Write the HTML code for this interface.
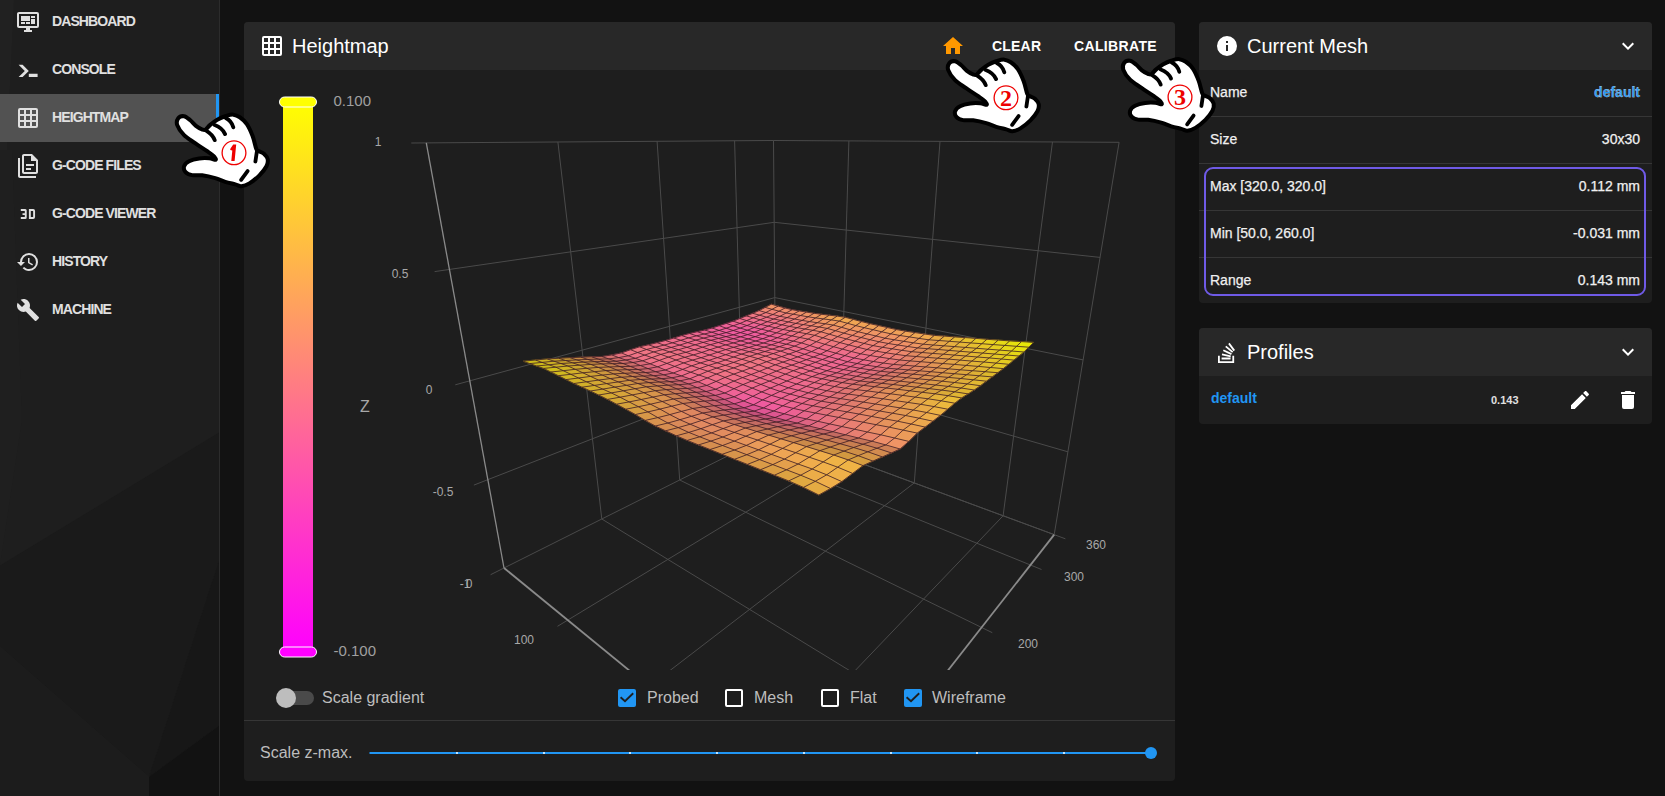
<!DOCTYPE html>
<html><head><meta charset="utf-8">
<style>
*{box-sizing:border-box;margin:0;padding:0}
html,body{width:1665px;height:796px;overflow:hidden;background:#121212;font-family:"Liberation Sans",sans-serif;color:#fff}
#side{position:absolute;left:0;top:0;width:219px;height:796px;background:#1e1e1e;overflow:hidden}
#sideb{position:absolute;left:219px;top:0;width:1px;height:796px;background:#2c2c2c}
.nav{position:absolute;left:0;width:219px;height:48px}
.nav .t{position:absolute;left:52px;top:15px;font-size:14px;line-height:16px;font-weight:bold;color:#e0e0e0;white-space:nowrap;letter-spacing:-0.9px}
.nav svg{position:absolute;left:16px;top:12px;fill:#e0e0e0}
.nav.act{background:#525252}
.nav.act .bar{position:absolute;left:216px;top:0;width:3px;height:48px;background:#2196f3}
.card{position:absolute;background:#1e1e1e;border-radius:4px;overflow:hidden}
.card .hd{position:absolute;left:0;top:0;right:0;height:48px;background:#282828}
.ttl{position:absolute;font-size:20px;line-height:24px;color:#fff;white-space:nowrap}
.ic{position:absolute;fill:#fff}
.row{position:absolute;left:0;right:0;height:47px;border-top:1px solid #363636}
.row .l{position:absolute;left:11px;top:13px;-webkit-text-stroke:0.25px #f0f0f0;font-size:14px;line-height:18px;color:#f0f0f0;white-space:nowrap}
.row .r{position:absolute;right:12px;top:13px;-webkit-text-stroke:0.25px #f0f0f0;font-size:14px;line-height:18px;color:#f0f0f0;white-space:nowrap}
.btn{position:absolute;font-size:14px;line-height:16px;font-weight:bold;color:#fff;white-space:nowrap}
.lbl{position:absolute;font-size:16px;line-height:18px;color:#bdbdbd;white-space:nowrap}
.cb{position:absolute;width:18px;height:18px;border-radius:2px}
.cb.on{background:#2196f3}
.cb.off{border:2px solid #fff}
.tick{position:absolute;font-size:12px;line-height:14px;color:#a8a8a8;white-space:nowrap}
#gfx{position:absolute;left:0;top:0;width:1665px;height:796px}
</style></head><body>
<div id="side">
 <svg style="position:absolute;left:0;top:0" width="219" height="796" viewBox="0 0 219 796">
  <polygon points="0,0 14,0 0,300" fill="#212121"/>
  <polygon points="0,150 12,150 22,420 0,565" fill="#1f1f1f"/>
  <polygon points="0,565.6 220,432 220,557.7 149,777 0,646.6" fill="#1a1a1a"/>
  <polygon points="0,646.6 149,777 149,796 0,796" fill="#1c1c1c"/>
  <polygon points="220,557.7 220,725 149,777" fill="#171717"/>
  <polygon points="149,777 220,725 220,796 149,796" fill="#121212"/>
 </svg>
 <div class="nav" style="top:-2px"><svg width="24" height="24" viewBox="0 0 24 24"><path d="M21,16V4H3V16H21M21,2A2,2 0 0,1 23,4V16A2,2 0 0,1 21,18H14V20H16V22H8V20H10V18H3C1.89,18 1,17.1 1,16V4C1,2.89 1.89,2 3,2H21M5,6H14V11H5V6M15,6H19V8H15V6M19,9V14H15V9H19M5,12H9V14H5V12M10,12H14V14H10V12Z"/></svg><span class="t">DASHBOARD</span></div>
 <div class="nav" style="top:46px"><svg width="24" height="24" viewBox="0 0 24 24"><path d="M2.6,6.8H6.6L12.8,12.9L6.6,19H2.6L8.8,12.9Z M12.8,15.8H21.6V19H12.8Z"/></svg><span class="t">CONSOLE</span></div>
 <div class="nav act" style="top:94px"><svg width="24" height="24" viewBox="0 0 24 24"><path d="M10,4V8H14V4H10M16,4V8H20V4H16M16,10V14H20V10H16M16,16V20H20V16H16M14,20V16H10V20H14M8,20V16H4V20H8M8,14V10H4V14H8M8,8V4H4V8H8M10,14H14V10H10V14M4,2H20A2,2 0 0,1 22,4V20A2,2 0 0,1 20,22H4C2.92,22 2,21.1 2,20V4A2,2 0 0,1 4,2Z"/></svg><span class="t">HEIGHTMAP</span><div class="bar"></div></div>
 <div class="nav" style="top:142px"><svg width="24" height="24" viewBox="0 0 24 24"><path d="M16,0H8C6.9,0 6,0.9 6,2V18C6,19.1 6.9,20 8,20H20C21.1,20 22,19.1 22,18V6L16,0M20,18H8V2H15V7H20V18M4,4V22H20V24H4C2.9,24 2,23.1 2,22V4H4M10,10V12H18V10H10M10,14V16H15V14H10Z"/></svg><span class="t">G-CODE FILES</span></div>
 <div class="nav" style="top:190px"><svg width="24" height="24" viewBox="0 0 24 24"><path fill-rule="evenodd" d="M4.8,7.1H9.2Q10.7,7.1 10.7,8.6V15.5Q10.7,17 9.2,17H4.8V15.1H8.8V13H6.5V11.2H8.8V9H4.8Z M12.9,7.1H17.2Q19.05,7.1 19.05,9V15.1Q19.05,17 17.2,17H12.9Z M14.8,9V15.1H16.8Q17.15,15.1 17.15,14.8V9.3Q17.15,9 16.8,9Z"/></svg><span class="t">G-CODE VIEWER</span></div>
 <div class="nav" style="top:238px"><svg width="24" height="24" viewBox="0 0 24 24"><path d="M13.5,8H12V13L16.28,15.54L17,14.33L13.5,12.25V8M13,3A9,9 0 0,0 4,12H1L4.96,16.03L9,12H6A7,7 0 0,1 13,5A7,7 0 0,1 20,12A7,7 0 0,1 13,19C11.07,19 9.32,18.21 8.06,16.94L6.64,18.36C8.27,20 10.5,21 13,21A9,9 0 0,0 22,12A9,9 0 0,0 13,3"/></svg><span class="t">HISTORY</span></div>
 <div class="nav" style="top:286px"><svg width="24" height="24" viewBox="0 0 24 24"><path d="M22.7,19L13.6,9.9C14.5,7.6 14,4.9 12.1,3C10.1,1 7.1,0.6 4.7,1.7L9,6L6,9L1.6,4.7C0.4,7.1 0.9,10.1 2.9,12.1C4.8,14 7.5,14.5 9.8,13.6L18.9,22.7C19.3,23.1 19.9,23.1 20.3,22.7L22.6,20.4C23.1,20 23.1,19.3 22.7,19Z"/></svg><span class="t">MACHINE</span></div>
</div>
<div id="sideb"></div>

<!-- Heightmap card -->
<div class="card" style="left:244px;top:22px;width:931px;height:759px">
 <div class="hd"></div>
 <svg class="ic" style="left:16px;top:12px" width="24" height="24" viewBox="0 0 24 24"><path d="M10,4V8H14V4H10M16,4V8H20V4H16M16,10V14H20V10H16M16,16V20H20V16H16M14,20V16H10V20H14M8,20V16H4V20H8M8,14V10H4V14H8M8,8V4H4V8H8M10,14H14V10H10V14M4,2H20A2,2 0 0,1 22,4V20A2,2 0 0,1 20,22H4C2.92,22 2,21.1 2,20V4A2,2 0 0,1 4,2Z"/></svg>
 <div class="ttl" style="left:48px;top:12px">Heightmap</div>
 <svg class="ic" style="left:697px;top:12px;fill:#ff9800" width="24" height="24" viewBox="0 0 24 24"><path d="M10,20V14H14V20H19V12H22L12,3L2,12H5V20H10Z"/></svg>
 <div class="btn" style="left:748px;top:16px;letter-spacing:0.2px">CLEAR</div>
 <div class="btn" style="left:830px;top:16px;letter-spacing:0.35px">CALIBRATE</div>
 <div style="position:absolute;left:0;right:0;top:698px;height:1px;background:#363636"></div>
 <!-- toggle -->
 <div style="position:absolute;left:38px;top:669px;width:32px;height:14px;border-radius:7px;background:#4a4a4a"></div>
 <div style="position:absolute;left:32px;top:666px;width:20px;height:20px;border-radius:10px;background:#bdbdbd"></div>
 <div class="lbl" style="left:78px;top:667px">Scale gradient</div>
 <div class="cb on" style="left:374px;top:667px"><svg width="18" height="18" viewBox="0 0 18 18"><path d="M2.6,8.2L7,12.2L15.2,4.3" stroke="#1e1e1e" stroke-width="1.9" fill="none"/></svg></div>
 <div class="lbl" style="left:403px;top:667px">Probed</div>
 <div class="cb off" style="left:481px;top:667px"></div>
 <div class="lbl" style="left:510px;top:667px">Mesh</div>
 <div class="cb off" style="left:577px;top:667px"></div>
 <div class="lbl" style="left:606px;top:667px">Flat</div>
 <div class="cb on" style="left:660px;top:667px"><svg width="18" height="18" viewBox="0 0 18 18"><path d="M2.6,8.2L7,12.2L15.2,4.3" stroke="#1e1e1e" stroke-width="1.9" fill="none"/></svg></div>
 <div class="lbl" style="left:688px;top:667px">Wireframe</div>
 <div class="lbl" style="left:16px;top:722px">Scale z-max.</div>
</div>

<!-- Current Mesh card -->
<div class="card" style="left:1199px;top:22px;width:453px;height:281px">
 <div class="hd"></div>
 <svg class="ic" style="left:16px;top:12px" width="24" height="24" viewBox="0 0 24 24"><path d="M13,9H11V7H13M13,17H11V11H13M12,2A10,10 0 0,0 2,12A10,10 0 0,0 12,22A10,10 0 0,0 22,12A10,10 0 0,0 12,2Z"/></svg>
 <div class="ttl" style="left:48px;top:12px">Current Mesh</div>
 <svg class="ic" style="left:417px;top:12px" width="24" height="24" viewBox="0 0 24 24"><path d="M7.41,8.58L12,13.17L16.59,8.58L18,10L12,16L6,10L7.41,8.58Z"/></svg>
 <div class="row" style="top:48px;border-top:none"><span class="l">Name</span><span class="r" style="color:#2196f3;font-weight:bold">default</span></div>
 <div class="row" style="top:94px"><span class="l">Size</span><span class="r">30x30</span></div>
 <div class="row" style="top:141px"><span class="l">Max [320.0, 320.0]</span><span class="r">0.112 mm</span></div>
 <div class="row" style="top:188px"><span class="l">Min [50.0, 260.0]</span><span class="r">-0.031 mm</span></div>
 <div class="row" style="top:235px"><span class="l">Range</span><span class="r">0.143 mm</span></div>
 <div style="position:absolute;left:5px;top:145px;width:442px;height:129px;border:2px solid #6f5ae6;border-radius:9px"></div>
</div>

<!-- Profiles card -->
<div class="card" style="left:1199px;top:328px;width:453px;height:96px">
 <div class="hd"></div>
 <svg class="ic" style="left:16px;top:13px" width="24" height="24" viewBox="0 0 24 24"><path d="M17.36,20.2V14.82H19.15V22H3V14.82H4.8V20.2H17.36M6.77,14.32L7.14,12.56L15.93,14.41L15.56,16.17L6.77,14.32M7.93,10.11L8.69,8.5L16.83,12.28L16.07,13.9L7.93,10.11M10.19,6.12L11.34,4.74L18.24,10.5L17.09,11.87L10.19,6.12M14.64,1.87L20,9.08L18.56,10.15L13.2,2.94L14.64,1.87M6.59,18.41V16.61H15.57V18.41H6.59Z"/></svg>
 <div class="ttl" style="left:48px;top:12px">Profiles</div>
 <svg class="ic" style="left:417px;top:12px" width="24" height="24" viewBox="0 0 24 24"><path d="M7.41,8.58L12,13.17L16.59,8.58L18,10L12,16L6,10L7.41,8.58Z"/></svg>
 <div style="position:absolute;left:12px;top:62px;font-size:14px;line-height:16px;font-weight:bold;color:#2196f3">default</div>
 <div style="position:absolute;left:292px;top:66px;font-size:11px;line-height:13px;font-weight:bold;color:#e0e0e0">0.143</div>
 <svg class="ic" style="left:369px;top:60px" width="24" height="24" viewBox="0 0 24 24"><path d="M20.71,7.04C21.1,6.65 21.1,6 20.71,5.63L18.37,3.29C18,2.9 17.35,2.9 16.96,3.29L15.12,5.12L18.87,8.87M3,17.25V21H6.75L17.81,9.93L14.06,6.18L3,17.25Z"/></svg>
 <svg class="ic" style="left:417px;top:60px" width="24" height="24" viewBox="0 0 24 24"><path d="M19,4H15.5L14.5,3H9.5L8.5,4H5V6H19M6,19A2,2 0 0,0 8,21H16A2,2 0 0,0 18,19V7H6V19Z"/></svg>
</div>

<svg id="gfx" width="1665" height="796" viewBox="0 0 1665 796">
 <defs>
  <linearGradient id="cbg" x1="0" y1="0" x2="0" y2="1"><stop offset="0" stop-color="#ffff00"/><stop offset="1" stop-color="#ff00ff"/></linearGradient>
  <symbol id="hand" viewBox="0 0 1045 796" overflow="visible"><path d="M92,82C103,67 130,59 150,62C170,65 192,86 212,102C232,118 249,143 268,158C287,173 312,186 328,192C344,198 348,203 362,196C376,189 390,165 410,148C430,131 455,110 480,96C505,82 533,70 560,62C587,54 616,44 640,46C664,48 682,56 705,72C728,88 754,109 775,140C796,171 816,217 832,258C848,299 858,360 868,385C878,410 877,400 890,408C903,416 930,421 945,435C960,449 978,469 982,490C986,511 984,533 970,560C956,587 928,622 900,650C872,678 830,712 800,730C770,748 743,756 720,758C697,760 687,747 660,740C633,733 593,725 560,715C527,705 498,689 460,678C422,667 368,655 330,650C292,645 258,653 230,648C202,643 178,633 165,618C152,603 144,578 150,560C156,542 175,523 200,510C225,497 267,487 300,482C333,477 372,478 400,480C428,482 458,499 465,495C472,491 454,469 440,455C426,441 410,431 380,410C350,389 298,357 260,330C222,303 180,280 150,250C120,220 92,178 82,150C72,122 81,97 92,82Z" fill="#fff" stroke="#000" stroke-width="40" stroke-linejoin="round"/><path d="M565,80Q622,108 640,172 M455,150Q530,178 558,240 M370,205Q436,245 455,300 M875,410L860,512 M782,608L718,695" stroke="#000" stroke-width="38" stroke-linecap="round" fill="none"/></symbol>
 </defs>
 <!-- slider -->
 <line x1="369.5" y1="753" x2="1151" y2="753" stroke="#2196f3" stroke-width="2"/>
 <g fill="#bfe3ff">
  <rect x="456" y="752" width="2" height="2"/><rect x="543" y="752" width="2" height="2"/><rect x="629" y="752" width="2" height="2"/><rect x="716" y="752" width="2" height="2"/><rect x="803" y="752" width="2" height="2"/><rect x="890" y="752" width="2" height="2"/><rect x="976" y="752" width="2" height="2"/><rect x="1063" y="752" width="2" height="2"/>
 </g>
 <circle cx="1151" cy="753" r="6" fill="#2196f3"/>
 <!-- colorbar -->
 <rect x="283" y="102" width="30" height="550" fill="url(#cbg)"/>
 <rect x="279.5" y="97" width="37" height="10" rx="5" fill="#ffff00" stroke="#fff" stroke-width="1"/>
 <rect x="279.5" y="647" width="37" height="10" rx="5" fill="#ff00ff" stroke="#fff" stroke-width="1"/>
 <g font-family="Liberation Sans" fill="#a0a0a0" font-size="15"><text x="333.5" y="106">0.100</text><text x="333.5" y="656">-0.100</text></g>
 <!-- chart -->
 <clipPath id="plotclip"><rect x="244" y="70" width="931" height="600"/></clipPath>
 <g clip-path="url(#plotclip)">
<line x1="601.8" y1="519.0" x2="557.9" y2="142.0" stroke="#4a4a4a" stroke-width="1"/>
<line x1="679.7" y1="480.0" x2="657.1" y2="141.3" stroke="#4a4a4a" stroke-width="1"/>
<line x1="743.2" y1="448.2" x2="734.6" y2="140.8" stroke="#4a4a4a" stroke-width="1"/>
<line x1="490.6" y1="574.7" x2="775.9" y2="431.8" stroke="#4a4a4a" stroke-width="1"/>
<line x1="473.9" y1="485.1" x2="775.4" y2="367.3" stroke="#4a4a4a" stroke-width="1"/>
<line x1="455.3" y1="384.8" x2="774.8" y2="297.6" stroke="#4a4a4a" stroke-width="1"/>
<line x1="434.6" y1="271.6" x2="774.2" y2="222.3" stroke="#4a4a4a" stroke-width="1"/>
<line x1="411.3" y1="143.0" x2="773.5" y2="140.5" stroke="#4a4a4a" stroke-width="1"/>
<line x1="839.6" y1="455.3" x2="848.9" y2="140.9" stroke="#4a4a4a" stroke-width="1"/>
<line x1="914.3" y1="482.9" x2="940.0" y2="141.4" stroke="#4a4a4a" stroke-width="1"/>
<line x1="1003.1" y1="515.8" x2="1052.5" y2="141.9" stroke="#4a4a4a" stroke-width="1"/>
<line x1="775.9" y1="431.8" x2="1054.2" y2="534.6" stroke="#4a4a4a" stroke-width="1"/>
<line x1="775.4" y1="367.3" x2="1067.9" y2="451.8" stroke="#4a4a4a" stroke-width="1"/>
<line x1="774.8" y1="297.6" x2="1083.1" y2="359.9" stroke="#4a4a4a" stroke-width="1"/>
<line x1="774.2" y1="222.3" x2="1100.1" y2="257.4" stroke="#4a4a4a" stroke-width="1"/>
<line x1="773.5" y1="140.5" x2="1119.1" y2="142.3" stroke="#4a4a4a" stroke-width="1"/>
<line x1="775.9" y1="431.8" x2="773.5" y2="140.5" stroke="#4a4a4a" stroke-width="1"/>
<line x1="1054.2" y1="534.6" x2="1119.1" y2="142.3" stroke="#4a4a4a" stroke-width="1"/>
<line x1="557.5" y1="626.3" x2="839.6" y2="455.3" stroke="#4a4a4a" stroke-width="1"/>
<line x1="639.5" y1="693.9" x2="914.3" y2="482.9" stroke="#4a4a4a" stroke-width="1"/>
<line x1="747.8" y1="782.9" x2="1003.1" y2="515.8" stroke="#4a4a4a" stroke-width="1"/>
<line x1="926.3" y1="717.5" x2="601.8" y2="519.0" stroke="#4a4a4a" stroke-width="1"/>
<line x1="992.3" y1="632.7" x2="679.7" y2="480.0" stroke="#4a4a4a" stroke-width="1"/>
<line x1="1041.5" y1="569.5" x2="743.2" y2="448.2" stroke="#4a4a4a" stroke-width="1"/>
<line x1="1065.4" y1="538.8" x2="775.9" y2="431.8" stroke="#4a4a4a" stroke-width="1"/>
<line x1="504.0" y1="568.0" x2="426.3" y2="142.9" stroke="#8a8a8a" stroke-width="1.3"/>
<line x1="504.0" y1="568.0" x2="823.6" y2="829.4" stroke="#8a8a8a" stroke-width="1.8"/>
<line x1="1054.2" y1="534.6" x2="823.6" y2="829.4" stroke="#8a8a8a" stroke-width="1.8"/>
 </g>
 <g font-family="Liberation Sans" fill="#a8a8a8" font-size="12" text-anchor="middle">
  <text x="378" y="146">1</text>
  <text x="400" y="278">0.5</text>
  <text x="429" y="394">0</text>
  <text x="443" y="496">-0.5</text>
  <text x="465" y="588">-1</text><text x="469" y="588">0</text>
  <text x="524" y="644">100</text>
  <text x="1096" y="549">360</text>
  <text x="1074" y="581">300</text>
  <text x="1028" y="648">200</text>
  <text x="365" y="412" font-size="16">Z</text>
 </g>
 <g>
<polygon points="523.1,361.2 529.8,363.6 542.1,362.4 535.4,360.0" fill="#ccbb1a" stroke="#ccbb1a" stroke-width="0.6"/>
<polygon points="535.4,360.0 542.1,362.4 554.0,361.2 547.2,358.9" fill="#cdb223" stroke="#cdb223" stroke-width="0.6"/>
<polygon points="547.2,358.9 554.0,361.2 565.6,360.5 558.8,358.3" fill="#c7a22c" stroke="#c7a22c" stroke-width="0.6"/>
<polygon points="558.8,358.3 565.6,360.5 576.8,359.9 570.1,357.7" fill="#c69737" stroke="#c69737" stroke-width="0.6"/>
<polygon points="570.1,357.7 576.8,359.9 587.8,359.4 581.0,357.2" fill="#c68b43" stroke="#c68b43" stroke-width="0.6"/>
<polygon points="581.0,357.2 587.8,359.4 598.4,359.1 591.6,356.8" fill="#c47e4e" stroke="#c47e4e" stroke-width="0.6"/>
<polygon points="591.6,356.8 598.4,359.1 608.8,358.9 601.9,356.5" fill="#c5715b" stroke="#c5715b" stroke-width="0.6"/>
<polygon points="601.9,356.5 608.8,358.9 618.7,357.6 611.8,354.9" fill="#d7716f" stroke="#d7716f" stroke-width="0.6"/>
<polygon points="611.8,354.9 618.7,357.6 628.3,355.8 621.4,352.9" fill="#e3707c" stroke="#e3707c" stroke-width="0.6"/>
<polygon points="621.4,352.9 628.3,355.8 637.6,352.5 630.6,349.7" fill="#ef7584" stroke="#ef7584" stroke-width="0.6"/>
<polygon points="630.6,349.7 637.6,352.5 646.6,349.5 639.6,346.8" fill="#ef7782" stroke="#ef7782" stroke-width="0.6"/>
<polygon points="639.6,346.8 646.6,349.5 655.4,347.2 648.5,344.8" fill="#ed7482" stroke="#ed7482" stroke-width="0.6"/>
<polygon points="648.5,344.8 655.4,347.2 664.1,345.1 657.1,342.7" fill="#eb7085" stroke="#eb7085" stroke-width="0.6"/>
<polygon points="657.1,342.7 664.1,345.1 672.5,342.8 665.5,340.5" fill="#ef6e8a" stroke="#ef6e8a" stroke-width="0.6"/>
<polygon points="665.5,340.5 672.5,342.8 680.7,340.3 673.8,338.0" fill="#ef6d8c" stroke="#ef6d8c" stroke-width="0.6"/>
<polygon points="673.8,338.0 680.7,340.3 688.7,337.9 681.8,335.6" fill="#ef6c8d" stroke="#ef6c8d" stroke-width="0.6"/>
<polygon points="681.8,335.6 688.7,337.9 696.6,335.8 689.6,333.5" fill="#ef6a8e" stroke="#ef6a8e" stroke-width="0.6"/>
<polygon points="689.6,333.5 696.6,335.8 704.2,334.0 697.3,331.7" fill="#ec6590" stroke="#ec6590" stroke-width="0.6"/>
<polygon points="697.3,331.7 704.2,334.0 711.7,332.2 704.8,330.0" fill="#ec6293" stroke="#ec6293" stroke-width="0.6"/>
<polygon points="704.8,330.0 711.7,332.2 719.1,330.4 712.1,328.0" fill="#ef6099" stroke="#ef6099" stroke-width="0.6"/>
<polygon points="712.1,328.0 719.1,330.4 726.2,328.2 719.3,325.7" fill="#ef6099" stroke="#ef6099" stroke-width="0.6"/>
<polygon points="719.3,325.7 726.2,328.2 733.2,325.8 726.3,323.4" fill="#ef6198" stroke="#ef6198" stroke-width="0.6"/>
<polygon points="726.3,323.4 733.2,325.8 740.0,323.4 733.1,321.2" fill="#ef6495" stroke="#ef6495" stroke-width="0.6"/>
<polygon points="733.1,321.2 740.0,323.4 746.7,320.6 739.8,318.5" fill="#ef6990" stroke="#ef6990" stroke-width="0.6"/>
<polygon points="739.8,318.5 746.7,320.6 753.2,317.8 746.3,315.9" fill="#ef6f8a" stroke="#ef6f8a" stroke-width="0.6"/>
<polygon points="746.3,315.9 753.2,317.8 759.6,315.2 752.8,313.3" fill="#ef7683" stroke="#ef7683" stroke-width="0.6"/>
<polygon points="752.8,313.3 759.6,315.2 765.9,312.5 759.1,310.6" fill="#ef7d7c" stroke="#ef7d7c" stroke-width="0.6"/>
<polygon points="759.1,310.6 765.9,312.5 772.0,309.3 765.2,307.4" fill="#ef8772" stroke="#ef8772" stroke-width="0.6"/>
<polygon points="765.2,307.4 772.0,309.3 778.1,306.1 771.3,304.2" fill="#ef9266" stroke="#ef9266" stroke-width="0.6"/>
<polygon points="529.8,363.6 536.6,366.0 548.9,364.8 542.1,362.4" fill="#ccba1a" stroke="#ccba1a" stroke-width="0.6"/>
<polygon points="542.1,362.4 548.9,364.8 560.9,363.5 554.0,361.2" fill="#ccb123" stroke="#ccb123" stroke-width="0.6"/>
<polygon points="554.0,361.2 560.9,363.5 572.5,362.8 565.6,360.5" fill="#c7a22c" stroke="#c7a22c" stroke-width="0.6"/>
<polygon points="565.6,360.5 572.5,362.8 583.8,362.1 576.8,359.9" fill="#c79737" stroke="#c79737" stroke-width="0.6"/>
<polygon points="576.8,359.9 583.8,362.1 594.8,361.7 587.8,359.4" fill="#c58b42" stroke="#c58b42" stroke-width="0.6"/>
<polygon points="587.8,359.4 594.8,361.7 605.4,361.4 598.4,359.1" fill="#c47e4d" stroke="#c47e4d" stroke-width="0.6"/>
<polygon points="598.4,359.1 605.4,361.4 615.8,361.2 608.8,358.9" fill="#c3715a" stroke="#c3715a" stroke-width="0.6"/>
<polygon points="608.8,358.9 615.8,361.2 625.8,360.0 618.7,357.6" fill="#d16e6c" stroke="#d16e6c" stroke-width="0.6"/>
<polygon points="618.7,357.6 625.8,360.0 635.4,358.3 628.3,355.8" fill="#dd6c7a" stroke="#dd6c7a" stroke-width="0.6"/>
<polygon points="628.3,355.8 635.4,358.3 644.7,355.1 637.6,352.5" fill="#ef7386" stroke="#ef7386" stroke-width="0.6"/>
<polygon points="637.6,352.5 644.7,355.1 653.7,351.9 646.6,349.5" fill="#ef7584" stroke="#ef7584" stroke-width="0.6"/>
<polygon points="646.6,349.5 653.7,351.9 662.6,349.6 655.4,347.2" fill="#ef7484" stroke="#ef7484" stroke-width="0.6"/>
<polygon points="655.4,347.2 662.6,349.6 671.2,347.4 664.1,345.1" fill="#eb6f86" stroke="#eb6f86" stroke-width="0.6"/>
<polygon points="664.1,345.1 671.2,347.4 679.6,345.1 672.5,342.8" fill="#ef6e8b" stroke="#ef6e8b" stroke-width="0.6"/>
<polygon points="672.5,342.8 679.6,345.1 687.8,342.6 680.7,340.3" fill="#ef6c8d" stroke="#ef6c8d" stroke-width="0.6"/>
<polygon points="680.7,340.3 687.8,342.6 695.8,340.1 688.7,337.9" fill="#ef6b8e" stroke="#ef6b8e" stroke-width="0.6"/>
<polygon points="688.7,337.9 695.8,340.1 703.7,338.1 696.6,335.8" fill="#ef6990" stroke="#ef6990" stroke-width="0.6"/>
<polygon points="696.6,335.8 703.7,338.1 711.3,336.2 704.2,334.0" fill="#eb6391" stroke="#eb6391" stroke-width="0.6"/>
<polygon points="704.2,334.0 711.3,336.2 718.8,334.5 711.7,332.2" fill="#eb5f95" stroke="#eb5f95" stroke-width="0.6"/>
<polygon points="711.7,332.2 718.8,334.5 726.1,332.6 719.1,330.4" fill="#ee5d9b" stroke="#ee5d9b" stroke-width="0.6"/>
<polygon points="719.1,330.4 726.1,332.6 733.2,330.5 726.2,328.2" fill="#ef5c9d" stroke="#ef5c9d" stroke-width="0.6"/>
<polygon points="726.2,328.2 733.2,330.5 740.2,328.1 733.2,325.8" fill="#ef5c9c" stroke="#ef5c9c" stroke-width="0.6"/>
<polygon points="733.2,325.8 740.2,328.1 747.0,325.5 740.0,323.4" fill="#ef5f99" stroke="#ef5f99" stroke-width="0.6"/>
<polygon points="740.0,323.4 747.0,325.5 753.7,322.6 746.7,320.6" fill="#ef6594" stroke="#ef6594" stroke-width="0.6"/>
<polygon points="746.7,320.6 753.7,322.6 760.2,319.8 753.2,317.8" fill="#ef6c8d" stroke="#ef6c8d" stroke-width="0.6"/>
<polygon points="753.2,317.8 760.2,319.8 766.6,317.2 759.6,315.2" fill="#ef7386" stroke="#ef7386" stroke-width="0.6"/>
<polygon points="759.6,315.2 766.6,317.2 772.9,314.5 765.9,312.5" fill="#ef7a7f" stroke="#ef7a7f" stroke-width="0.6"/>
<polygon points="765.9,312.5 772.9,314.5 779.0,311.2 772.0,309.3" fill="#ef8375" stroke="#ef8375" stroke-width="0.6"/>
<polygon points="772.0,309.3 779.0,311.2 785.0,308.0 778.1,306.1" fill="#ef8f6a" stroke="#ef8f6a" stroke-width="0.6"/>
<polygon points="536.6,366.0 543.6,368.4 555.9,367.2 548.9,364.8" fill="#cbba1a" stroke="#cbba1a" stroke-width="0.6"/>
<polygon points="548.9,364.8 555.9,367.2 567.9,366.0 560.9,363.5" fill="#ccb123" stroke="#ccb123" stroke-width="0.6"/>
<polygon points="560.9,363.5 567.9,366.0 579.6,365.2 572.5,362.8" fill="#c7a32c" stroke="#c7a32c" stroke-width="0.6"/>
<polygon points="572.5,362.8 579.6,365.2 590.9,364.4 583.8,362.1" fill="#c79836" stroke="#c79836" stroke-width="0.6"/>
<polygon points="583.8,362.1 590.9,364.4 601.9,363.9 594.8,361.7" fill="#c58c40" stroke="#c58c40" stroke-width="0.6"/>
<polygon points="594.8,361.7 601.9,363.9 612.6,363.7 605.4,361.4" fill="#c37f4c" stroke="#c37f4c" stroke-width="0.6"/>
<polygon points="605.4,361.4 612.6,363.7 623.0,363.5 615.8,361.2" fill="#c27158" stroke="#c27158" stroke-width="0.6"/>
<polygon points="615.8,361.2 623.0,363.5 633.0,362.5 625.8,360.0" fill="#ce6c69" stroke="#ce6c69" stroke-width="0.6"/>
<polygon points="625.8,360.0 633.0,362.5 642.6,360.8 635.4,358.3" fill="#da6a78" stroke="#da6a78" stroke-width="0.6"/>
<polygon points="635.4,358.3 642.6,360.8 651.9,357.6 644.7,355.1" fill="#ef7286" stroke="#ef7286" stroke-width="0.6"/>
<polygon points="644.7,355.1 651.9,357.6 660.9,354.4 653.7,351.9" fill="#ef7584" stroke="#ef7584" stroke-width="0.6"/>
<polygon points="653.7,351.9 660.9,354.4 669.8,351.9 662.6,349.6" fill="#ef7484" stroke="#ef7484" stroke-width="0.6"/>
<polygon points="662.6,349.6 669.8,351.9 678.4,349.7 671.2,347.4" fill="#eb6f85" stroke="#eb6f85" stroke-width="0.6"/>
<polygon points="671.2,347.4 678.4,349.7 686.9,347.3 679.6,345.1" fill="#ef6e8b" stroke="#ef6e8b" stroke-width="0.6"/>
<polygon points="679.6,345.1 686.9,347.3 695.1,344.8 687.8,342.6" fill="#ef6c8c" stroke="#ef6c8c" stroke-width="0.6"/>
<polygon points="687.8,342.6 695.1,344.8 703.1,342.4 695.8,340.1" fill="#ef6b8e" stroke="#ef6b8e" stroke-width="0.6"/>
<polygon points="695.8,340.1 703.1,342.4 710.9,340.3 703.7,338.1" fill="#ee6890" stroke="#ee6890" stroke-width="0.6"/>
<polygon points="703.7,338.1 710.9,340.3 718.5,338.4 711.3,336.2" fill="#ea6291" stroke="#ea6291" stroke-width="0.6"/>
<polygon points="711.3,336.2 718.5,338.4 726.0,336.6 718.8,334.5" fill="#ea5e96" stroke="#ea5e96" stroke-width="0.6"/>
<polygon points="718.8,334.5 726.0,336.6 733.3,334.8 726.1,332.6" fill="#ec5b9b" stroke="#ec5b9b" stroke-width="0.6"/>
<polygon points="726.1,332.6 733.3,334.8 740.4,332.6 733.2,330.5" fill="#ef5a9f" stroke="#ef5a9f" stroke-width="0.6"/>
<polygon points="733.2,330.5 740.4,332.6 747.4,330.2 740.2,328.1" fill="#ef5a9f" stroke="#ef5a9f" stroke-width="0.6"/>
<polygon points="740.2,328.1 747.4,330.2 754.2,327.5 747.0,325.5" fill="#ef5d9b" stroke="#ef5d9b" stroke-width="0.6"/>
<polygon points="747.0,325.5 754.2,327.5 760.8,324.5 753.7,322.6" fill="#ef6396" stroke="#ef6396" stroke-width="0.6"/>
<polygon points="753.7,322.6 760.8,324.5 767.3,321.7 760.2,319.8" fill="#ef6a8f" stroke="#ef6a8f" stroke-width="0.6"/>
<polygon points="760.2,319.8 767.3,321.7 773.7,319.0 766.6,317.2" fill="#ef7188" stroke="#ef7188" stroke-width="0.6"/>
<polygon points="766.6,317.2 773.7,319.0 779.9,316.3 772.9,314.5" fill="#ef7881" stroke="#ef7881" stroke-width="0.6"/>
<polygon points="772.9,314.5 779.9,316.3 786.1,313.0 779.0,311.2" fill="#ef8178" stroke="#ef8178" stroke-width="0.6"/>
<polygon points="779.0,311.2 786.1,313.0 792.1,309.7 785.0,308.0" fill="#ef8d6c" stroke="#ef8d6c" stroke-width="0.6"/>
<polygon points="543.6,368.4 550.9,372.0 563.3,370.7 555.9,367.2" fill="#d0bd1c" stroke="#d0bd1c" stroke-width="0.6"/>
<polygon points="555.9,367.2 563.3,370.7 575.3,369.3 567.9,366.0" fill="#d1b425" stroke="#d1b425" stroke-width="0.6"/>
<polygon points="567.9,366.0 575.3,369.3 587.0,368.3 579.6,365.2" fill="#cca62e" stroke="#cca62e" stroke-width="0.6"/>
<polygon points="579.6,365.2 587.0,368.3 598.3,367.4 590.9,364.4" fill="#cb9b38" stroke="#cb9b38" stroke-width="0.6"/>
<polygon points="590.9,364.4 598.3,367.4 609.3,366.9 601.9,363.9" fill="#c88e42" stroke="#c88e42" stroke-width="0.6"/>
<polygon points="601.9,363.9 609.3,366.9 620.0,366.6 612.6,363.7" fill="#c6804d" stroke="#c6804d" stroke-width="0.6"/>
<polygon points="612.6,363.7 620.0,366.6 630.4,366.4 623.0,363.5" fill="#c47359" stroke="#c47359" stroke-width="0.6"/>
<polygon points="623.0,363.5 630.4,366.4 640.4,365.5 633.0,362.5" fill="#cf6d6a" stroke="#cf6d6a" stroke-width="0.6"/>
<polygon points="633.0,362.5 640.4,365.5 650.1,363.8 642.6,360.8" fill="#db6a79" stroke="#db6a79" stroke-width="0.6"/>
<polygon points="642.6,360.8 650.1,363.8 659.3,360.4 651.9,357.6" fill="#ef7287" stroke="#ef7287" stroke-width="0.6"/>
<polygon points="651.9,357.6 659.3,360.4 668.4,357.1 660.9,354.4" fill="#ef7485" stroke="#ef7485" stroke-width="0.6"/>
<polygon points="660.9,354.4 668.4,357.1 677.2,354.5 669.8,351.9" fill="#ef7484" stroke="#ef7484" stroke-width="0.6"/>
<polygon points="669.8,351.9 677.2,354.5 685.9,352.3 678.4,349.7" fill="#ec7085" stroke="#ec7085" stroke-width="0.6"/>
<polygon points="678.4,349.7 685.9,352.3 694.3,349.8 686.9,347.3" fill="#ef6f8a" stroke="#ef6f8a" stroke-width="0.6"/>
<polygon points="686.9,347.3 694.3,349.8 702.5,347.2 695.1,344.8" fill="#ef6d8c" stroke="#ef6d8c" stroke-width="0.6"/>
<polygon points="695.1,344.8 702.5,347.2 710.4,344.7 703.1,342.4" fill="#ef6c8d" stroke="#ef6c8d" stroke-width="0.6"/>
<polygon points="703.1,342.4 710.4,344.7 718.3,342.5 710.9,340.3" fill="#ee688f" stroke="#ee688f" stroke-width="0.6"/>
<polygon points="710.9,340.3 718.3,342.5 725.9,340.6 718.5,338.4" fill="#ea6290" stroke="#ea6290" stroke-width="0.6"/>
<polygon points="718.5,338.4 725.9,340.6 733.4,338.7 726.0,336.6" fill="#ea5e95" stroke="#ea5e95" stroke-width="0.6"/>
<polygon points="726.0,336.6 733.4,338.7 740.6,336.8 733.3,334.8" fill="#eb5b9a" stroke="#eb5b9a" stroke-width="0.6"/>
<polygon points="733.3,334.8 740.6,336.8 747.7,334.6 740.4,332.6" fill="#ef5a9f" stroke="#ef5a9f" stroke-width="0.6"/>
<polygon points="740.4,332.6 747.7,334.6 754.7,332.1 747.4,330.2" fill="#ef5a9f" stroke="#ef5a9f" stroke-width="0.6"/>
<polygon points="747.4,330.2 754.7,332.1 761.4,329.2 754.2,327.5" fill="#ef5d9b" stroke="#ef5d9b" stroke-width="0.6"/>
<polygon points="754.2,327.5 761.4,329.2 768.1,326.1 760.8,324.5" fill="#ef6395" stroke="#ef6395" stroke-width="0.6"/>
<polygon points="760.8,324.5 768.1,326.1 774.6,323.2 767.3,321.7" fill="#ef6b8e" stroke="#ef6b8e" stroke-width="0.6"/>
<polygon points="767.3,321.7 774.6,323.2 780.9,320.4 773.7,319.0" fill="#ef7187" stroke="#ef7187" stroke-width="0.6"/>
<polygon points="773.7,319.0 780.9,320.4 787.1,317.6 779.9,316.3" fill="#ef7880" stroke="#ef7880" stroke-width="0.6"/>
<polygon points="779.9,316.3 787.1,317.6 793.2,314.2 786.1,313.0" fill="#ef8277" stroke="#ef8277" stroke-width="0.6"/>
<polygon points="786.1,313.0 793.2,314.2 799.2,310.9 792.1,309.7" fill="#ef8d6b" stroke="#ef8d6b" stroke-width="0.6"/>
<polygon points="550.9,372.0 558.4,375.7 570.8,374.3 563.3,370.7" fill="#d1b920" stroke="#d1b920" stroke-width="0.6"/>
<polygon points="563.3,370.7 570.8,374.3 582.8,372.8 575.3,369.3" fill="#d2b129" stroke="#d2b129" stroke-width="0.6"/>
<polygon points="575.3,369.3 582.8,372.8 594.5,371.7 587.0,368.3" fill="#cda431" stroke="#cda431" stroke-width="0.6"/>
<polygon points="587.0,368.3 594.5,371.7 605.9,370.6 598.3,367.4" fill="#cd9a3b" stroke="#cd9a3b" stroke-width="0.6"/>
<polygon points="598.3,367.4 605.9,370.6 616.9,370.0 609.3,366.9" fill="#c88c44" stroke="#c88c44" stroke-width="0.6"/>
<polygon points="609.3,366.9 616.9,370.0 627.6,369.7 620.0,366.6" fill="#c67f4f" stroke="#c67f4f" stroke-width="0.6"/>
<polygon points="620.0,366.6 627.6,369.7 638.0,369.5 630.4,366.4" fill="#c5715b" stroke="#c5715b" stroke-width="0.6"/>
<polygon points="630.4,366.4 638.0,369.5 648.0,368.6 640.4,365.5" fill="#ce6a6b" stroke="#ce6a6b" stroke-width="0.6"/>
<polygon points="640.4,365.5 648.0,368.6 657.6,366.8 650.1,363.8" fill="#db687b" stroke="#db687b" stroke-width="0.6"/>
<polygon points="650.1,363.8 657.6,366.8 666.9,363.4 659.3,360.4" fill="#ef7089" stroke="#ef7089" stroke-width="0.6"/>
<polygon points="659.3,360.4 666.9,363.4 676.0,360.0 668.4,357.1" fill="#ef7386" stroke="#ef7386" stroke-width="0.6"/>
<polygon points="668.4,357.1 676.0,360.0 684.8,357.3 677.2,354.5" fill="#ef7385" stroke="#ef7385" stroke-width="0.6"/>
<polygon points="677.2,354.5 684.8,357.3 693.4,354.9 685.9,352.3" fill="#ed7086" stroke="#ed7086" stroke-width="0.6"/>
<polygon points="685.9,352.3 693.4,354.9 701.8,352.4 694.3,349.8" fill="#ef6e8a" stroke="#ef6e8a" stroke-width="0.6"/>
<polygon points="694.3,349.8 701.8,352.4 710.0,349.7 702.5,347.2" fill="#ef6d8c" stroke="#ef6d8c" stroke-width="0.6"/>
<polygon points="702.5,347.2 710.0,349.7 718.0,347.1 710.4,344.7" fill="#ef6c8d" stroke="#ef6c8d" stroke-width="0.6"/>
<polygon points="710.4,344.7 718.0,347.1 725.8,344.9 718.3,342.5" fill="#ef698e" stroke="#ef698e" stroke-width="0.6"/>
<polygon points="718.3,342.5 725.8,344.9 733.4,342.9 725.9,340.6" fill="#eb6490" stroke="#eb6490" stroke-width="0.6"/>
<polygon points="725.9,340.6 733.4,342.9 740.8,340.9 733.4,338.7" fill="#eb6095" stroke="#eb6095" stroke-width="0.6"/>
<polygon points="733.4,338.7 740.8,340.9 748.1,338.9 740.6,336.8" fill="#ec5d99" stroke="#ec5d99" stroke-width="0.6"/>
<polygon points="740.6,336.8 748.1,338.9 755.2,336.7 747.7,334.6" fill="#ef5b9d" stroke="#ef5b9d" stroke-width="0.6"/>
<polygon points="747.7,334.6 755.2,336.7 762.1,334.0 754.7,332.1" fill="#ef5c9d" stroke="#ef5c9d" stroke-width="0.6"/>
<polygon points="754.7,332.1 762.1,334.0 768.8,331.0 761.4,329.2" fill="#ef5f99" stroke="#ef5f99" stroke-width="0.6"/>
<polygon points="761.4,329.2 768.8,331.0 775.5,327.8 768.1,326.1" fill="#ef6693" stroke="#ef6693" stroke-width="0.6"/>
<polygon points="768.1,326.1 775.5,327.8 781.9,324.8 774.6,323.2" fill="#ef6d8c" stroke="#ef6d8c" stroke-width="0.6"/>
<polygon points="774.6,323.2 781.9,324.8 788.3,321.9 780.9,320.4" fill="#ef7485" stroke="#ef7485" stroke-width="0.6"/>
<polygon points="780.9,320.4 788.3,321.9 794.5,319.0 787.1,317.6" fill="#ef7b7e" stroke="#ef7b7e" stroke-width="0.6"/>
<polygon points="787.1,317.6 794.5,319.0 800.6,315.5 793.2,314.2" fill="#ef8474" stroke="#ef8474" stroke-width="0.6"/>
<polygon points="793.2,314.2 800.6,315.5 806.5,312.1 799.2,310.9" fill="#ef9068" stroke="#ef9068" stroke-width="0.6"/>
<polygon points="558.4,375.7 566.0,379.6 578.5,378.0 570.8,374.3" fill="#d1b624" stroke="#d1b624" stroke-width="0.6"/>
<polygon points="570.8,374.3 578.5,378.0 590.6,376.4 582.8,372.8" fill="#d3ae2d" stroke="#d3ae2d" stroke-width="0.6"/>
<polygon points="582.8,372.8 590.6,376.4 602.3,375.1 594.5,371.7" fill="#cfa235" stroke="#cfa235" stroke-width="0.6"/>
<polygon points="594.5,371.7 602.3,375.1 613.6,373.9 605.9,370.6" fill="#ce983d" stroke="#ce983d" stroke-width="0.6"/>
<polygon points="605.9,370.6 613.6,373.9 624.6,373.3 616.9,370.0" fill="#c88a46" stroke="#c88a46" stroke-width="0.6"/>
<polygon points="616.9,370.0 624.6,373.3 635.3,372.8 627.6,369.7" fill="#c67d50" stroke="#c67d50" stroke-width="0.6"/>
<polygon points="627.6,369.7 635.3,372.8 645.7,372.6 638.0,369.5" fill="#c4705c" stroke="#c4705c" stroke-width="0.6"/>
<polygon points="638.0,369.5 645.7,372.6 655.7,371.7 648.0,368.6" fill="#cc686c" stroke="#cc686c" stroke-width="0.6"/>
<polygon points="648.0,368.6 655.7,371.7 665.4,370.0 657.6,366.8" fill="#da667c" stroke="#da667c" stroke-width="0.6"/>
<polygon points="657.6,366.8 665.4,370.0 674.7,366.4 666.9,363.4" fill="#ef6e8b" stroke="#ef6e8b" stroke-width="0.6"/>
<polygon points="666.9,363.4 674.7,366.4 683.7,362.9 676.0,360.0" fill="#ef7188" stroke="#ef7188" stroke-width="0.6"/>
<polygon points="676.0,360.0 683.7,362.9 692.5,360.1 684.8,357.3" fill="#ef7287" stroke="#ef7287" stroke-width="0.6"/>
<polygon points="684.8,357.3 692.5,360.1 701.1,357.7 693.4,354.9" fill="#ee7088" stroke="#ee7088" stroke-width="0.6"/>
<polygon points="693.4,354.9 701.1,357.7 709.5,355.0 701.8,352.4" fill="#ef6e8a" stroke="#ef6e8a" stroke-width="0.6"/>
<polygon points="701.8,352.4 709.5,355.0 717.7,352.2 710.0,349.7" fill="#ef6d8b" stroke="#ef6d8b" stroke-width="0.6"/>
<polygon points="710.0,349.7 717.7,352.2 725.7,349.6 718.0,347.1" fill="#ef6d8c" stroke="#ef6d8c" stroke-width="0.6"/>
<polygon points="718.0,347.1 725.7,349.6 733.5,347.3 725.8,344.9" fill="#ef6a8e" stroke="#ef6a8e" stroke-width="0.6"/>
<polygon points="725.8,344.9 733.5,347.3 741.1,345.2 733.4,342.9" fill="#ec658f" stroke="#ec658f" stroke-width="0.6"/>
<polygon points="733.4,342.9 741.1,345.2 748.5,343.1 740.8,340.9" fill="#ed6294" stroke="#ed6294" stroke-width="0.6"/>
<polygon points="740.8,340.9 748.5,343.1 755.7,341.0 748.1,338.9" fill="#ed5f98" stroke="#ed5f98" stroke-width="0.6"/>
<polygon points="748.1,338.9 755.7,341.0 762.8,338.7 755.2,336.7" fill="#ef5d9c" stroke="#ef5d9c" stroke-width="0.6"/>
<polygon points="755.2,336.7 762.8,338.7 769.7,336.0 762.1,334.0" fill="#ef5e9b" stroke="#ef5e9b" stroke-width="0.6"/>
<polygon points="762.1,334.0 769.7,336.0 776.4,332.8 768.8,331.0" fill="#ef6297" stroke="#ef6297" stroke-width="0.6"/>
<polygon points="768.8,331.0 776.4,332.8 783.0,329.5 775.5,327.8" fill="#ef6890" stroke="#ef6890" stroke-width="0.6"/>
<polygon points="775.5,327.8 783.0,329.5 789.4,326.4 781.9,324.8" fill="#ef7089" stroke="#ef7089" stroke-width="0.6"/>
<polygon points="781.9,324.8 789.4,326.4 795.8,323.4 788.3,321.9" fill="#ef7782" stroke="#ef7782" stroke-width="0.6"/>
<polygon points="788.3,321.9 795.8,323.4 802.0,320.4 794.5,319.0" fill="#ef7e7b" stroke="#ef7e7b" stroke-width="0.6"/>
<polygon points="794.5,319.0 802.0,320.4 808.0,316.8 800.6,315.5" fill="#ef8771" stroke="#ef8771" stroke-width="0.6"/>
<polygon points="800.6,315.5 808.0,316.8 814.0,313.3 806.5,312.1" fill="#ef9365" stroke="#ef9365" stroke-width="0.6"/>
<polygon points="566.0,379.6 573.9,383.5 586.4,381.8 578.5,378.0" fill="#d2b227" stroke="#d2b227" stroke-width="0.6"/>
<polygon points="578.5,378.0 586.4,381.8 598.5,380.1 590.6,376.4" fill="#d3ab30" stroke="#d3ab30" stroke-width="0.6"/>
<polygon points="590.6,376.4 598.5,380.1 610.2,378.6 602.3,375.1" fill="#d0a038" stroke="#d0a038" stroke-width="0.6"/>
<polygon points="602.3,375.1 610.2,378.6 621.5,377.2 613.6,373.9" fill="#cf9740" stroke="#cf9740" stroke-width="0.6"/>
<polygon points="613.6,373.9 621.5,377.2 632.6,376.5 624.6,373.3" fill="#c88847" stroke="#c88847" stroke-width="0.6"/>
<polygon points="624.6,373.3 632.6,376.5 643.3,376.0 635.3,372.8" fill="#c67c52" stroke="#c67c52" stroke-width="0.6"/>
<polygon points="635.3,372.8 643.3,376.0 653.6,375.7 645.7,372.6" fill="#c46e5d" stroke="#c46e5d" stroke-width="0.6"/>
<polygon points="645.7,372.6 653.6,375.7 663.7,374.8 655.7,371.7" fill="#cb666d" stroke="#cb666d" stroke-width="0.6"/>
<polygon points="655.7,371.7 663.7,374.8 673.3,373.0 665.4,370.0" fill="#da647d" stroke="#da647d" stroke-width="0.6"/>
<polygon points="665.4,370.0 673.3,373.0 682.6,369.4 674.7,366.4" fill="#ef6d8c" stroke="#ef6d8c" stroke-width="0.6"/>
<polygon points="674.7,366.4 682.6,369.4 691.6,365.8 683.7,362.9" fill="#ef7089" stroke="#ef7089" stroke-width="0.6"/>
<polygon points="683.7,362.9 691.6,365.8 700.4,362.9 692.5,360.1" fill="#ef7187" stroke="#ef7187" stroke-width="0.6"/>
<polygon points="692.5,360.1 700.4,362.9 709.0,360.3 701.1,357.7" fill="#ee7088" stroke="#ee7088" stroke-width="0.6"/>
<polygon points="701.1,357.7 709.0,360.3 717.4,357.6 709.5,355.0" fill="#ef6f8a" stroke="#ef6f8a" stroke-width="0.6"/>
<polygon points="709.5,355.0 717.4,357.6 725.6,354.7 717.7,352.2" fill="#ef6e8b" stroke="#ef6e8b" stroke-width="0.6"/>
<polygon points="717.7,352.2 725.6,354.7 733.5,351.9 725.7,349.6" fill="#ef6e8b" stroke="#ef6e8b" stroke-width="0.6"/>
<polygon points="725.7,349.6 733.5,351.9 741.3,349.6 733.5,347.3" fill="#ee6c8c" stroke="#ee6c8c" stroke-width="0.6"/>
<polygon points="733.5,347.3 741.3,349.6 748.9,347.4 741.1,345.2" fill="#eb678d" stroke="#eb678d" stroke-width="0.6"/>
<polygon points="741.1,345.2 748.9,347.4 756.2,345.2 748.5,343.1" fill="#ec6492" stroke="#ec6492" stroke-width="0.6"/>
<polygon points="748.5,343.1 756.2,345.2 763.5,343.0 755.7,341.0" fill="#ec6195" stroke="#ec6195" stroke-width="0.6"/>
<polygon points="755.7,341.0 763.5,343.0 770.5,340.6 762.8,338.7" fill="#ef6099" stroke="#ef6099" stroke-width="0.6"/>
<polygon points="762.8,338.7 770.5,340.6 777.4,337.7 769.7,336.0" fill="#ef6198" stroke="#ef6198" stroke-width="0.6"/>
<polygon points="769.7,336.0 777.4,337.7 784.1,334.4 776.4,332.8" fill="#ef6594" stroke="#ef6594" stroke-width="0.6"/>
<polygon points="776.4,332.8 784.1,334.4 790.7,330.9 783.0,329.5" fill="#ef6c8d" stroke="#ef6c8d" stroke-width="0.6"/>
<polygon points="783.0,329.5 790.7,330.9 797.1,327.7 789.4,326.4" fill="#ef7485" stroke="#ef7485" stroke-width="0.6"/>
<polygon points="789.4,326.4 797.1,327.7 803.4,324.6 795.8,323.4" fill="#ef7b7e" stroke="#ef7b7e" stroke-width="0.6"/>
<polygon points="795.8,323.4 803.4,324.6 809.6,321.6 802.0,320.4" fill="#ef8277" stroke="#ef8277" stroke-width="0.6"/>
<polygon points="802.0,320.4 809.6,321.6 815.6,317.9 808.0,316.8" fill="#ef8b6d" stroke="#ef8b6d" stroke-width="0.6"/>
<polygon points="808.0,316.8 815.6,317.9 821.6,314.3 814.0,313.3" fill="#ef9761" stroke="#ef9761" stroke-width="0.6"/>
<polygon points="573.9,383.5 582.0,387.2 594.5,385.4 586.4,381.8" fill="#d1af2a" stroke="#d1af2a" stroke-width="0.6"/>
<polygon points="586.4,381.8 594.5,385.4 606.6,383.6 598.5,380.1" fill="#d3a833" stroke="#d3a833" stroke-width="0.6"/>
<polygon points="598.5,380.1 606.6,383.6 618.3,381.9 610.2,378.6" fill="#d09e3a" stroke="#d09e3a" stroke-width="0.6"/>
<polygon points="610.2,378.6 618.3,381.9 629.6,380.3 621.5,377.2" fill="#cf9541" stroke="#cf9541" stroke-width="0.6"/>
<polygon points="621.5,377.2 629.6,380.3 640.7,379.5 632.6,376.5" fill="#c78748" stroke="#c78748" stroke-width="0.6"/>
<polygon points="632.6,376.5 640.7,379.5 651.4,379.0 643.3,376.0" fill="#c57a52" stroke="#c57a52" stroke-width="0.6"/>
<polygon points="643.3,376.0 651.4,379.0 661.7,378.7 653.6,375.7" fill="#c36d5d" stroke="#c36d5d" stroke-width="0.6"/>
<polygon points="653.6,375.7 661.7,378.7 671.8,377.8 663.7,374.8" fill="#c9646c" stroke="#c9646c" stroke-width="0.6"/>
<polygon points="663.7,374.8 671.8,377.8 681.4,375.9 673.3,373.0" fill="#d8637d" stroke="#d8637d" stroke-width="0.6"/>
<polygon points="673.3,373.0 681.4,375.9 690.7,372.2 682.6,369.4" fill="#ef6c8c" stroke="#ef6c8c" stroke-width="0.6"/>
<polygon points="682.6,369.4 690.7,372.2 699.7,368.5 691.6,365.8" fill="#ef7089" stroke="#ef7089" stroke-width="0.6"/>
<polygon points="691.6,365.8 699.7,368.5 708.5,365.4 700.4,362.9" fill="#ef7287" stroke="#ef7287" stroke-width="0.6"/>
<polygon points="700.4,362.9 708.5,365.4 717.1,362.8 709.0,360.3" fill="#ee7087" stroke="#ee7087" stroke-width="0.6"/>
<polygon points="709.0,360.3 717.1,362.8 725.4,360.0 717.4,357.6" fill="#ef7089" stroke="#ef7089" stroke-width="0.6"/>
<polygon points="717.4,357.6 725.4,360.0 733.6,357.0 725.6,354.7" fill="#ef7089" stroke="#ef7089" stroke-width="0.6"/>
<polygon points="725.6,354.7 733.6,357.0 741.5,354.1 733.5,351.9" fill="#ef7089" stroke="#ef7089" stroke-width="0.6"/>
<polygon points="733.5,351.9 741.5,354.1 749.3,351.7 741.3,349.6" fill="#ed6e89" stroke="#ed6e89" stroke-width="0.6"/>
<polygon points="741.3,349.6 749.3,351.7 756.8,349.4 748.9,347.4" fill="#ea698a" stroke="#ea698a" stroke-width="0.6"/>
<polygon points="748.9,347.4 756.8,349.4 764.2,347.1 756.2,345.2" fill="#ec678e" stroke="#ec678e" stroke-width="0.6"/>
<polygon points="756.2,345.2 764.2,347.1 771.4,344.8 763.5,343.0" fill="#ec6491" stroke="#ec6491" stroke-width="0.6"/>
<polygon points="763.5,343.0 771.4,344.8 778.4,342.4 770.5,340.6" fill="#ef6495" stroke="#ef6495" stroke-width="0.6"/>
<polygon points="770.5,340.6 778.4,342.4 785.2,339.4 777.4,337.7" fill="#ef6594" stroke="#ef6594" stroke-width="0.6"/>
<polygon points="777.4,337.7 785.2,339.4 791.9,335.9 784.1,334.4" fill="#ef6a8f" stroke="#ef6a8f" stroke-width="0.6"/>
<polygon points="784.1,334.4 791.9,335.9 798.5,332.3 790.7,330.9" fill="#ef7188" stroke="#ef7188" stroke-width="0.6"/>
<polygon points="790.7,330.9 798.5,332.3 804.9,329.0 797.1,327.7" fill="#ef7980" stroke="#ef7980" stroke-width="0.6"/>
<polygon points="797.1,327.7 804.9,329.0 811.2,325.8 803.4,324.6" fill="#ef8079" stroke="#ef8079" stroke-width="0.6"/>
<polygon points="803.4,324.6 811.2,325.8 817.3,322.7 809.6,321.6" fill="#ef8772" stroke="#ef8772" stroke-width="0.6"/>
<polygon points="809.6,321.6 817.3,322.7 823.4,318.9 815.6,317.9" fill="#ee9068" stroke="#ee9068" stroke-width="0.6"/>
<polygon points="815.6,317.9 823.4,318.9 829.3,315.2 821.6,314.3" fill="#ee9b5b" stroke="#ee9b5b" stroke-width="0.6"/>
<polygon points="582.0,387.2 590.3,391.0 602.8,389.1 594.5,385.4" fill="#d2ad2d" stroke="#d2ad2d" stroke-width="0.6"/>
<polygon points="594.5,385.4 602.8,389.1 614.9,387.1 606.6,383.6" fill="#d4a735" stroke="#d4a735" stroke-width="0.6"/>
<polygon points="606.6,383.6 614.9,387.1 626.6,385.3 618.3,381.9" fill="#d19e3c" stroke="#d19e3c" stroke-width="0.6"/>
<polygon points="618.3,381.9 626.6,385.3 637.9,383.5 629.6,380.3" fill="#d09543" stroke="#d09543" stroke-width="0.6"/>
<polygon points="629.6,380.3 637.9,383.5 649.0,382.6 640.7,379.5" fill="#c78648" stroke="#c78648" stroke-width="0.6"/>
<polygon points="640.7,379.5 649.0,382.6 659.7,382.0 651.4,379.0" fill="#c57a52" stroke="#c57a52" stroke-width="0.6"/>
<polygon points="651.4,379.0 659.7,382.0 670.0,381.7 661.7,378.7" fill="#c36d5d" stroke="#c36d5d" stroke-width="0.6"/>
<polygon points="661.7,378.7 670.0,381.7 680.0,380.8 671.8,377.8" fill="#c8646c" stroke="#c8646c" stroke-width="0.6"/>
<polygon points="671.8,377.8 680.0,380.8 689.7,378.8 681.4,375.9" fill="#d8637d" stroke="#d8637d" stroke-width="0.6"/>
<polygon points="681.4,375.9 689.7,378.8 698.9,375.0 690.7,372.2" fill="#ef6d8c" stroke="#ef6d8c" stroke-width="0.6"/>
<polygon points="690.7,372.2 698.9,375.0 707.9,371.2 699.7,368.5" fill="#ef7188" stroke="#ef7188" stroke-width="0.6"/>
<polygon points="699.7,368.5 707.9,371.2 716.7,368.1 708.5,365.4" fill="#ef7386" stroke="#ef7386" stroke-width="0.6"/>
<polygon points="708.5,365.4 716.7,368.1 725.3,365.3 717.1,362.8" fill="#ee7285" stroke="#ee7285" stroke-width="0.6"/>
<polygon points="717.1,362.8 725.3,365.3 733.6,362.4 725.4,360.0" fill="#ef7287" stroke="#ef7287" stroke-width="0.6"/>
<polygon points="725.4,360.0 733.6,362.4 741.8,359.3 733.6,357.0" fill="#ef7287" stroke="#ef7287" stroke-width="0.6"/>
<polygon points="733.6,357.0 741.8,359.3 749.7,356.3 741.5,354.1" fill="#ef7386" stroke="#ef7386" stroke-width="0.6"/>
<polygon points="741.5,354.1 749.7,356.3 757.4,353.8 749.3,351.7" fill="#ed7185" stroke="#ed7185" stroke-width="0.6"/>
<polygon points="749.3,351.7 757.4,353.8 764.9,351.5 756.8,349.4" fill="#eb6d87" stroke="#eb6d87" stroke-width="0.6"/>
<polygon points="756.8,349.4 764.9,351.5 772.3,349.1 764.2,347.1" fill="#ed6b8b" stroke="#ed6b8b" stroke-width="0.6"/>
<polygon points="764.2,347.1 772.3,349.1 779.4,346.7 771.4,344.8" fill="#ec698d" stroke="#ec698d" stroke-width="0.6"/>
<polygon points="771.4,344.8 779.4,346.7 786.4,344.2 778.4,342.4" fill="#ef6890" stroke="#ef6890" stroke-width="0.6"/>
<polygon points="778.4,342.4 786.4,344.2 793.3,341.1 785.2,339.4" fill="#ef698f" stroke="#ef698f" stroke-width="0.6"/>
<polygon points="785.2,339.4 793.3,341.1 799.9,337.5 791.9,335.9" fill="#ef6f8a" stroke="#ef6f8a" stroke-width="0.6"/>
<polygon points="791.9,335.9 799.9,337.5 806.5,333.7 798.5,332.3" fill="#ef7682" stroke="#ef7682" stroke-width="0.6"/>
<polygon points="798.5,332.3 806.5,333.7 812.9,330.3 804.9,329.0" fill="#ef7e7b" stroke="#ef7e7b" stroke-width="0.6"/>
<polygon points="804.9,329.0 812.9,330.3 819.1,327.0 811.2,325.8" fill="#ef8573" stroke="#ef8573" stroke-width="0.6"/>
<polygon points="811.2,325.8 819.1,327.0 825.3,323.8 817.3,322.7" fill="#ef8c6c" stroke="#ef8c6c" stroke-width="0.6"/>
<polygon points="817.3,322.7 825.3,323.8 831.3,319.9 823.4,318.9" fill="#ee9562" stroke="#ee9562" stroke-width="0.6"/>
<polygon points="823.4,318.9 831.3,319.9 837.2,316.1 829.3,315.2" fill="#eda156" stroke="#eda156" stroke-width="0.6"/>
<polygon points="590.3,391.0 598.7,395.0 611.3,392.9 602.8,389.1" fill="#d2ab2f" stroke="#d2ab2f" stroke-width="0.6"/>
<polygon points="602.8,389.1 611.3,392.9 623.4,390.8 614.9,387.1" fill="#d4a637" stroke="#d4a637" stroke-width="0.6"/>
<polygon points="614.9,387.1 623.4,390.8 635.1,388.7 626.6,385.3" fill="#d39d3e" stroke="#d39d3e" stroke-width="0.6"/>
<polygon points="626.6,385.3 635.1,388.7 646.4,386.8 637.9,383.5" fill="#d29644" stroke="#d29644" stroke-width="0.6"/>
<polygon points="637.9,383.5 646.4,386.8 657.5,385.9 649.0,382.6" fill="#c78649" stroke="#c78649" stroke-width="0.6"/>
<polygon points="649.0,382.6 657.5,385.9 668.2,385.2 659.7,382.0" fill="#c57a52" stroke="#c57a52" stroke-width="0.6"/>
<polygon points="659.7,382.0 668.2,385.2 678.5,384.7 670.0,381.7" fill="#c36d5d" stroke="#c36d5d" stroke-width="0.6"/>
<polygon points="670.0,381.7 678.5,384.7 688.5,383.9 680.0,380.8" fill="#c7646b" stroke="#c7646b" stroke-width="0.6"/>
<polygon points="680.0,380.8 688.5,383.9 698.1,381.8 689.7,378.8" fill="#d9647d" stroke="#d9647d" stroke-width="0.6"/>
<polygon points="689.7,378.8 698.1,381.8 707.4,377.9 698.9,375.0" fill="#ef6d8c" stroke="#ef6d8c" stroke-width="0.6"/>
<polygon points="698.9,375.0 707.4,377.9 716.4,374.0 707.9,371.2" fill="#ef7187" stroke="#ef7187" stroke-width="0.6"/>
<polygon points="707.9,371.2 716.4,374.0 725.2,370.7 716.7,368.1" fill="#ef7485" stroke="#ef7485" stroke-width="0.6"/>
<polygon points="716.7,368.1 725.2,370.7 733.7,367.9 725.3,365.3" fill="#ef7484" stroke="#ef7484" stroke-width="0.6"/>
<polygon points="725.3,365.3 733.7,367.9 742.0,364.8 733.6,362.4" fill="#ef7485" stroke="#ef7485" stroke-width="0.6"/>
<polygon points="733.6,362.4 742.0,364.8 750.1,361.7 741.8,359.3" fill="#ef7484" stroke="#ef7484" stroke-width="0.6"/>
<polygon points="741.8,359.3 750.1,361.7 758.0,358.6 749.7,356.3" fill="#ef7583" stroke="#ef7583" stroke-width="0.6"/>
<polygon points="749.7,356.3 758.0,358.6 765.7,356.1 757.4,353.8" fill="#ee7483" stroke="#ee7483" stroke-width="0.6"/>
<polygon points="757.4,353.8 765.7,356.1 773.2,353.6 764.9,351.5" fill="#ec7184" stroke="#ec7184" stroke-width="0.6"/>
<polygon points="764.9,351.5 773.2,353.6 780.6,351.1 772.3,349.1" fill="#ee6f88" stroke="#ee6f88" stroke-width="0.6"/>
<polygon points="772.3,349.1 780.6,351.1 787.7,348.7 779.4,346.7" fill="#ee6d8a" stroke="#ee6d8a" stroke-width="0.6"/>
<polygon points="779.4,346.7 787.7,348.7 794.7,346.1 786.4,344.2" fill="#ef6c8c" stroke="#ef6c8c" stroke-width="0.6"/>
<polygon points="786.4,344.2 794.7,346.1 801.5,342.9 793.3,341.1" fill="#ef6e8b" stroke="#ef6e8b" stroke-width="0.6"/>
<polygon points="793.3,341.1 801.5,342.9 808.1,339.1 799.9,337.5" fill="#ef7386" stroke="#ef7386" stroke-width="0.6"/>
<polygon points="799.9,337.5 808.1,339.1 814.6,335.3 806.5,333.7" fill="#ef7b7e" stroke="#ef7b7e" stroke-width="0.6"/>
<polygon points="806.5,333.7 814.6,335.3 821.0,331.8 812.9,330.3" fill="#ef8376" stroke="#ef8376" stroke-width="0.6"/>
<polygon points="812.9,330.3 821.0,331.8 827.2,328.4 819.1,327.0" fill="#ef8a6f" stroke="#ef8a6f" stroke-width="0.6"/>
<polygon points="819.1,327.0 827.2,328.4 833.3,325.1 825.3,323.8" fill="#ef9167" stroke="#ef9167" stroke-width="0.6"/>
<polygon points="825.3,323.8 833.3,325.1 839.3,321.1 831.3,319.9" fill="#ef9b5e" stroke="#ef9b5e" stroke-width="0.6"/>
<polygon points="831.3,319.9 839.3,321.1 845.2,317.3 837.2,316.1" fill="#efa751" stroke="#efa751" stroke-width="0.6"/>
<polygon points="598.7,395.0 607.5,399.4 620.1,397.2 611.3,392.9" fill="#d4aa32" stroke="#d4aa32" stroke-width="0.6"/>
<polygon points="611.3,392.9 620.1,397.2 632.2,394.9 623.4,390.8" fill="#d7a43a" stroke="#d7a43a" stroke-width="0.6"/>
<polygon points="623.4,390.8 632.2,394.9 643.9,392.7 635.1,388.7" fill="#d69d41" stroke="#d69d41" stroke-width="0.6"/>
<polygon points="635.1,388.7 643.9,392.7 655.2,390.7 646.4,386.8" fill="#d59647" stroke="#d59647" stroke-width="0.6"/>
<polygon points="646.4,386.8 655.2,390.7 666.2,389.6 657.5,385.9" fill="#c9864b" stroke="#c9864b" stroke-width="0.6"/>
<polygon points="657.5,385.9 666.2,389.6 676.9,388.9 668.2,385.2" fill="#c77a55" stroke="#c77a55" stroke-width="0.6"/>
<polygon points="668.2,385.2 676.9,388.9 687.2,388.4 678.5,384.7" fill="#c56d5f" stroke="#c56d5f" stroke-width="0.6"/>
<polygon points="678.5,384.7 687.2,388.4 697.2,387.6 688.5,383.9" fill="#c9636d" stroke="#c9636d" stroke-width="0.6"/>
<polygon points="688.5,383.9 697.2,387.6 706.8,385.4 698.1,381.8" fill="#db6480" stroke="#db6480" stroke-width="0.6"/>
<polygon points="698.1,381.8 706.8,385.4 716.1,381.4 707.4,377.9" fill="#ef6c8d" stroke="#ef6c8d" stroke-width="0.6"/>
<polygon points="707.4,377.9 716.1,381.4 725.0,377.4 716.4,374.0" fill="#ef7088" stroke="#ef7088" stroke-width="0.6"/>
<polygon points="716.4,374.0 725.0,377.4 733.8,374.1 725.2,370.7" fill="#ef7385" stroke="#ef7385" stroke-width="0.6"/>
<polygon points="725.2,370.7 733.8,374.1 742.3,371.1 733.7,367.9" fill="#ef7485" stroke="#ef7485" stroke-width="0.6"/>
<polygon points="733.7,367.9 742.3,371.1 750.6,368.0 742.0,364.8" fill="#ef7485" stroke="#ef7485" stroke-width="0.6"/>
<polygon points="742.0,364.8 750.6,368.0 758.7,364.8 750.1,361.7" fill="#ef7584" stroke="#ef7584" stroke-width="0.6"/>
<polygon points="750.1,361.7 758.7,364.8 766.6,361.7 758.0,358.6" fill="#ef7683" stroke="#ef7683" stroke-width="0.6"/>
<polygon points="758.0,358.6 766.6,361.7 774.2,359.1 765.7,356.1" fill="#ef7584" stroke="#ef7584" stroke-width="0.6"/>
<polygon points="765.7,356.1 774.2,359.1 781.7,356.6 773.2,353.6" fill="#ef7386" stroke="#ef7386" stroke-width="0.6"/>
<polygon points="773.2,353.6 781.7,356.6 789.0,354.0 780.6,351.1" fill="#ef7188" stroke="#ef7188" stroke-width="0.6"/>
<polygon points="780.6,351.1 789.0,354.0 796.1,351.4 787.7,348.7" fill="#ef6f8a" stroke="#ef6f8a" stroke-width="0.6"/>
<polygon points="787.7,348.7 796.1,351.4 803.0,348.8 794.7,346.1" fill="#ef6d8b" stroke="#ef6d8b" stroke-width="0.6"/>
<polygon points="794.7,346.1 803.0,348.8 809.8,345.5 801.5,342.9" fill="#ef6f8a" stroke="#ef6f8a" stroke-width="0.6"/>
<polygon points="801.5,342.9 809.8,345.5 816.4,341.7 808.1,339.1" fill="#ef7485" stroke="#ef7485" stroke-width="0.6"/>
<polygon points="808.1,339.1 816.4,341.7 822.9,337.8 814.6,335.3" fill="#ef7c7d" stroke="#ef7c7d" stroke-width="0.6"/>
<polygon points="814.6,335.3 822.9,337.8 829.3,334.2 821.0,331.8" fill="#ef8475" stroke="#ef8475" stroke-width="0.6"/>
<polygon points="821.0,331.8 829.3,334.2 835.5,330.7 827.2,328.4" fill="#ef8b6d" stroke="#ef8b6d" stroke-width="0.6"/>
<polygon points="827.2,328.4 835.5,330.7 841.5,327.3 833.3,325.1" fill="#ef9266" stroke="#ef9266" stroke-width="0.6"/>
<polygon points="833.3,325.1 841.5,327.3 847.5,323.3 839.3,321.1" fill="#ef9c5d" stroke="#ef9c5d" stroke-width="0.6"/>
<polygon points="839.3,321.1 847.5,323.3 853.3,319.4 845.2,317.3" fill="#efa851" stroke="#efa851" stroke-width="0.6"/>
<polygon points="607.5,399.4 616.5,404.2 629.1,401.9 620.1,397.2" fill="#d5a736" stroke="#d5a736" stroke-width="0.6"/>
<polygon points="620.1,397.2 629.1,401.9 641.2,399.5 632.2,394.9" fill="#d8a13f" stroke="#d8a13f" stroke-width="0.6"/>
<polygon points="632.2,394.9 641.2,399.5 652.9,397.1 643.9,392.7" fill="#d89b45" stroke="#d89b45" stroke-width="0.6"/>
<polygon points="643.9,392.7 652.9,397.1 664.2,394.8 655.2,390.7" fill="#d7944b" stroke="#d7944b" stroke-width="0.6"/>
<polygon points="655.2,390.7 664.2,394.8 675.2,393.7 666.2,389.6" fill="#ca844e" stroke="#ca844e" stroke-width="0.6"/>
<polygon points="666.2,389.6 675.2,393.7 685.9,392.9 676.9,388.9" fill="#c87858" stroke="#c87858" stroke-width="0.6"/>
<polygon points="676.9,388.9 685.9,392.9 696.2,392.3 687.2,388.4" fill="#c56b62" stroke="#c56b62" stroke-width="0.6"/>
<polygon points="687.2,388.4 696.2,392.3 706.1,391.5 697.2,387.6" fill="#c96170" stroke="#c96170" stroke-width="0.6"/>
<polygon points="697.2,387.6 706.1,391.5 715.7,389.2 706.8,385.4" fill="#dc6184" stroke="#dc6184" stroke-width="0.6"/>
<polygon points="706.8,385.4 715.7,389.2 724.9,385.1 716.1,381.4" fill="#ef6990" stroke="#ef6990" stroke-width="0.6"/>
<polygon points="716.1,381.4 724.9,385.1 733.9,381.1 725.0,377.4" fill="#ef6d8b" stroke="#ef6d8b" stroke-width="0.6"/>
<polygon points="725.0,377.4 733.9,381.1 742.6,377.6 733.8,374.1" fill="#ef7088" stroke="#ef7088" stroke-width="0.6"/>
<polygon points="733.8,374.1 742.6,377.6 751.1,374.5 742.3,371.1" fill="#ef7188" stroke="#ef7188" stroke-width="0.6"/>
<polygon points="742.3,371.1 751.1,374.5 759.4,371.3 750.6,368.0" fill="#ef7188" stroke="#ef7188" stroke-width="0.6"/>
<polygon points="750.6,368.0 759.4,371.3 767.5,368.0 758.7,364.8" fill="#ef7286" stroke="#ef7286" stroke-width="0.6"/>
<polygon points="758.7,364.8 767.5,368.0 775.3,364.8 766.6,361.7" fill="#ef7485" stroke="#ef7485" stroke-width="0.6"/>
<polygon points="766.6,361.7 775.3,364.8 782.9,362.1 774.2,359.1" fill="#ef7386" stroke="#ef7386" stroke-width="0.6"/>
<polygon points="774.2,359.1 782.9,362.1 790.4,359.6 781.7,356.6" fill="#ef7188" stroke="#ef7188" stroke-width="0.6"/>
<polygon points="781.7,356.6 790.4,359.6 797.6,356.9 789.0,354.0" fill="#ef6f8a" stroke="#ef6f8a" stroke-width="0.6"/>
<polygon points="789.0,354.0 797.6,356.9 804.7,354.3 796.1,351.4" fill="#ef6d8c" stroke="#ef6d8c" stroke-width="0.6"/>
<polygon points="796.1,351.4 804.7,354.3 811.6,351.6 803.0,348.8" fill="#ef6b8d" stroke="#ef6b8d" stroke-width="0.6"/>
<polygon points="803.0,348.8 811.6,351.6 818.3,348.2 809.8,345.5" fill="#ef6d8c" stroke="#ef6d8c" stroke-width="0.6"/>
<polygon points="809.8,345.5 818.3,348.2 824.9,344.3 816.4,341.7" fill="#ef7287" stroke="#ef7287" stroke-width="0.6"/>
<polygon points="816.4,341.7 824.9,344.3 831.4,340.3 822.9,337.8" fill="#ef7a7f" stroke="#ef7a7f" stroke-width="0.6"/>
<polygon points="822.9,337.8 831.4,340.3 837.7,336.6 829.3,334.2" fill="#ef8277" stroke="#ef8277" stroke-width="0.6"/>
<polygon points="829.3,334.2 837.7,336.6 843.9,333.1 835.5,330.7" fill="#ef8970" stroke="#ef8970" stroke-width="0.6"/>
<polygon points="835.5,330.7 843.9,333.1 849.9,329.7 841.5,327.3" fill="#ef9069" stroke="#ef9069" stroke-width="0.6"/>
<polygon points="841.5,327.3 849.9,329.7 855.8,325.6 847.5,323.3" fill="#ef995f" stroke="#ef995f" stroke-width="0.6"/>
<polygon points="847.5,323.3 855.8,325.6 861.6,321.6 853.3,319.4" fill="#efa553" stroke="#efa553" stroke-width="0.6"/>
<polygon points="616.5,404.2 625.8,409.2 638.4,406.7 629.1,401.9" fill="#d5a23b" stroke="#d5a23b" stroke-width="0.6"/>
<polygon points="629.1,401.9 638.4,406.7 650.5,404.2 641.2,399.5" fill="#d89d44" stroke="#d89d44" stroke-width="0.6"/>
<polygon points="641.2,399.5 650.5,404.2 662.2,401.5 652.9,397.1" fill="#d9984a" stroke="#d9984a" stroke-width="0.6"/>
<polygon points="652.9,397.1 662.2,401.5 673.5,399.0 664.2,394.8" fill="#d8924f" stroke="#d8924f" stroke-width="0.6"/>
<polygon points="664.2,394.8 673.5,399.0 684.4,397.8 675.2,393.7" fill="#ca8151" stroke="#ca8151" stroke-width="0.6"/>
<polygon points="675.2,393.7 684.4,397.8 695.1,396.9 685.9,392.9" fill="#c8755b" stroke="#c8755b" stroke-width="0.6"/>
<polygon points="685.9,392.9 695.1,396.9 705.3,396.3 696.2,392.3" fill="#c56865" stroke="#c56865" stroke-width="0.6"/>
<polygon points="696.2,392.3 705.3,396.3 715.3,395.4 706.1,391.5" fill="#c85d72" stroke="#c85d72" stroke-width="0.6"/>
<polygon points="706.1,391.5 715.3,395.4 724.8,393.0 715.7,389.2" fill="#dc5e87" stroke="#dc5e87" stroke-width="0.6"/>
<polygon points="715.7,389.2 724.8,393.0 734.0,388.7 724.9,385.1" fill="#ef6693" stroke="#ef6693" stroke-width="0.6"/>
<polygon points="724.9,385.1 734.0,388.7 743.0,384.6 733.9,381.1" fill="#ef6a8e" stroke="#ef6a8e" stroke-width="0.6"/>
<polygon points="733.9,381.1 743.0,384.6 751.7,381.0 742.6,377.6" fill="#ef6d8b" stroke="#ef6d8b" stroke-width="0.6"/>
<polygon points="742.6,377.6 751.7,381.0 760.1,377.8 751.1,374.5" fill="#ef6e8a" stroke="#ef6e8a" stroke-width="0.6"/>
<polygon points="751.1,374.5 760.1,377.8 768.4,374.5 759.4,371.3" fill="#ef6f8a" stroke="#ef6f8a" stroke-width="0.6"/>
<polygon points="759.4,371.3 768.4,374.5 776.4,371.1 767.5,368.0" fill="#ef7089" stroke="#ef7089" stroke-width="0.6"/>
<polygon points="767.5,368.0 776.4,371.1 784.2,367.8 775.3,364.8" fill="#ef7287" stroke="#ef7287" stroke-width="0.6"/>
<polygon points="775.3,364.8 784.2,367.8 791.8,365.1 782.9,362.1" fill="#ef7188" stroke="#ef7188" stroke-width="0.6"/>
<polygon points="782.9,362.1 791.8,365.1 799.2,362.4 790.4,359.6" fill="#ef6f8a" stroke="#ef6f8a" stroke-width="0.6"/>
<polygon points="790.4,359.6 799.2,362.4 806.4,359.7 797.6,356.9" fill="#ef6d8c" stroke="#ef6d8c" stroke-width="0.6"/>
<polygon points="797.6,356.9 806.4,359.7 813.5,357.0 804.7,354.3" fill="#ef6b8e" stroke="#ef6b8e" stroke-width="0.6"/>
<polygon points="804.7,354.3 813.5,357.0 820.3,354.2 811.6,351.6" fill="#ef6a8f" stroke="#ef6a8f" stroke-width="0.6"/>
<polygon points="811.6,351.6 820.3,354.2 827.0,350.7 818.3,348.2" fill="#ef6b8e" stroke="#ef6b8e" stroke-width="0.6"/>
<polygon points="818.3,348.2 827.0,350.7 833.6,346.7 824.9,344.3" fill="#ef7088" stroke="#ef7088" stroke-width="0.6"/>
<polygon points="824.9,344.3 833.6,346.7 840.0,342.6 831.4,340.3" fill="#ef7880" stroke="#ef7880" stroke-width="0.6"/>
<polygon points="831.4,340.3 840.0,342.6 846.3,338.9 837.7,336.6" fill="#ef8078" stroke="#ef8078" stroke-width="0.6"/>
<polygon points="837.7,336.6 846.3,338.9 852.4,335.4 843.9,333.1" fill="#ef8772" stroke="#ef8772" stroke-width="0.6"/>
<polygon points="843.9,333.1 852.4,335.4 858.4,331.8 849.9,329.7" fill="#ef8e6b" stroke="#ef8e6b" stroke-width="0.6"/>
<polygon points="849.9,329.7 858.4,331.8 864.3,327.7 855.8,325.6" fill="#ef9761" stroke="#ef9761" stroke-width="0.6"/>
<polygon points="855.8,325.6 864.3,327.7 870.1,323.7 861.6,321.6" fill="#efa356" stroke="#efa356" stroke-width="0.6"/>
<polygon points="625.8,409.2 635.4,414.5 647.9,411.9 638.4,406.7" fill="#d69e41" stroke="#d69e41" stroke-width="0.6"/>
<polygon points="638.4,406.7 647.9,411.9 660.0,409.1 650.5,404.2" fill="#d99949" stroke="#d99949" stroke-width="0.6"/>
<polygon points="650.5,404.2 660.0,409.1 671.7,406.2 662.2,401.5" fill="#dc954f" stroke="#dc954f" stroke-width="0.6"/>
<polygon points="662.2,401.5 671.7,406.2 682.9,403.5 673.5,399.0" fill="#da8f54" stroke="#da8f54" stroke-width="0.6"/>
<polygon points="673.5,399.0 682.9,403.5 693.9,402.2 684.4,397.8" fill="#cb7e55" stroke="#cb7e55" stroke-width="0.6"/>
<polygon points="684.4,397.8 693.9,402.2 704.5,401.1 695.1,396.9" fill="#c8725e" stroke="#c8725e" stroke-width="0.6"/>
<polygon points="695.1,396.9 704.5,401.1 714.7,400.4 705.3,396.3" fill="#c66568" stroke="#c66568" stroke-width="0.6"/>
<polygon points="705.3,396.3 714.7,400.4 724.6,399.4 715.3,395.4" fill="#c85a75" stroke="#c85a75" stroke-width="0.6"/>
<polygon points="715.3,395.4 724.6,399.4 734.1,396.8 724.8,393.0" fill="#de5b8b" stroke="#de5b8b" stroke-width="0.6"/>
<polygon points="724.8,393.0 734.1,396.8 743.3,392.4 734.0,388.7" fill="#ef6396" stroke="#ef6396" stroke-width="0.6"/>
<polygon points="734.0,388.7 743.3,392.4 752.2,388.1 743.0,384.6" fill="#ef6891" stroke="#ef6891" stroke-width="0.6"/>
<polygon points="743.0,384.6 752.2,388.1 760.9,384.4 751.7,381.0" fill="#ef6b8e" stroke="#ef6b8e" stroke-width="0.6"/>
<polygon points="751.7,381.0 760.9,384.4 769.4,381.1 760.1,377.8" fill="#ef6c8d" stroke="#ef6c8d" stroke-width="0.6"/>
<polygon points="760.1,377.8 769.4,381.1 777.6,377.7 768.4,374.5" fill="#ef6d8c" stroke="#ef6d8c" stroke-width="0.6"/>
<polygon points="768.4,374.5 777.6,377.7 785.5,374.1 776.4,371.1" fill="#ef6e8a" stroke="#ef6e8a" stroke-width="0.6"/>
<polygon points="776.4,371.1 785.5,374.1 793.3,370.7 784.2,367.8" fill="#ef7089" stroke="#ef7089" stroke-width="0.6"/>
<polygon points="784.2,367.8 793.3,370.7 800.9,367.9 791.8,365.1" fill="#ef7089" stroke="#ef7089" stroke-width="0.6"/>
<polygon points="791.8,365.1 800.9,367.9 808.2,365.2 799.2,362.4" fill="#ef6d8b" stroke="#ef6d8b" stroke-width="0.6"/>
<polygon points="799.2,362.4 808.2,365.2 815.4,362.3 806.4,359.7" fill="#ef6b8d" stroke="#ef6b8d" stroke-width="0.6"/>
<polygon points="806.4,359.7 815.4,362.3 822.4,359.5 813.5,357.0" fill="#ef6a8f" stroke="#ef6a8f" stroke-width="0.6"/>
<polygon points="813.5,357.0 822.4,359.5 829.2,356.7 820.3,354.2" fill="#ef6890" stroke="#ef6890" stroke-width="0.6"/>
<polygon points="820.3,354.2 829.2,356.7 835.9,353.2 827.0,350.7" fill="#ef6a8f" stroke="#ef6a8f" stroke-width="0.6"/>
<polygon points="827.0,350.7 835.9,353.2 842.4,349.1 833.6,346.7" fill="#ef6f89" stroke="#ef6f89" stroke-width="0.6"/>
<polygon points="833.6,346.7 842.4,349.1 848.8,344.9 840.0,342.6" fill="#ef7781" stroke="#ef7781" stroke-width="0.6"/>
<polygon points="840.0,342.6 848.8,344.9 855.0,341.1 846.3,338.9" fill="#ef7f7a" stroke="#ef7f7a" stroke-width="0.6"/>
<polygon points="846.3,338.9 855.0,341.1 861.1,337.5 852.4,335.4" fill="#ef8673" stroke="#ef8673" stroke-width="0.6"/>
<polygon points="852.4,335.4 861.1,337.5 867.1,333.9 858.4,331.8" fill="#ef8d6c" stroke="#ef8d6c" stroke-width="0.6"/>
<polygon points="858.4,331.8 867.1,333.9 873.0,329.7 864.3,327.7" fill="#ef9663" stroke="#ef9663" stroke-width="0.6"/>
<polygon points="864.3,327.7 873.0,329.7 878.7,325.6 870.1,323.7" fill="#efa257" stroke="#efa257" stroke-width="0.6"/>
<polygon points="635.4,414.5 645.2,420.4 657.8,417.6 647.9,411.9" fill="#d79848" stroke="#d79848" stroke-width="0.6"/>
<polygon points="647.9,411.9 657.8,417.6 669.8,414.6 660.0,409.1" fill="#db9350" stroke="#db9350" stroke-width="0.6"/>
<polygon points="660.0,409.1 669.8,414.6 681.5,411.4 671.7,406.2" fill="#de9056" stroke="#de9056" stroke-width="0.6"/>
<polygon points="671.7,406.2 681.5,411.4 692.7,408.5 682.9,403.5" fill="#dd8b5a" stroke="#dd8b5a" stroke-width="0.6"/>
<polygon points="682.9,403.5 692.7,408.5 703.6,406.9 693.9,402.2" fill="#cc7a5a" stroke="#cc7a5a" stroke-width="0.6"/>
<polygon points="693.9,402.2 703.6,406.9 714.2,405.7 704.5,401.1" fill="#ca6f63" stroke="#ca6f63" stroke-width="0.6"/>
<polygon points="704.5,401.1 714.2,405.7 724.4,404.8 714.7,400.4" fill="#c7626d" stroke="#c7626d" stroke-width="0.6"/>
<polygon points="714.7,400.4 724.4,404.8 734.2,403.8 724.6,399.4" fill="#c9577a" stroke="#c9577a" stroke-width="0.6"/>
<polygon points="724.6,399.4 734.2,403.8 743.7,401.0 734.1,396.8" fill="#e05890" stroke="#e05890" stroke-width="0.6"/>
<polygon points="734.1,396.8 743.7,401.0 752.8,396.3 743.3,392.4" fill="#ef5f9a" stroke="#ef5f9a" stroke-width="0.6"/>
<polygon points="743.3,392.4 752.8,396.3 761.7,391.9 752.2,388.1" fill="#ef6495" stroke="#ef6495" stroke-width="0.6"/>
<polygon points="752.2,388.1 761.7,391.9 770.4,388.1 760.9,384.4" fill="#ef6891" stroke="#ef6891" stroke-width="0.6"/>
<polygon points="760.9,384.4 770.4,388.1 778.8,384.6 769.4,381.1" fill="#ef6990" stroke="#ef6990" stroke-width="0.6"/>
<polygon points="769.4,381.1 778.8,384.6 786.9,381.0 777.6,377.7" fill="#ef6a8e" stroke="#ef6a8e" stroke-width="0.6"/>
<polygon points="777.6,377.7 786.9,381.0 794.9,377.3 785.5,374.1" fill="#ef6c8c" stroke="#ef6c8c" stroke-width="0.6"/>
<polygon points="785.5,374.1 794.9,377.3 802.6,373.8 793.3,370.7" fill="#ef6e8b" stroke="#ef6e8b" stroke-width="0.6"/>
<polygon points="793.3,370.7 802.6,373.8 810.1,370.9 800.9,367.9" fill="#ef6e8b" stroke="#ef6e8b" stroke-width="0.6"/>
<polygon points="800.9,367.9 810.1,370.9 817.5,368.1 808.2,365.2" fill="#ef6c8d" stroke="#ef6c8d" stroke-width="0.6"/>
<polygon points="808.2,365.2 817.5,368.1 824.6,365.1 815.4,362.3" fill="#ef6a8f" stroke="#ef6a8f" stroke-width="0.6"/>
<polygon points="815.4,362.3 824.6,365.1 831.5,362.2 822.4,359.5" fill="#ef6990" stroke="#ef6990" stroke-width="0.6"/>
<polygon points="822.4,359.5 831.5,362.2 838.3,359.2 829.2,356.7" fill="#ef6791" stroke="#ef6791" stroke-width="0.6"/>
<polygon points="829.2,356.7 838.3,359.2 844.9,355.6 835.9,353.2" fill="#ef6990" stroke="#ef6990" stroke-width="0.6"/>
<polygon points="835.9,353.2 844.9,355.6 851.4,351.5 842.4,349.1" fill="#ef6e8a" stroke="#ef6e8a" stroke-width="0.6"/>
<polygon points="842.4,349.1 851.4,351.5 857.8,347.2 848.8,344.9" fill="#ef7682" stroke="#ef7682" stroke-width="0.6"/>
<polygon points="848.8,344.9 857.8,347.2 864.0,343.4 855.0,341.1" fill="#ef7e7a" stroke="#ef7e7a" stroke-width="0.6"/>
<polygon points="855.0,341.1 864.0,343.4 870.0,339.7 861.1,337.5" fill="#ef8574" stroke="#ef8574" stroke-width="0.6"/>
<polygon points="861.1,337.5 870.0,339.7 876.0,336.0 867.1,333.9" fill="#ef8c6d" stroke="#ef8c6d" stroke-width="0.6"/>
<polygon points="867.1,333.9 876.0,336.0 881.8,331.8 873.0,329.7" fill="#ef9564" stroke="#ef9564" stroke-width="0.6"/>
<polygon points="873.0,329.7 881.8,331.8 887.5,327.6 878.7,325.6" fill="#efa158" stroke="#efa158" stroke-width="0.6"/>
<polygon points="645.2,420.4 655.3,426.0 667.9,423.0 657.8,417.6" fill="#d7924e" stroke="#d7924e" stroke-width="0.6"/>
<polygon points="657.8,417.6 667.9,423.0 679.9,419.7 669.8,414.6" fill="#dc8e56" stroke="#dc8e56" stroke-width="0.6"/>
<polygon points="669.8,414.6 679.9,419.7 691.5,416.3 681.5,411.4" fill="#e08c5d" stroke="#e08c5d" stroke-width="0.6"/>
<polygon points="681.5,411.4 691.5,416.3 702.7,413.0 692.7,408.5" fill="#df8760" stroke="#df8760" stroke-width="0.6"/>
<polygon points="692.7,408.5 702.7,413.0 713.6,411.3 703.6,406.9" fill="#cb755e" stroke="#cb755e" stroke-width="0.6"/>
<polygon points="703.6,406.9 713.6,411.3 724.1,410.0 714.2,405.7" fill="#c96a66" stroke="#c96a66" stroke-width="0.6"/>
<polygon points="714.2,405.7 724.1,410.0 734.2,408.9 724.4,404.8" fill="#c65e70" stroke="#c65e70" stroke-width="0.6"/>
<polygon points="724.4,404.8 734.2,408.9 744.1,407.8 734.2,403.8" fill="#c7537c" stroke="#c7537c" stroke-width="0.6"/>
<polygon points="734.2,403.8 744.1,407.8 753.5,404.8 743.7,401.0" fill="#e15594" stroke="#e15594" stroke-width="0.6"/>
<polygon points="743.7,401.0 753.5,404.8 762.6,399.9 752.8,396.3" fill="#ef5c9d" stroke="#ef5c9d" stroke-width="0.6"/>
<polygon points="752.8,396.3 762.6,399.9 771.5,395.4 761.7,391.9" fill="#ef6198" stroke="#ef6198" stroke-width="0.6"/>
<polygon points="761.7,391.9 771.5,395.4 780.1,391.4 770.4,388.1" fill="#ef6594" stroke="#ef6594" stroke-width="0.6"/>
<polygon points="770.4,388.1 780.1,391.4 788.4,387.8 778.8,384.6" fill="#ef6792" stroke="#ef6792" stroke-width="0.6"/>
<polygon points="778.8,384.6 788.4,387.8 796.5,384.0 786.9,381.0" fill="#ef6891" stroke="#ef6891" stroke-width="0.6"/>
<polygon points="786.9,381.0 796.5,384.0 804.5,380.2 794.9,377.3" fill="#ef6a8e" stroke="#ef6a8e" stroke-width="0.6"/>
<polygon points="794.9,377.3 804.5,380.2 812.1,376.6 802.6,373.8" fill="#ef6d8c" stroke="#ef6d8c" stroke-width="0.6"/>
<polygon points="802.6,373.8 812.1,376.6 819.6,373.6 810.1,370.9" fill="#ef6c8c" stroke="#ef6c8c" stroke-width="0.6"/>
<polygon points="810.1,370.9 819.6,373.6 826.9,370.7 817.5,368.1" fill="#ef6a8e" stroke="#ef6a8e" stroke-width="0.6"/>
<polygon points="817.5,368.1 826.9,370.7 834.0,367.7 824.6,365.1" fill="#ef6990" stroke="#ef6990" stroke-width="0.6"/>
<polygon points="824.6,365.1 834.0,367.7 840.9,364.7 831.5,362.2" fill="#ef6891" stroke="#ef6891" stroke-width="0.6"/>
<polygon points="831.5,362.2 840.9,364.7 847.6,361.7 838.3,359.2" fill="#ef6792" stroke="#ef6792" stroke-width="0.6"/>
<polygon points="838.3,359.2 847.6,361.7 854.2,358.0 844.9,355.6" fill="#ef6891" stroke="#ef6891" stroke-width="0.6"/>
<polygon points="844.9,355.6 854.2,358.0 860.7,353.8 851.4,351.5" fill="#ef6e8b" stroke="#ef6e8b" stroke-width="0.6"/>
<polygon points="851.4,351.5 860.7,353.8 867.0,349.5 857.8,347.2" fill="#ef7683" stroke="#ef7683" stroke-width="0.6"/>
<polygon points="857.8,347.2 867.0,349.5 873.1,345.6 864.0,343.4" fill="#ef7e7b" stroke="#ef7e7b" stroke-width="0.6"/>
<polygon points="864.0,343.4 873.1,345.6 879.1,341.8 870.0,339.7" fill="#ef8474" stroke="#ef8474" stroke-width="0.6"/>
<polygon points="870.0,339.7 879.1,341.8 885.0,338.2 876.0,336.0" fill="#ef8b6e" stroke="#ef8b6e" stroke-width="0.6"/>
<polygon points="876.0,336.0 885.0,338.2 890.8,333.8 881.8,331.8" fill="#ef9464" stroke="#ef9464" stroke-width="0.6"/>
<polygon points="881.8,331.8 890.8,333.8 896.5,329.6 887.5,327.6" fill="#efa058" stroke="#efa058" stroke-width="0.6"/>
<polygon points="655.3,426.0 665.6,430.8 678.2,427.6 667.9,423.0" fill="#d58d50" stroke="#d58d50" stroke-width="0.6"/>
<polygon points="667.9,423.0 678.2,427.6 690.2,424.2 679.9,419.7" fill="#da8a59" stroke="#da8a59" stroke-width="0.6"/>
<polygon points="679.9,419.7 690.2,424.2 701.7,420.4 691.5,416.3" fill="#e0895f" stroke="#e0895f" stroke-width="0.6"/>
<polygon points="691.5,416.3 701.7,420.4 712.9,416.9 702.7,413.0" fill="#de8561" stroke="#de8561" stroke-width="0.6"/>
<polygon points="702.7,413.0 712.9,416.9 723.8,415.1 713.6,411.3" fill="#c9725e" stroke="#c9725e" stroke-width="0.6"/>
<polygon points="713.6,411.3 723.8,415.1 734.2,413.6 724.1,410.0" fill="#c66866" stroke="#c66866" stroke-width="0.6"/>
<polygon points="724.1,410.0 734.2,413.6 744.4,412.4 734.2,408.9" fill="#c35b70" stroke="#c35b70" stroke-width="0.6"/>
<polygon points="734.2,408.9 744.4,412.4 754.1,411.1 744.1,407.8" fill="#c4507b" stroke="#c4507b" stroke-width="0.6"/>
<polygon points="744.1,407.8 754.1,411.1 763.5,407.9 753.5,404.8" fill="#de5394" stroke="#de5394" stroke-width="0.6"/>
<polygon points="753.5,404.8 763.5,407.9 772.6,402.9 762.6,399.9" fill="#ef5b9e" stroke="#ef5b9e" stroke-width="0.6"/>
<polygon points="762.6,399.9 772.6,402.9 781.4,398.3 771.5,395.4" fill="#ef6198" stroke="#ef6198" stroke-width="0.6"/>
<polygon points="771.5,395.4 781.4,398.3 790.0,394.1 780.1,391.4" fill="#ef6594" stroke="#ef6594" stroke-width="0.6"/>
<polygon points="780.1,391.4 790.0,394.1 798.3,390.3 788.4,387.8" fill="#ed6691" stroke="#ed6691" stroke-width="0.6"/>
<polygon points="788.4,387.8 798.3,390.3 806.4,386.4 796.5,384.0" fill="#ef6890" stroke="#ef6890" stroke-width="0.6"/>
<polygon points="796.5,384.0 806.4,386.4 814.3,382.5 804.5,380.2" fill="#ef6b8e" stroke="#ef6b8e" stroke-width="0.6"/>
<polygon points="804.5,380.2 814.3,382.5 821.9,378.8 812.1,376.6" fill="#ef6d8b" stroke="#ef6d8b" stroke-width="0.6"/>
<polygon points="812.1,376.6 821.9,378.8 829.3,375.7 819.6,373.6" fill="#e76986" stroke="#e76986" stroke-width="0.6"/>
<polygon points="819.6,373.6 829.3,375.7 836.6,372.8 826.9,370.7" fill="#e76788" stroke="#e76788" stroke-width="0.6"/>
<polygon points="826.9,370.7 836.6,372.8 843.6,369.6 834.0,367.7" fill="#eb688c" stroke="#eb688c" stroke-width="0.6"/>
<polygon points="834.0,367.7 843.6,369.6 850.5,366.6 840.9,364.7" fill="#eb678d" stroke="#eb678d" stroke-width="0.6"/>
<polygon points="840.9,364.7 850.5,366.6 857.1,363.5 847.6,361.7" fill="#ec668f" stroke="#ec668f" stroke-width="0.6"/>
<polygon points="847.6,361.7 857.1,363.5 863.7,359.8 854.2,358.0" fill="#ef6990" stroke="#ef6990" stroke-width="0.6"/>
<polygon points="854.2,358.0 863.7,359.8 870.1,355.5 860.7,353.8" fill="#ef6f8a" stroke="#ef6f8a" stroke-width="0.6"/>
<polygon points="860.7,353.8 870.1,355.5 876.4,351.2 867.0,349.5" fill="#ef7782" stroke="#ef7782" stroke-width="0.6"/>
<polygon points="867.0,349.5 876.4,351.2 882.5,347.3 873.1,345.6" fill="#ef7f7a" stroke="#ef7f7a" stroke-width="0.6"/>
<polygon points="873.1,345.6 882.5,347.3 888.4,343.5 879.1,341.8" fill="#ef8573" stroke="#ef8573" stroke-width="0.6"/>
<polygon points="879.1,341.8 888.4,343.5 894.3,339.8 885.0,338.2" fill="#ef8c6d" stroke="#ef8c6d" stroke-width="0.6"/>
<polygon points="885.0,338.2 894.3,339.8 900.0,335.5 890.8,333.8" fill="#ef9564" stroke="#ef9564" stroke-width="0.6"/>
<polygon points="890.8,333.8 900.0,335.5 905.6,331.2 896.5,329.6" fill="#efa158" stroke="#efa158" stroke-width="0.6"/>
<polygon points="665.6,430.8 676.3,435.8 688.8,432.4 678.2,427.6" fill="#d68c52" stroke="#d68c52" stroke-width="0.6"/>
<polygon points="678.2,427.6 688.8,432.4 700.8,428.7 690.2,424.2" fill="#db8a5a" stroke="#db8a5a" stroke-width="0.6"/>
<polygon points="690.2,424.2 700.8,428.7 712.3,424.7 701.7,420.4" fill="#e28a61" stroke="#e28a61" stroke-width="0.6"/>
<polygon points="701.7,420.4 712.3,424.7 723.4,420.9 712.9,416.9" fill="#e08663" stroke="#e08663" stroke-width="0.6"/>
<polygon points="712.9,416.9 723.4,420.9 734.2,418.9 723.8,415.1" fill="#c9735e" stroke="#c9735e" stroke-width="0.6"/>
<polygon points="723.8,415.1 734.2,418.9 744.7,417.2 734.2,413.6" fill="#c66866" stroke="#c66866" stroke-width="0.6"/>
<polygon points="734.2,413.6 744.7,417.2 754.7,415.8 744.4,412.4" fill="#c45c6f" stroke="#c45c6f" stroke-width="0.6"/>
<polygon points="744.4,412.4 754.7,415.8 764.4,414.5 754.1,411.1" fill="#c4517a" stroke="#c4517a" stroke-width="0.6"/>
<polygon points="754.1,411.1 764.4,414.5 773.8,411.0 763.5,407.9" fill="#df5593" stroke="#df5593" stroke-width="0.6"/>
<polygon points="763.5,407.9 773.8,411.0 782.8,405.8 772.6,402.9" fill="#ef5d9c" stroke="#ef5d9c" stroke-width="0.6"/>
<polygon points="772.6,402.9 782.8,405.8 791.6,401.0 781.4,398.3" fill="#ef6396" stroke="#ef6396" stroke-width="0.6"/>
<polygon points="781.4,398.3 791.6,401.0 800.1,396.7 790.0,394.1" fill="#ef6792" stroke="#ef6792" stroke-width="0.6"/>
<polygon points="790.0,394.1 800.1,396.7 808.4,392.8 798.3,390.3" fill="#eb678d" stroke="#eb678d" stroke-width="0.6"/>
<polygon points="798.3,390.3 808.4,392.8 816.5,388.7 806.4,386.4" fill="#ed6a8c" stroke="#ed6a8c" stroke-width="0.6"/>
<polygon points="806.4,386.4 816.5,388.7 824.3,384.6 814.3,382.5" fill="#ed6d8a" stroke="#ed6d8a" stroke-width="0.6"/>
<polygon points="814.3,382.5 824.3,384.6 831.9,380.8 821.9,378.8" fill="#eb6e86" stroke="#eb6e86" stroke-width="0.6"/>
<polygon points="821.9,378.8 831.9,380.8 839.3,377.7 829.3,375.7" fill="#e36b81" stroke="#e36b81" stroke-width="0.6"/>
<polygon points="829.3,375.7 839.3,377.7 846.5,374.6 836.6,372.8" fill="#e36983" stroke="#e36983" stroke-width="0.6"/>
<polygon points="836.6,372.8 846.5,374.6 853.5,371.4 843.6,369.6" fill="#e76987" stroke="#e76987" stroke-width="0.6"/>
<polygon points="843.6,369.6 853.5,371.4 860.3,368.3 850.5,366.6" fill="#e76887" stroke="#e76887" stroke-width="0.6"/>
<polygon points="850.5,366.6 860.3,368.3 866.9,365.2 857.1,363.5" fill="#e86889" stroke="#e86889" stroke-width="0.6"/>
<polygon points="857.1,363.5 866.9,365.2 873.4,361.5 863.7,359.8" fill="#ee6c8b" stroke="#ee6c8b" stroke-width="0.6"/>
<polygon points="863.7,359.8 873.4,361.5 879.7,357.1 870.1,355.5" fill="#ef7286" stroke="#ef7286" stroke-width="0.6"/>
<polygon points="870.1,355.5 879.7,357.1 886.0,352.8 876.4,351.2" fill="#ef7a7e" stroke="#ef7a7e" stroke-width="0.6"/>
<polygon points="876.4,351.2 886.0,352.8 892.0,348.8 882.5,347.3" fill="#ef8277" stroke="#ef8277" stroke-width="0.6"/>
<polygon points="882.5,347.3 892.0,348.8 897.9,345.0 888.4,343.5" fill="#ef8870" stroke="#ef8870" stroke-width="0.6"/>
<polygon points="888.4,343.5 897.9,345.0 903.7,341.3 894.3,339.8" fill="#ef8f6a" stroke="#ef8f6a" stroke-width="0.6"/>
<polygon points="894.3,339.8 903.7,341.3 909.4,336.9 900.0,335.5" fill="#ef9861" stroke="#ef9861" stroke-width="0.6"/>
<polygon points="900.0,335.5 909.4,336.9 915.0,332.6 905.6,331.2" fill="#efa355" stroke="#efa355" stroke-width="0.6"/>
<polygon points="676.3,435.8 687.2,440.4 699.7,436.8 688.8,432.4" fill="#d58b52" stroke="#d58b52" stroke-width="0.6"/>
<polygon points="688.8,432.4 699.7,436.8 711.6,432.9 700.8,428.7" fill="#da895a" stroke="#da895a" stroke-width="0.6"/>
<polygon points="700.8,428.7 711.6,432.9 723.1,428.6 712.3,424.7" fill="#e28a61" stroke="#e28a61" stroke-width="0.6"/>
<polygon points="712.3,424.7 723.1,428.6 734.2,424.5 723.4,420.9" fill="#e08762" stroke="#e08762" stroke-width="0.6"/>
<polygon points="723.4,420.9 734.2,424.5 745.0,422.4 734.2,418.9" fill="#c8735c" stroke="#c8735c" stroke-width="0.6"/>
<polygon points="734.2,418.9 745.0,422.4 755.4,420.5 744.7,417.2" fill="#c56964" stroke="#c56964" stroke-width="0.6"/>
<polygon points="744.7,417.2 755.4,420.5 765.4,419.0 754.7,415.8" fill="#c35d6d" stroke="#c35d6d" stroke-width="0.6"/>
<polygon points="754.7,415.8 765.4,419.0 775.0,417.5 764.4,414.5" fill="#c35278" stroke="#c35278" stroke-width="0.6"/>
<polygon points="764.4,414.5 775.0,417.5 784.3,413.8 773.8,411.0" fill="#de5690" stroke="#de5690" stroke-width="0.6"/>
<polygon points="773.8,411.0 784.3,413.8 793.4,408.4 782.8,405.8" fill="#ef5f99" stroke="#ef5f99" stroke-width="0.6"/>
<polygon points="782.8,405.8 793.4,408.4 802.1,403.5 791.6,401.0" fill="#ee6592" stroke="#ee6592" stroke-width="0.6"/>
<polygon points="791.6,401.0 802.1,403.5 810.6,399.0 800.1,396.7" fill="#eb688c" stroke="#eb688c" stroke-width="0.6"/>
<polygon points="800.1,396.7 810.6,399.0 818.8,394.9 808.4,392.8" fill="#e86988" stroke="#e86988" stroke-width="0.6"/>
<polygon points="808.4,392.8 818.8,394.9 826.8,390.7 816.5,388.7" fill="#e96c87" stroke="#e96c87" stroke-width="0.6"/>
<polygon points="816.5,388.7 826.8,390.7 834.6,386.5 824.3,384.6" fill="#e96f84" stroke="#e96f84" stroke-width="0.6"/>
<polygon points="824.3,384.6 834.6,386.5 842.2,382.6 831.9,380.8" fill="#e77080" stroke="#e77080" stroke-width="0.6"/>
<polygon points="831.9,380.8 842.2,382.6 849.5,379.4 839.3,377.7" fill="#df6d7b" stroke="#df6d7b" stroke-width="0.6"/>
<polygon points="839.3,377.7 849.5,379.4 856.6,376.3 846.5,374.6" fill="#e06b7d" stroke="#e06b7d" stroke-width="0.6"/>
<polygon points="846.5,374.6 856.6,376.3 863.6,373.1 853.5,371.4" fill="#e46c81" stroke="#e46c81" stroke-width="0.6"/>
<polygon points="853.5,371.4 863.6,373.1 870.3,369.9 860.3,368.3" fill="#e46b81" stroke="#e46b81" stroke-width="0.6"/>
<polygon points="860.3,368.3 870.3,369.9 876.9,366.7 866.9,365.2" fill="#e46b83" stroke="#e46b83" stroke-width="0.6"/>
<polygon points="866.9,365.2 876.9,366.7 883.3,363.0 873.4,361.5" fill="#eb6f85" stroke="#eb6f85" stroke-width="0.6"/>
<polygon points="873.4,361.5 883.3,363.0 889.6,358.6 879.7,357.1" fill="#ed7581" stroke="#ed7581" stroke-width="0.6"/>
<polygon points="879.7,357.1 889.6,358.6 895.8,354.3 886.0,352.8" fill="#ee7d79" stroke="#ee7d79" stroke-width="0.6"/>
<polygon points="886.0,352.8 895.8,354.3 901.8,350.3 892.0,348.8" fill="#ef8573" stroke="#ef8573" stroke-width="0.6"/>
<polygon points="892.0,348.8 901.8,350.3 907.7,346.5 897.9,345.0" fill="#ef8c6d" stroke="#ef8c6d" stroke-width="0.6"/>
<polygon points="897.9,345.0 907.7,346.5 913.4,342.8 903.7,341.3" fill="#ef9266" stroke="#ef9266" stroke-width="0.6"/>
<polygon points="903.7,341.3 913.4,342.8 919.0,338.4 909.4,336.9" fill="#ef9b5d" stroke="#ef9b5d" stroke-width="0.6"/>
<polygon points="909.4,336.9 919.0,338.4 924.6,334.0 915.0,332.6" fill="#efa752" stroke="#efa752" stroke-width="0.6"/>
<polygon points="687.2,440.4 698.5,444.9 710.9,441.1 699.7,436.8" fill="#d48c50" stroke="#d48c50" stroke-width="0.6"/>
<polygon points="699.7,436.8 710.9,441.1 722.8,437.0 711.6,432.9" fill="#da8a58" stroke="#da8a58" stroke-width="0.6"/>
<polygon points="711.6,432.9 722.8,437.0 734.3,432.4 723.1,428.6" fill="#e28c5f" stroke="#e28c5f" stroke-width="0.6"/>
<polygon points="723.1,428.6 734.3,432.4 745.4,428.0 734.2,424.5" fill="#e0895f" stroke="#e0895f" stroke-width="0.6"/>
<polygon points="734.2,424.5 745.4,428.0 756.1,425.7 745.0,422.4" fill="#c7755a" stroke="#c7755a" stroke-width="0.6"/>
<polygon points="745.0,422.4 756.1,425.7 766.4,423.7 755.4,420.5" fill="#c56b62" stroke="#c56b62" stroke-width="0.6"/>
<polygon points="755.4,420.5 766.4,423.7 776.3,422.0 765.4,419.0" fill="#c25f6a" stroke="#c25f6a" stroke-width="0.6"/>
<polygon points="765.4,419.0 776.3,422.0 785.9,420.4 775.0,417.5" fill="#c25475" stroke="#c25475" stroke-width="0.6"/>
<polygon points="775.0,417.5 785.9,420.4 795.2,416.5 784.3,413.8" fill="#dd598d" stroke="#dd598d" stroke-width="0.6"/>
<polygon points="784.3,413.8 795.2,416.5 804.2,410.8 793.4,408.4" fill="#ec6293" stroke="#ec6293" stroke-width="0.6"/>
<polygon points="793.4,408.4 804.2,410.8 812.9,405.8 802.1,403.5" fill="#ea678c" stroke="#ea678c" stroke-width="0.6"/>
<polygon points="802.1,403.5 812.9,405.8 821.3,401.2 810.6,399.0" fill="#e86b86" stroke="#e86b86" stroke-width="0.6"/>
<polygon points="810.6,399.0 821.3,401.2 829.5,397.0 818.8,394.9" fill="#e46c82" stroke="#e46c82" stroke-width="0.6"/>
<polygon points="818.8,394.9 829.5,397.0 837.5,392.6 826.8,390.7" fill="#e66f80" stroke="#e66f80" stroke-width="0.6"/>
<polygon points="826.8,390.7 837.5,392.6 845.2,388.2 834.6,386.5" fill="#e6727d" stroke="#e6727d" stroke-width="0.6"/>
<polygon points="834.6,386.5 845.2,388.2 852.7,384.2 842.2,382.6" fill="#e47479" stroke="#e47479" stroke-width="0.6"/>
<polygon points="842.2,382.6 852.7,384.2 860.0,381.0 849.5,379.4" fill="#dc7075" stroke="#dc7075" stroke-width="0.6"/>
<polygon points="849.5,379.4 860.0,381.0 867.0,377.9 856.6,376.3" fill="#dc6e77" stroke="#dc6e77" stroke-width="0.6"/>
<polygon points="856.6,376.3 867.0,377.9 873.9,374.6 863.6,373.1" fill="#e06f7a" stroke="#e06f7a" stroke-width="0.6"/>
<polygon points="863.6,373.1 873.9,374.6 880.6,371.3 870.3,369.9" fill="#e16e7b" stroke="#e16e7b" stroke-width="0.6"/>
<polygon points="870.3,369.9 880.6,371.3 887.1,368.2 876.9,366.7" fill="#e16e7c" stroke="#e16e7c" stroke-width="0.6"/>
<polygon points="876.9,366.7 887.1,368.2 893.5,364.4 883.3,363.0" fill="#e8737e" stroke="#e8737e" stroke-width="0.6"/>
<polygon points="883.3,363.0 893.5,364.4 899.7,360.0 889.6,358.6" fill="#eb797b" stroke="#eb797b" stroke-width="0.6"/>
<polygon points="889.6,358.6 899.7,360.0 905.9,355.7 895.8,354.3" fill="#ec8174" stroke="#ec8174" stroke-width="0.6"/>
<polygon points="895.8,354.3 905.9,355.7 911.8,351.7 901.8,350.3" fill="#ed896d" stroke="#ed896d" stroke-width="0.6"/>
<polygon points="901.8,350.3 911.8,351.7 917.6,347.9 907.7,346.5" fill="#ee9068" stroke="#ee9068" stroke-width="0.6"/>
<polygon points="907.7,346.5 917.6,347.9 923.3,344.2 913.4,342.8" fill="#ef9662" stroke="#ef9662" stroke-width="0.6"/>
<polygon points="913.4,342.8 923.3,344.2 928.9,339.8 919.0,338.4" fill="#ee9e59" stroke="#ee9e59" stroke-width="0.6"/>
<polygon points="919.0,338.4 928.9,339.8 934.3,335.4 924.6,334.0" fill="#efaa4e" stroke="#efaa4e" stroke-width="0.6"/>
<polygon points="698.5,444.9 710.1,449.5 722.5,445.5 710.9,441.1" fill="#d58e4f" stroke="#d58e4f" stroke-width="0.6"/>
<polygon points="710.9,441.1 722.5,445.5 734.4,441.1 722.8,437.0" fill="#db8d56" stroke="#db8d56" stroke-width="0.6"/>
<polygon points="722.8,437.0 734.4,441.1 745.8,436.2 734.3,432.4" fill="#e4905d" stroke="#e4905d" stroke-width="0.6"/>
<polygon points="734.3,432.4 745.8,436.2 756.8,431.5 745.4,428.0" fill="#e18d5c" stroke="#e18d5c" stroke-width="0.6"/>
<polygon points="745.4,428.0 756.8,431.5 767.5,429.0 756.1,425.7" fill="#c77856" stroke="#c77856" stroke-width="0.6"/>
<polygon points="756.1,425.7 767.5,429.0 777.7,426.7 766.4,423.7" fill="#c56e5e" stroke="#c56e5e" stroke-width="0.6"/>
<polygon points="766.4,423.7 777.7,426.7 787.6,424.9 776.3,422.0" fill="#c26367" stroke="#c26367" stroke-width="0.6"/>
<polygon points="776.3,422.0 787.6,424.9 797.2,423.1 785.9,420.4" fill="#c15871" stroke="#c15871" stroke-width="0.6"/>
<polygon points="785.9,420.4 797.2,423.1 806.4,418.9 795.2,416.5" fill="#dc5e87" stroke="#dc5e87" stroke-width="0.6"/>
<polygon points="795.2,416.5 806.4,418.9 815.3,413.0 804.2,410.8" fill="#e8668b" stroke="#e8668b" stroke-width="0.6"/>
<polygon points="804.2,410.8 815.3,413.0 824.0,407.8 812.9,405.8" fill="#e56b83" stroke="#e56b83" stroke-width="0.6"/>
<polygon points="812.9,405.8 824.0,407.8 832.3,403.0 821.3,401.2" fill="#e36e7e" stroke="#e36e7e" stroke-width="0.6"/>
<polygon points="821.3,401.2 832.3,403.0 840.5,398.6 829.5,397.0" fill="#df6f79" stroke="#df6f79" stroke-width="0.6"/>
<polygon points="829.5,397.0 840.5,398.6 848.4,394.1 837.5,392.6" fill="#e07277" stroke="#e07277" stroke-width="0.6"/>
<polygon points="837.5,392.6 848.4,394.1 856.1,389.6 845.2,388.2" fill="#e07573" stroke="#e07573" stroke-width="0.6"/>
<polygon points="845.2,388.2 856.1,389.6 863.5,385.4 852.7,384.2" fill="#dd776f" stroke="#dd776f" stroke-width="0.6"/>
<polygon points="852.7,384.2 863.5,385.4 870.7,382.2 860.0,381.0" fill="#d6736b" stroke="#d6736b" stroke-width="0.6"/>
<polygon points="860.0,381.0 870.7,382.2 877.7,379.0 867.0,377.9" fill="#d6716d" stroke="#d6716d" stroke-width="0.6"/>
<polygon points="867.0,377.9 877.7,379.0 884.5,375.6 873.9,374.6" fill="#d97270" stroke="#d97270" stroke-width="0.6"/>
<polygon points="873.9,374.6 884.5,375.6 891.2,372.3 880.6,371.3" fill="#d97170" stroke="#d97170" stroke-width="0.6"/>
<polygon points="880.6,371.3 891.2,372.3 897.6,369.0 887.1,368.2" fill="#d97071" stroke="#d97071" stroke-width="0.6"/>
<polygon points="887.1,368.2 897.6,369.0 903.9,365.2 893.5,364.4" fill="#df7573" stroke="#df7573" stroke-width="0.6"/>
<polygon points="893.5,364.4 903.9,365.2 910.1,360.9 899.7,360.0" fill="#e27c70" stroke="#e27c70" stroke-width="0.6"/>
<polygon points="899.7,360.0 910.1,360.9 916.2,356.5 905.9,355.7" fill="#e48369" stroke="#e48369" stroke-width="0.6"/>
<polygon points="905.9,355.7 916.2,356.5 922.1,352.5 911.8,351.7" fill="#e38a62" stroke="#e38a62" stroke-width="0.6"/>
<polygon points="911.8,351.7 922.1,352.5 927.8,348.7 917.6,347.9" fill="#e4905d" stroke="#e4905d" stroke-width="0.6"/>
<polygon points="917.6,347.9 927.8,348.7 933.4,345.0 923.3,344.2" fill="#e49658" stroke="#e49658" stroke-width="0.6"/>
<polygon points="923.3,344.2 933.4,345.0 939.0,340.5 928.9,339.8" fill="#e69f50" stroke="#e69f50" stroke-width="0.6"/>
<polygon points="928.9,339.8 939.0,340.5 944.4,336.1 934.3,335.4" fill="#e7aa45" stroke="#e7aa45" stroke-width="0.6"/>
<polygon points="710.1,449.5 722.1,454.3 734.5,450.0 722.5,445.5" fill="#d6914d" stroke="#d6914d" stroke-width="0.6"/>
<polygon points="722.5,445.5 734.5,450.0 746.3,445.4 734.4,441.1" fill="#dc9055" stroke="#dc9055" stroke-width="0.6"/>
<polygon points="734.4,441.1 746.3,445.4 757.7,440.1 745.8,436.2" fill="#e6955b" stroke="#e6955b" stroke-width="0.6"/>
<polygon points="745.8,436.2 757.7,440.1 768.7,435.1 756.8,431.5" fill="#e4935a" stroke="#e4935a" stroke-width="0.6"/>
<polygon points="756.8,431.5 768.7,435.1 779.3,432.3 767.5,429.0" fill="#c87d53" stroke="#c87d53" stroke-width="0.6"/>
<polygon points="767.5,429.0 779.3,432.3 789.4,429.9 777.7,426.7" fill="#c6735b" stroke="#c6735b" stroke-width="0.6"/>
<polygon points="777.7,426.7 789.4,429.9 799.3,427.8 787.6,424.9" fill="#c36763" stroke="#c36763" stroke-width="0.6"/>
<polygon points="787.6,424.9 799.3,427.8 808.7,425.9 797.2,423.1" fill="#c25c6d" stroke="#c25c6d" stroke-width="0.6"/>
<polygon points="797.2,423.1 808.7,425.9 817.9,421.3 806.4,418.9" fill="#df6483" stroke="#df6483" stroke-width="0.6"/>
<polygon points="806.4,418.9 817.9,421.3 826.7,415.2 815.3,413.0" fill="#e86c85" stroke="#e86c85" stroke-width="0.6"/>
<polygon points="815.3,413.0 826.7,415.2 835.4,409.8 824.0,407.8" fill="#e5717d" stroke="#e5717d" stroke-width="0.6"/>
<polygon points="824.0,407.8 835.4,409.8 843.7,404.9 832.3,403.0" fill="#e37477" stroke="#e37477" stroke-width="0.6"/>
<polygon points="832.3,403.0 843.7,404.9 851.8,400.3 840.5,398.6" fill="#e07673" stroke="#e07673" stroke-width="0.6"/>
<polygon points="840.5,398.6 851.8,400.3 859.6,395.6 848.4,394.1" fill="#e17970" stroke="#e17970" stroke-width="0.6"/>
<polygon points="848.4,394.1 859.6,395.6 867.2,390.9 856.1,389.6" fill="#e07d6c" stroke="#e07d6c" stroke-width="0.6"/>
<polygon points="856.1,389.6 867.2,390.9 874.6,386.7 863.5,385.4" fill="#de7e68" stroke="#de7e68" stroke-width="0.6"/>
<polygon points="863.5,385.4 874.6,386.7 881.8,383.3 870.7,382.2" fill="#d67a64" stroke="#d67a64" stroke-width="0.6"/>
<polygon points="870.7,382.2 881.8,383.3 888.7,380.1 877.7,379.0" fill="#d67965" stroke="#d67965" stroke-width="0.6"/>
<polygon points="877.7,379.0 888.7,380.1 895.5,376.6 884.5,375.6" fill="#d97968" stroke="#d97968" stroke-width="0.6"/>
<polygon points="884.5,375.6 895.5,376.6 902.0,373.2 891.2,372.3" fill="#d97968" stroke="#d97968" stroke-width="0.6"/>
<polygon points="891.2,372.3 902.0,373.2 908.4,369.9 897.6,369.0" fill="#d97868" stroke="#d97868" stroke-width="0.6"/>
<polygon points="897.6,369.0 908.4,369.9 914.7,366.1 903.9,365.2" fill="#de7d6a" stroke="#de7d6a" stroke-width="0.6"/>
<polygon points="903.9,365.2 914.7,366.1 920.8,361.7 910.1,360.9" fill="#e28467" stroke="#e28467" stroke-width="0.6"/>
<polygon points="910.1,360.9 920.8,361.7 926.8,357.4 916.2,356.5" fill="#e38b61" stroke="#e38b61" stroke-width="0.6"/>
<polygon points="916.2,356.5 926.8,357.4 932.6,353.4 922.1,352.5" fill="#e3925a" stroke="#e3925a" stroke-width="0.6"/>
<polygon points="922.1,352.5 932.6,353.4 938.3,349.5 927.8,348.7" fill="#e39855" stroke="#e39855" stroke-width="0.6"/>
<polygon points="927.8,348.7 938.3,349.5 943.8,345.8 933.4,345.0" fill="#e49e4f" stroke="#e49e4f" stroke-width="0.6"/>
<polygon points="933.4,345.0 943.8,345.8 949.3,341.3 939.0,340.5" fill="#e6a748" stroke="#e6a748" stroke-width="0.6"/>
<polygon points="939.0,340.5 949.3,341.3 954.7,336.9 944.4,336.1" fill="#e7b23d" stroke="#e7b23d" stroke-width="0.6"/>
<polygon points="722.1,454.3 734.5,459.3 746.8,454.7 734.5,450.0" fill="#d7944b" stroke="#d7944b" stroke-width="0.6"/>
<polygon points="734.5,450.0 746.8,454.7 758.6,449.8 746.3,445.4" fill="#de9453" stroke="#de9453" stroke-width="0.6"/>
<polygon points="746.3,445.4 758.6,449.8 769.9,444.2 757.7,440.1" fill="#e99a59" stroke="#e99a59" stroke-width="0.6"/>
<polygon points="757.7,440.1 769.9,444.2 780.9,438.8 768.7,435.1" fill="#e79857" stroke="#e79857" stroke-width="0.6"/>
<polygon points="768.7,435.1 780.9,438.8 791.4,435.8 779.3,432.3" fill="#c98150" stroke="#c98150" stroke-width="0.6"/>
<polygon points="779.3,432.3 791.4,435.8 801.5,433.2 789.4,429.9" fill="#c77757" stroke="#c77757" stroke-width="0.6"/>
<polygon points="789.4,429.9 801.5,433.2 811.2,430.9 799.3,427.8" fill="#c46c60" stroke="#c46c60" stroke-width="0.6"/>
<polygon points="799.3,427.8 811.2,430.9 820.6,428.8 808.7,425.9" fill="#c36169" stroke="#c36169" stroke-width="0.6"/>
<polygon points="808.7,425.9 820.6,428.8 829.7,423.9 817.9,421.3" fill="#e16a7f" stroke="#e16a7f" stroke-width="0.6"/>
<polygon points="817.9,421.3 829.7,423.9 838.5,417.4 826.7,415.2" fill="#e9737f" stroke="#e9737f" stroke-width="0.6"/>
<polygon points="826.7,415.2 838.5,417.4 847.1,411.9 835.4,409.8" fill="#e57876" stroke="#e57876" stroke-width="0.6"/>
<polygon points="835.4,409.8 847.1,411.9 855.4,406.8 843.7,404.9" fill="#e37b71" stroke="#e37b71" stroke-width="0.6"/>
<polygon points="843.7,404.9 855.4,406.8 863.4,402.1 851.8,400.3" fill="#e17d6d" stroke="#e17d6d" stroke-width="0.6"/>
<polygon points="851.8,400.3 863.4,402.1 871.2,397.2 859.6,395.6" fill="#e2816a" stroke="#e2816a" stroke-width="0.6"/>
<polygon points="859.6,395.6 871.2,397.2 878.7,392.4 867.2,390.9" fill="#e18565" stroke="#e18565" stroke-width="0.6"/>
<polygon points="867.2,390.9 878.7,392.4 886.1,388.0 874.6,386.7" fill="#de8660" stroke="#de8660" stroke-width="0.6"/>
<polygon points="874.6,386.7 886.1,388.0 893.1,384.5 881.8,383.3" fill="#d6825c" stroke="#d6825c" stroke-width="0.6"/>
<polygon points="881.8,383.3 893.1,384.5 900.0,381.2 888.7,380.1" fill="#d6805e" stroke="#d6805e" stroke-width="0.6"/>
<polygon points="888.7,380.1 900.0,381.2 906.7,377.7 895.5,376.6" fill="#d98160" stroke="#d98160" stroke-width="0.6"/>
<polygon points="895.5,376.6 906.7,377.7 913.1,374.2 902.0,373.2" fill="#d98160" stroke="#d98160" stroke-width="0.6"/>
<polygon points="902.0,373.2 913.1,374.2 919.5,370.8 908.4,369.9" fill="#d98160" stroke="#d98160" stroke-width="0.6"/>
<polygon points="908.4,369.9 919.5,370.8 925.6,366.9 914.7,366.1" fill="#de8561" stroke="#de8561" stroke-width="0.6"/>
<polygon points="914.7,366.1 925.6,366.9 931.7,362.6 920.8,361.7" fill="#e28c5e" stroke="#e28c5e" stroke-width="0.6"/>
<polygon points="920.8,361.7 931.7,362.6 937.6,358.2 926.8,357.4" fill="#e39458" stroke="#e39458" stroke-width="0.6"/>
<polygon points="926.8,357.4 937.6,358.2 943.4,354.2 932.6,353.4" fill="#e39a52" stroke="#e39a52" stroke-width="0.6"/>
<polygon points="932.6,353.4 943.4,354.2 949.0,350.4 938.3,349.5" fill="#e3a04d" stroke="#e3a04d" stroke-width="0.6"/>
<polygon points="938.3,349.5 949.0,350.4 954.5,346.6 943.8,345.8" fill="#e4a647" stroke="#e4a647" stroke-width="0.6"/>
<polygon points="943.8,345.8 954.5,346.6 959.9,342.1 949.3,341.3" fill="#e6af40" stroke="#e6af40" stroke-width="0.6"/>
<polygon points="949.3,341.3 959.9,342.1 965.2,337.6 954.7,336.9" fill="#e7ba36" stroke="#e7ba36" stroke-width="0.6"/>
<polygon points="734.5,459.3 747.4,464.4 759.6,459.6 746.8,454.7" fill="#d89749" stroke="#d89749" stroke-width="0.6"/>
<polygon points="746.8,454.7 759.6,459.6 771.3,454.3 758.6,449.8" fill="#e09851" stroke="#e09851" stroke-width="0.6"/>
<polygon points="758.6,449.8 771.3,454.3 782.6,448.4 769.9,444.2" fill="#ec9f56" stroke="#ec9f56" stroke-width="0.6"/>
<polygon points="769.9,444.2 782.6,448.4 793.5,442.6 780.9,438.8" fill="#e99e54" stroke="#e99e54" stroke-width="0.6"/>
<polygon points="780.9,438.8 793.5,442.6 803.9,439.5 791.4,435.8" fill="#ca854d" stroke="#ca854d" stroke-width="0.6"/>
<polygon points="791.4,435.8 803.9,439.5 813.9,436.6 801.5,433.2" fill="#c87b54" stroke="#c87b54" stroke-width="0.6"/>
<polygon points="801.5,433.2 813.9,436.6 823.6,434.0 811.2,430.9" fill="#c5715c" stroke="#c5715c" stroke-width="0.6"/>
<polygon points="811.2,430.9 823.6,434.0 832.9,431.7 820.6,428.8" fill="#c46665" stroke="#c46665" stroke-width="0.6"/>
<polygon points="820.6,428.8 832.9,431.7 841.9,426.5 829.7,423.9" fill="#e4717b" stroke="#e4717b" stroke-width="0.6"/>
<polygon points="829.7,423.9 841.9,426.5 850.7,419.8 838.5,417.4" fill="#e97979" stroke="#e97979" stroke-width="0.6"/>
<polygon points="838.5,417.4 850.7,419.8 859.2,414.1 847.1,411.9" fill="#e67e70" stroke="#e67e70" stroke-width="0.6"/>
<polygon points="847.1,411.9 859.2,414.1 867.4,408.9 855.4,406.8" fill="#e4826b" stroke="#e4826b" stroke-width="0.6"/>
<polygon points="855.4,406.8 867.4,408.9 875.3,404.0 863.4,402.1" fill="#e28466" stroke="#e28466" stroke-width="0.6"/>
<polygon points="863.4,402.1 875.3,404.0 883.0,398.8 871.2,397.2" fill="#e38863" stroke="#e38863" stroke-width="0.6"/>
<polygon points="871.2,397.2 883.0,398.8 890.5,393.8 878.7,392.4" fill="#e28d5e" stroke="#e28d5e" stroke-width="0.6"/>
<polygon points="878.7,392.4 890.5,393.8 897.8,389.3 886.1,388.0" fill="#df8e59" stroke="#df8e59" stroke-width="0.6"/>
<polygon points="886.1,388.0 897.8,389.3 904.8,385.8 893.1,384.5" fill="#d78a55" stroke="#d78a55" stroke-width="0.6"/>
<polygon points="893.1,384.5 904.8,385.8 911.5,382.4 900.0,381.2" fill="#d68856" stroke="#d68856" stroke-width="0.6"/>
<polygon points="900.0,381.2 911.5,382.4 918.2,378.8 906.7,377.7" fill="#da8a59" stroke="#da8a59" stroke-width="0.6"/>
<polygon points="906.7,377.7 918.2,378.8 924.6,375.2 913.1,374.2" fill="#da8a58" stroke="#da8a58" stroke-width="0.6"/>
<polygon points="913.1,374.2 924.6,375.2 930.8,371.7 919.5,370.8" fill="#d98958" stroke="#d98958" stroke-width="0.6"/>
<polygon points="919.5,370.8 930.8,371.7 936.9,367.8 925.6,366.9" fill="#de8e59" stroke="#de8e59" stroke-width="0.6"/>
<polygon points="925.6,366.9 936.9,367.8 942.9,363.5 931.7,362.6" fill="#e29556" stroke="#e29556" stroke-width="0.6"/>
<polygon points="931.7,362.6 942.9,363.5 948.7,359.1 937.6,358.2" fill="#e39c50" stroke="#e39c50" stroke-width="0.6"/>
<polygon points="937.6,358.2 948.7,359.1 954.4,355.1 943.4,354.2" fill="#e3a24a" stroke="#e3a24a" stroke-width="0.6"/>
<polygon points="943.4,354.2 954.4,355.1 960.0,351.3 949.0,350.4" fill="#e3a844" stroke="#e3a844" stroke-width="0.6"/>
<polygon points="949.0,350.4 960.0,351.3 965.3,347.4 954.5,346.6" fill="#e4ae3f" stroke="#e4ae3f" stroke-width="0.6"/>
<polygon points="954.5,346.6 965.3,347.4 970.7,342.9 959.9,342.1" fill="#e6b738" stroke="#e6b738" stroke-width="0.6"/>
<polygon points="959.9,342.1 970.7,342.9 975.9,338.4 965.2,337.6" fill="#e7c22e" stroke="#e7c22e" stroke-width="0.6"/>
<polygon points="747.4,464.4 760.6,469.7 772.8,464.6 759.6,459.6" fill="#da9b47" stroke="#da9b47" stroke-width="0.6"/>
<polygon points="759.6,459.6 772.8,464.6 784.5,459.1 771.3,454.3" fill="#e29c4e" stroke="#e29c4e" stroke-width="0.6"/>
<polygon points="771.3,454.3 784.5,459.1 795.7,452.7 782.6,448.4" fill="#eea454" stroke="#eea454" stroke-width="0.6"/>
<polygon points="782.6,448.4 795.7,452.7 806.5,446.6 793.5,442.6" fill="#eba351" stroke="#eba351" stroke-width="0.6"/>
<polygon points="793.5,442.6 806.5,446.6 816.8,443.2 803.9,439.5" fill="#cb8a49" stroke="#cb8a49" stroke-width="0.6"/>
<polygon points="803.9,439.5 816.8,443.2 826.8,440.1 813.9,436.6" fill="#c98051" stroke="#c98051" stroke-width="0.6"/>
<polygon points="813.9,436.6 826.8,440.1 836.3,437.3 823.6,434.0" fill="#c67558" stroke="#c67558" stroke-width="0.6"/>
<polygon points="823.6,434.0 836.3,437.3 845.5,434.8 832.9,431.7" fill="#c46b61" stroke="#c46b61" stroke-width="0.6"/>
<polygon points="832.9,431.7 845.5,434.8 854.5,429.2 841.9,426.5" fill="#e67877" stroke="#e67877" stroke-width="0.6"/>
<polygon points="841.9,426.5 854.5,429.2 863.2,422.2 850.7,419.8" fill="#e98072" stroke="#e98072" stroke-width="0.6"/>
<polygon points="850.7,419.8 863.2,422.2 871.6,416.4 859.2,414.1" fill="#e68569" stroke="#e68569" stroke-width="0.6"/>
<polygon points="859.2,414.1 871.6,416.4 879.7,411.0 867.4,408.9" fill="#e58964" stroke="#e58964" stroke-width="0.6"/>
<polygon points="867.4,408.9 879.7,411.0 887.6,405.9 875.3,404.0" fill="#e38c60" stroke="#e38c60" stroke-width="0.6"/>
<polygon points="875.3,404.0 887.6,405.9 895.2,400.6 883.0,398.8" fill="#e4905c" stroke="#e4905c" stroke-width="0.6"/>
<polygon points="883.0,398.8 895.2,400.6 902.7,395.4 890.5,393.8" fill="#e39557" stroke="#e39557" stroke-width="0.6"/>
<polygon points="890.5,393.8 902.7,395.4 909.8,390.8 897.8,389.3" fill="#e09752" stroke="#e09752" stroke-width="0.6"/>
<polygon points="897.8,389.3 909.8,390.8 916.7,387.2 904.8,385.8" fill="#d7924e" stroke="#d7924e" stroke-width="0.6"/>
<polygon points="904.8,385.8 916.7,387.2 923.4,383.7 911.5,382.4" fill="#d7904f" stroke="#d7904f" stroke-width="0.6"/>
<polygon points="911.5,382.4 923.4,383.7 930.0,379.9 918.2,378.8" fill="#db9251" stroke="#db9251" stroke-width="0.6"/>
<polygon points="918.2,378.8 930.0,379.9 936.3,376.3 924.6,375.2" fill="#da9251" stroke="#da9251" stroke-width="0.6"/>
<polygon points="924.6,375.2 936.3,376.3 942.4,372.7 930.8,371.7" fill="#da9250" stroke="#da9250" stroke-width="0.6"/>
<polygon points="930.8,371.7 942.4,372.7 948.5,368.8 936.9,367.8" fill="#de9750" stroke="#de9750" stroke-width="0.6"/>
<polygon points="936.9,367.8 948.5,368.8 954.4,364.4 942.9,363.5" fill="#e29d4d" stroke="#e29d4d" stroke-width="0.6"/>
<polygon points="942.9,363.5 954.4,364.4 960.1,360.1 948.7,359.1" fill="#e3a547" stroke="#e3a547" stroke-width="0.6"/>
<polygon points="948.7,359.1 960.1,360.1 965.7,356.0 954.4,355.1" fill="#e3aa41" stroke="#e3aa41" stroke-width="0.6"/>
<polygon points="954.4,355.1 965.7,356.0 971.2,352.2 960.0,351.3" fill="#e3b03c" stroke="#e3b03c" stroke-width="0.6"/>
<polygon points="960.0,351.3 971.2,352.2 976.5,348.3 965.3,347.4" fill="#e4b637" stroke="#e4b637" stroke-width="0.6"/>
<polygon points="965.3,347.4 976.5,348.3 981.8,343.7 970.7,342.9" fill="#e6bf30" stroke="#e6bf30" stroke-width="0.6"/>
<polygon points="970.7,342.9 981.8,343.7 986.9,339.3 975.9,338.4" fill="#e7ca26" stroke="#e7ca26" stroke-width="0.6"/>
<polygon points="760.6,469.7 774.4,475.2 786.5,469.8 772.8,464.6" fill="#db9e45" stroke="#db9e45" stroke-width="0.6"/>
<polygon points="772.8,464.6 786.5,469.8 798.1,464.0 784.5,459.1" fill="#e4a04c" stroke="#e4a04c" stroke-width="0.6"/>
<polygon points="784.5,459.1 798.1,464.0 809.2,457.2 795.7,452.7" fill="#efa850" stroke="#efa850" stroke-width="0.6"/>
<polygon points="795.7,452.7 809.2,457.2 819.9,450.7 806.5,446.6" fill="#eda94e" stroke="#eda94e" stroke-width="0.6"/>
<polygon points="806.5,446.6 819.9,450.7 830.2,447.1 816.8,443.2" fill="#cc8e46" stroke="#cc8e46" stroke-width="0.6"/>
<polygon points="816.8,443.2 830.2,447.1 840.0,443.7 826.8,440.1" fill="#ca854d" stroke="#ca854d" stroke-width="0.6"/>
<polygon points="826.8,440.1 840.0,443.7 849.5,440.7 836.3,437.3" fill="#c77a55" stroke="#c77a55" stroke-width="0.6"/>
<polygon points="836.3,437.3 849.5,440.7 858.5,438.0 845.5,434.8" fill="#c5705d" stroke="#c5705d" stroke-width="0.6"/>
<polygon points="845.5,434.8 858.5,438.0 867.4,432.0 854.5,429.2" fill="#e77f72" stroke="#e77f72" stroke-width="0.6"/>
<polygon points="854.5,429.2 867.4,432.0 876.1,424.7 863.2,422.2" fill="#e9866c" stroke="#e9866c" stroke-width="0.6"/>
<polygon points="863.2,422.2 876.1,424.7 884.4,418.8 871.6,416.4" fill="#e68c63" stroke="#e68c63" stroke-width="0.6"/>
<polygon points="871.6,416.4 884.4,418.8 892.5,413.2 879.7,411.0" fill="#e5905e" stroke="#e5905e" stroke-width="0.6"/>
<polygon points="879.7,411.0 892.5,413.2 900.2,407.9 887.6,405.9" fill="#e49359" stroke="#e49359" stroke-width="0.6"/>
<polygon points="887.6,405.9 900.2,407.9 907.8,402.4 895.2,400.6" fill="#e59855" stroke="#e59855" stroke-width="0.6"/>
<polygon points="895.2,400.6 907.8,402.4 915.2,397.1 902.7,395.4" fill="#e49d50" stroke="#e49d50" stroke-width="0.6"/>
<polygon points="902.7,395.4 915.2,397.1 922.2,392.3 909.8,390.8" fill="#e19f4a" stroke="#e19f4a" stroke-width="0.6"/>
<polygon points="909.8,390.8 922.2,392.3 929.1,388.6 916.7,387.2" fill="#d89a46" stroke="#d89a46" stroke-width="0.6"/>
<polygon points="916.7,387.2 929.1,388.6 935.6,385.0 923.4,383.7" fill="#d89848" stroke="#d89848" stroke-width="0.6"/>
<polygon points="923.4,383.7 935.6,385.0 942.1,381.2 930.0,379.9" fill="#db9b49" stroke="#db9b49" stroke-width="0.6"/>
<polygon points="930.0,379.9 942.1,381.2 948.3,377.4 936.3,376.3" fill="#db9b49" stroke="#db9b49" stroke-width="0.6"/>
<polygon points="936.3,376.3 948.3,377.4 954.4,373.7 942.4,372.7" fill="#da9b48" stroke="#da9b48" stroke-width="0.6"/>
<polygon points="942.4,372.7 954.4,373.7 960.3,369.8 948.5,368.8" fill="#de9f47" stroke="#de9f47" stroke-width="0.6"/>
<polygon points="948.5,368.8 960.3,369.8 966.1,365.4 954.4,364.4" fill="#e2a644" stroke="#e2a644" stroke-width="0.6"/>
<polygon points="954.4,364.4 966.1,365.4 971.8,361.1 960.1,360.1" fill="#e3ad3f" stroke="#e3ad3f" stroke-width="0.6"/>
<polygon points="960.1,360.1 971.8,361.1 977.3,357.0 965.7,356.0" fill="#e3b339" stroke="#e3b339" stroke-width="0.6"/>
<polygon points="965.7,356.0 977.3,357.0 982.7,353.1 971.2,352.2" fill="#e3b834" stroke="#e3b834" stroke-width="0.6"/>
<polygon points="971.2,352.2 982.7,353.1 987.9,349.2 976.5,348.3" fill="#e4be2f" stroke="#e4be2f" stroke-width="0.6"/>
<polygon points="976.5,348.3 987.9,349.2 993.1,344.6 981.8,343.7" fill="#e7c728" stroke="#e7c728" stroke-width="0.6"/>
<polygon points="981.8,343.7 993.1,344.6 998.2,340.1 986.9,339.3" fill="#e7d21e" stroke="#e7d21e" stroke-width="0.6"/>
<polygon points="774.4,475.2 788.7,480.9 800.7,475.2 786.5,469.8" fill="#dca242" stroke="#dca242" stroke-width="0.6"/>
<polygon points="786.5,469.8 800.7,475.2 812.2,469.0 798.1,464.0" fill="#e5a549" stroke="#e5a549" stroke-width="0.6"/>
<polygon points="798.1,464.0 812.2,469.0 823.2,461.9 809.2,457.2" fill="#efac4c" stroke="#efac4c" stroke-width="0.6"/>
<polygon points="809.2,457.2 823.2,461.9 833.8,455.0 819.9,450.7" fill="#efae4a" stroke="#efae4a" stroke-width="0.6"/>
<polygon points="819.9,450.7 833.8,455.0 844.0,451.1 830.2,447.1" fill="#cd9342" stroke="#cd9342" stroke-width="0.6"/>
<polygon points="830.2,447.1 844.0,451.1 853.7,447.5 840.0,443.7" fill="#cb8a49" stroke="#cb8a49" stroke-width="0.6"/>
<polygon points="840.0,443.7 853.7,447.5 863.0,444.2 849.5,440.7" fill="#c97f51" stroke="#c97f51" stroke-width="0.6"/>
<polygon points="849.5,440.7 863.0,444.2 872.0,441.2 858.5,438.0" fill="#c67559" stroke="#c67559" stroke-width="0.6"/>
<polygon points="858.5,438.0 872.0,441.2 880.8,434.8 867.4,432.0" fill="#e8856c" stroke="#e8856c" stroke-width="0.6"/>
<polygon points="867.4,432.0 880.8,434.8 889.4,427.2 876.1,424.7" fill="#e88d65" stroke="#e88d65" stroke-width="0.6"/>
<polygon points="876.1,424.7 889.4,427.2 897.6,421.2 884.4,418.8" fill="#e6935c" stroke="#e6935c" stroke-width="0.6"/>
<polygon points="884.4,418.8 897.6,421.2 905.6,415.5 892.5,413.2" fill="#e59757" stroke="#e59757" stroke-width="0.6"/>
<polygon points="892.5,413.2 905.6,415.5 913.3,410.0 900.2,407.9" fill="#e49b53" stroke="#e49b53" stroke-width="0.6"/>
<polygon points="900.2,407.9 913.3,410.0 920.8,404.3 907.8,402.4" fill="#e5a04e" stroke="#e5a04e" stroke-width="0.6"/>
<polygon points="907.8,402.4 920.8,404.3 928.0,398.8 915.2,397.1" fill="#e4a548" stroke="#e4a548" stroke-width="0.6"/>
<polygon points="915.2,397.1 928.0,398.8 935.0,393.8 922.2,392.3" fill="#e1a743" stroke="#e1a743" stroke-width="0.6"/>
<polygon points="922.2,392.3 935.0,393.8 941.7,390.1 929.1,388.6" fill="#d8a23f" stroke="#d8a23f" stroke-width="0.6"/>
<polygon points="929.1,388.6 941.7,390.1 948.2,386.4 935.6,385.0" fill="#d8a040" stroke="#d8a040" stroke-width="0.6"/>
<polygon points="935.6,385.0 948.2,386.4 954.5,382.5 942.1,381.2" fill="#dca341" stroke="#dca341" stroke-width="0.6"/>
<polygon points="942.1,381.2 954.5,382.5 960.7,378.5 948.3,377.4" fill="#dca440" stroke="#dca440" stroke-width="0.6"/>
<polygon points="948.3,377.4 960.7,378.5 966.7,374.7 954.4,373.7" fill="#daa43f" stroke="#daa43f" stroke-width="0.6"/>
<polygon points="954.4,373.7 966.7,374.7 972.5,370.7 960.3,369.8" fill="#dda83e" stroke="#dda83e" stroke-width="0.6"/>
<polygon points="960.3,369.8 972.5,370.7 978.2,366.4 966.1,365.4" fill="#e1ae3b" stroke="#e1ae3b" stroke-width="0.6"/>
<polygon points="966.1,365.4 978.2,366.4 983.8,362.0 971.8,361.1" fill="#e2b536" stroke="#e2b536" stroke-width="0.6"/>
<polygon points="971.8,361.1 983.8,362.0 989.2,357.9 977.3,357.0" fill="#e2ba31" stroke="#e2ba31" stroke-width="0.6"/>
<polygon points="977.3,357.0 989.2,357.9 994.5,354.0 982.7,353.1" fill="#e3bf2c" stroke="#e3bf2c" stroke-width="0.6"/>
<polygon points="982.7,353.1 994.5,354.0 999.6,350.1 987.9,349.2" fill="#e3c527" stroke="#e3c527" stroke-width="0.6"/>
<polygon points="987.9,349.2 999.6,350.1 1004.7,345.4 993.1,344.6" fill="#e6cf20" stroke="#e6cf20" stroke-width="0.6"/>
<polygon points="993.1,344.6 1004.7,345.4 1009.7,340.9 998.2,340.1" fill="#e6d916" stroke="#e6d916" stroke-width="0.6"/>
<polygon points="788.7,480.9 803.5,487.4 815.3,481.3 800.7,475.2" fill="#e1a941" stroke="#e1a941" stroke-width="0.6"/>
<polygon points="800.7,475.2 815.3,481.3 826.7,474.8 812.2,469.0" fill="#ebac48" stroke="#ebac48" stroke-width="0.6"/>
<polygon points="812.2,469.0 826.7,474.8 837.7,467.2 823.2,461.9" fill="#efb049" stroke="#efb049" stroke-width="0.6"/>
<polygon points="823.2,461.9 837.7,467.2 848.2,459.9 833.8,455.0" fill="#efb346" stroke="#efb346" stroke-width="0.6"/>
<polygon points="833.8,455.0 848.2,459.9 858.2,455.7 844.0,451.1" fill="#d19940" stroke="#d19940" stroke-width="0.6"/>
<polygon points="844.0,451.1 858.2,455.7 867.8,451.8 853.7,447.5" fill="#cf9047" stroke="#cf9047" stroke-width="0.6"/>
<polygon points="853.7,447.5 867.8,451.8 877.0,448.2 863.0,444.2" fill="#cc864f" stroke="#cc864f" stroke-width="0.6"/>
<polygon points="863.0,444.2 877.0,448.2 885.8,444.9 872.0,441.2" fill="#ca7b57" stroke="#ca7b57" stroke-width="0.6"/>
<polygon points="872.0,441.2 885.8,444.9 894.6,438.0 880.8,434.8" fill="#ed8e69" stroke="#ed8e69" stroke-width="0.6"/>
<polygon points="880.8,434.8 894.6,438.0 903.1,430.1 889.4,427.2" fill="#eb955f" stroke="#eb955f" stroke-width="0.6"/>
<polygon points="889.4,427.2 903.1,430.1 911.2,424.0 897.6,421.2" fill="#e99c56" stroke="#e99c56" stroke-width="0.6"/>
<polygon points="897.6,421.2 911.2,424.0 919.1,418.2 905.6,415.5" fill="#e9a052" stroke="#e9a052" stroke-width="0.6"/>
<polygon points="905.6,415.5 919.1,418.2 926.7,412.5 913.3,410.0" fill="#e9a44e" stroke="#e9a44e" stroke-width="0.6"/>
<polygon points="913.3,410.0 926.7,412.5 934.1,406.6 920.8,404.3" fill="#e9aa48" stroke="#e9aa48" stroke-width="0.6"/>
<polygon points="920.8,404.3 934.1,406.6 941.2,400.8 928.0,398.8" fill="#e8af42" stroke="#e8af42" stroke-width="0.6"/>
<polygon points="928.0,398.8 941.2,400.8 948.1,395.7 935.0,393.8" fill="#e5b23c" stroke="#e5b23c" stroke-width="0.6"/>
<polygon points="935.0,393.8 948.1,395.7 954.7,391.8 941.7,390.1" fill="#dbab38" stroke="#dbab38" stroke-width="0.6"/>
<polygon points="941.7,390.1 954.7,391.8 961.1,388.0 948.2,386.4" fill="#dbaa39" stroke="#dbaa39" stroke-width="0.6"/>
<polygon points="948.2,386.4 961.1,388.0 967.3,383.9 954.5,382.5" fill="#dead3a" stroke="#dead3a" stroke-width="0.6"/>
<polygon points="954.5,382.5 967.3,383.9 973.4,379.8 960.7,378.5" fill="#deae39" stroke="#deae39" stroke-width="0.6"/>
<polygon points="960.7,378.5 973.4,379.8 979.3,375.8 966.7,374.7" fill="#ddae37" stroke="#ddae37" stroke-width="0.6"/>
<polygon points="966.7,374.7 979.3,375.8 985.0,371.7 972.5,370.7" fill="#deb135" stroke="#deb135" stroke-width="0.6"/>
<polygon points="972.5,370.7 985.0,371.7 990.6,367.5 978.2,366.4" fill="#e1b732" stroke="#e1b732" stroke-width="0.6"/>
<polygon points="978.2,366.4 990.6,367.5 996.1,363.1 983.8,362.0" fill="#e3be2e" stroke="#e3be2e" stroke-width="0.6"/>
<polygon points="983.8,362.0 996.1,363.1 1001.4,359.0 989.2,357.9" fill="#e3c328" stroke="#e3c328" stroke-width="0.6"/>
<polygon points="989.2,357.9 1001.4,359.0 1006.6,355.0 994.5,354.0" fill="#e3c824" stroke="#e3c824" stroke-width="0.6"/>
<polygon points="994.5,354.0 1006.6,355.0 1011.6,351.0 999.6,350.1" fill="#e3cd1f" stroke="#e3cd1f" stroke-width="0.6"/>
<polygon points="999.6,350.1 1011.6,351.0 1016.6,346.3 1004.7,345.4" fill="#e6d718" stroke="#e6d718" stroke-width="0.6"/>
<polygon points="1004.7,345.4 1016.6,346.3 1021.5,341.6 1009.7,340.9" fill="#e6e10e" stroke="#e6e10e" stroke-width="0.6"/>
<polygon points="803.5,487.4 818.8,495.0 830.5,488.5 815.3,481.3" fill="#e5ab43" stroke="#e5ab43" stroke-width="0.6"/>
<polygon points="815.3,481.3 830.5,488.5 841.8,481.6 826.7,474.8" fill="#efaf4a" stroke="#efaf4a" stroke-width="0.6"/>
<polygon points="826.7,474.8 841.8,481.6 852.6,473.4 837.7,467.2" fill="#efb049" stroke="#efb049" stroke-width="0.6"/>
<polygon points="837.7,467.2 852.6,473.4 863.0,465.6 848.2,459.9" fill="#efb345" stroke="#efb345" stroke-width="0.6"/>
<polygon points="848.2,459.9 863.0,465.6 872.9,461.1 858.2,455.7" fill="#d69e40" stroke="#d69e40" stroke-width="0.6"/>
<polygon points="858.2,455.7 872.9,461.1 882.4,456.9 867.8,451.8" fill="#d49547" stroke="#d49547" stroke-width="0.6"/>
<polygon points="867.8,451.8 882.4,456.9 891.4,452.9 877.0,448.2" fill="#d28b4f" stroke="#d28b4f" stroke-width="0.6"/>
<polygon points="877.0,448.2 891.4,452.9 900.1,449.0 885.8,444.9" fill="#cf8156" stroke="#cf8156" stroke-width="0.6"/>
<polygon points="885.8,444.9 900.1,449.0 908.8,441.4 894.6,438.0" fill="#ef9465" stroke="#ef9465" stroke-width="0.6"/>
<polygon points="894.6,438.0 908.8,441.4 917.2,433.1 903.1,430.1" fill="#eb9b59" stroke="#eb9b59" stroke-width="0.6"/>
<polygon points="903.1,430.1 917.2,433.1 925.2,427.1 911.2,424.0" fill="#eaa251" stroke="#eaa251" stroke-width="0.6"/>
<polygon points="911.2,424.0 925.2,427.1 932.9,421.2 919.1,418.2" fill="#eca84e" stroke="#eca84e" stroke-width="0.6"/>
<polygon points="919.1,418.2 932.9,421.2 940.4,415.4 926.7,412.5" fill="#eead4a" stroke="#eead4a" stroke-width="0.6"/>
<polygon points="926.7,412.5 940.4,415.4 947.7,409.2 934.1,406.6" fill="#eeb344" stroke="#eeb344" stroke-width="0.6"/>
<polygon points="934.1,406.6 947.7,409.2 954.8,403.2 941.2,400.8" fill="#ecb83d" stroke="#ecb83d" stroke-width="0.6"/>
<polygon points="941.2,400.8 954.8,403.2 961.6,397.9 948.1,395.7" fill="#eabc37" stroke="#eabc37" stroke-width="0.6"/>
<polygon points="948.1,395.7 961.6,397.9 968.1,393.9 954.7,391.8" fill="#e0b533" stroke="#e0b533" stroke-width="0.6"/>
<polygon points="954.7,391.8 968.1,393.9 974.3,390.0 961.1,388.0" fill="#dfb433" stroke="#dfb433" stroke-width="0.6"/>
<polygon points="961.1,388.0 974.3,390.0 980.4,385.7 967.3,383.9" fill="#e2b734" stroke="#e2b734" stroke-width="0.6"/>
<polygon points="967.3,383.9 980.4,385.7 986.4,381.2 973.4,379.8" fill="#e2b832" stroke="#e2b832" stroke-width="0.6"/>
<polygon points="973.4,379.8 986.4,381.2 992.2,376.9 979.3,375.8" fill="#deb82f" stroke="#deb82f" stroke-width="0.6"/>
<polygon points="979.3,375.8 992.2,376.9 997.8,372.7 985.0,371.7" fill="#ddb92c" stroke="#ddb92c" stroke-width="0.6"/>
<polygon points="985.0,371.7 997.8,372.7 1003.3,368.6 990.6,367.5" fill="#dfbf29" stroke="#dfbf29" stroke-width="0.6"/>
<polygon points="990.6,367.5 1003.3,368.6 1008.7,364.3 996.1,363.1" fill="#e3c725" stroke="#e3c725" stroke-width="0.6"/>
<polygon points="996.1,363.1 1008.7,364.3 1013.9,360.1 1001.4,359.0" fill="#e4cc21" stroke="#e4cc21" stroke-width="0.6"/>
<polygon points="1001.4,359.0 1013.9,360.1 1018.9,356.0 1006.6,355.0" fill="#e4d11c" stroke="#e4d11c" stroke-width="0.6"/>
<polygon points="1006.6,355.0 1018.9,356.0 1023.9,352.0 1011.6,351.0" fill="#e4d617" stroke="#e4d617" stroke-width="0.6"/>
<polygon points="1011.6,351.0 1023.9,352.0 1028.8,347.2 1016.6,346.3" fill="#e6e00f" stroke="#e6e00f" stroke-width="0.6"/>
<polygon points="1016.6,346.3 1028.8,347.2 1033.6,342.4 1021.5,341.6" fill="#e6e609" stroke="#e6e609" stroke-width="0.6"/>
<polyline points="523.1,361.2 535.4,360.0 547.2,358.9 558.8,358.3 570.1,357.7 581.0,357.2 591.6,356.8 601.9,356.5 611.8,354.9 621.4,352.9 630.6,349.7 639.6,346.8 648.5,344.8 657.1,342.7 665.5,340.5 673.8,338.0 681.8,335.6 689.6,333.5 697.3,331.7 704.8,330.0 712.1,328.0 719.3,325.7 726.3,323.4 733.1,321.2 739.8,318.5 746.3,315.9 752.8,313.3 759.1,310.6 765.2,307.4 771.3,304.2" fill="none" stroke="rgba(60,28,36,0.78)" stroke-width="1"/>
<polyline points="529.8,363.6 542.1,362.4 554.0,361.2 565.6,360.5 576.8,359.9 587.8,359.4 598.4,359.1 608.8,358.9 618.7,357.6 628.3,355.8 637.6,352.5 646.6,349.5 655.4,347.2 664.1,345.1 672.5,342.8 680.7,340.3 688.7,337.9 696.6,335.8 704.2,334.0 711.7,332.2 719.1,330.4 726.2,328.2 733.2,325.8 740.0,323.4 746.7,320.6 753.2,317.8 759.6,315.2 765.9,312.5 772.0,309.3 778.1,306.1" fill="none" stroke="rgba(60,28,36,0.78)" stroke-width="1"/>
<polyline points="536.6,366.0 548.9,364.8 560.9,363.5 572.5,362.8 583.8,362.1 594.8,361.7 605.4,361.4 615.8,361.2 625.8,360.0 635.4,358.3 644.7,355.1 653.7,351.9 662.6,349.6 671.2,347.4 679.6,345.1 687.8,342.6 695.8,340.1 703.7,338.1 711.3,336.2 718.8,334.5 726.1,332.6 733.2,330.5 740.2,328.1 747.0,325.5 753.7,322.6 760.2,319.8 766.6,317.2 772.9,314.5 779.0,311.2 785.0,308.0" fill="none" stroke="rgba(60,28,36,0.78)" stroke-width="1"/>
<polyline points="543.6,368.4 555.9,367.2 567.9,366.0 579.6,365.2 590.9,364.4 601.9,363.9 612.6,363.7 623.0,363.5 633.0,362.5 642.6,360.8 651.9,357.6 660.9,354.4 669.8,351.9 678.4,349.7 686.9,347.3 695.1,344.8 703.1,342.4 710.9,340.3 718.5,338.4 726.0,336.6 733.3,334.8 740.4,332.6 747.4,330.2 754.2,327.5 760.8,324.5 767.3,321.7 773.7,319.0 779.9,316.3 786.1,313.0 792.1,309.7" fill="none" stroke="rgba(60,28,36,0.78)" stroke-width="1"/>
<polyline points="550.9,372.0 563.3,370.7 575.3,369.3 587.0,368.3 598.3,367.4 609.3,366.9 620.0,366.6 630.4,366.4 640.4,365.5 650.1,363.8 659.3,360.4 668.4,357.1 677.2,354.5 685.9,352.3 694.3,349.8 702.5,347.2 710.4,344.7 718.3,342.5 725.9,340.6 733.4,338.7 740.6,336.8 747.7,334.6 754.7,332.1 761.4,329.2 768.1,326.1 774.6,323.2 780.9,320.4 787.1,317.6 793.2,314.2 799.2,310.9" fill="none" stroke="rgba(60,28,36,0.78)" stroke-width="1"/>
<polyline points="558.4,375.7 570.8,374.3 582.8,372.8 594.5,371.7 605.9,370.6 616.9,370.0 627.6,369.7 638.0,369.5 648.0,368.6 657.6,366.8 666.9,363.4 676.0,360.0 684.8,357.3 693.4,354.9 701.8,352.4 710.0,349.7 718.0,347.1 725.8,344.9 733.4,342.9 740.8,340.9 748.1,338.9 755.2,336.7 762.1,334.0 768.8,331.0 775.5,327.8 781.9,324.8 788.3,321.9 794.5,319.0 800.6,315.5 806.5,312.1" fill="none" stroke="rgba(60,28,36,0.78)" stroke-width="1"/>
<polyline points="566.0,379.6 578.5,378.0 590.6,376.4 602.3,375.1 613.6,373.9 624.6,373.3 635.3,372.8 645.7,372.6 655.7,371.7 665.4,370.0 674.7,366.4 683.7,362.9 692.5,360.1 701.1,357.7 709.5,355.0 717.7,352.2 725.7,349.6 733.5,347.3 741.1,345.2 748.5,343.1 755.7,341.0 762.8,338.7 769.7,336.0 776.4,332.8 783.0,329.5 789.4,326.4 795.8,323.4 802.0,320.4 808.0,316.8 814.0,313.3" fill="none" stroke="rgba(60,28,36,0.78)" stroke-width="1"/>
<polyline points="573.9,383.5 586.4,381.8 598.5,380.1 610.2,378.6 621.5,377.2 632.6,376.5 643.3,376.0 653.6,375.7 663.7,374.8 673.3,373.0 682.6,369.4 691.6,365.8 700.4,362.9 709.0,360.3 717.4,357.6 725.6,354.7 733.5,351.9 741.3,349.6 748.9,347.4 756.2,345.2 763.5,343.0 770.5,340.6 777.4,337.7 784.1,334.4 790.7,330.9 797.1,327.7 803.4,324.6 809.6,321.6 815.6,317.9 821.6,314.3" fill="none" stroke="rgba(60,28,36,0.78)" stroke-width="1"/>
<polyline points="582.0,387.2 594.5,385.4 606.6,383.6 618.3,381.9 629.6,380.3 640.7,379.5 651.4,379.0 661.7,378.7 671.8,377.8 681.4,375.9 690.7,372.2 699.7,368.5 708.5,365.4 717.1,362.8 725.4,360.0 733.6,357.0 741.5,354.1 749.3,351.7 756.8,349.4 764.2,347.1 771.4,344.8 778.4,342.4 785.2,339.4 791.9,335.9 798.5,332.3 804.9,329.0 811.2,325.8 817.3,322.7 823.4,318.9 829.3,315.2" fill="none" stroke="rgba(60,28,36,0.78)" stroke-width="1"/>
<polyline points="590.3,391.0 602.8,389.1 614.9,387.1 626.6,385.3 637.9,383.5 649.0,382.6 659.7,382.0 670.0,381.7 680.0,380.8 689.7,378.8 698.9,375.0 707.9,371.2 716.7,368.1 725.3,365.3 733.6,362.4 741.8,359.3 749.7,356.3 757.4,353.8 764.9,351.5 772.3,349.1 779.4,346.7 786.4,344.2 793.3,341.1 799.9,337.5 806.5,333.7 812.9,330.3 819.1,327.0 825.3,323.8 831.3,319.9 837.2,316.1" fill="none" stroke="rgba(60,28,36,0.78)" stroke-width="1"/>
<polyline points="598.7,395.0 611.3,392.9 623.4,390.8 635.1,388.7 646.4,386.8 657.5,385.9 668.2,385.2 678.5,384.7 688.5,383.9 698.1,381.8 707.4,377.9 716.4,374.0 725.2,370.7 733.7,367.9 742.0,364.8 750.1,361.7 758.0,358.6 765.7,356.1 773.2,353.6 780.6,351.1 787.7,348.7 794.7,346.1 801.5,342.9 808.1,339.1 814.6,335.3 821.0,331.8 827.2,328.4 833.3,325.1 839.3,321.1 845.2,317.3" fill="none" stroke="rgba(60,28,36,0.78)" stroke-width="1"/>
<polyline points="607.5,399.4 620.1,397.2 632.2,394.9 643.9,392.7 655.2,390.7 666.2,389.6 676.9,388.9 687.2,388.4 697.2,387.6 706.8,385.4 716.1,381.4 725.0,377.4 733.8,374.1 742.3,371.1 750.6,368.0 758.7,364.8 766.6,361.7 774.2,359.1 781.7,356.6 789.0,354.0 796.1,351.4 803.0,348.8 809.8,345.5 816.4,341.7 822.9,337.8 829.3,334.2 835.5,330.7 841.5,327.3 847.5,323.3 853.3,319.4" fill="none" stroke="rgba(60,28,36,0.78)" stroke-width="1"/>
<polyline points="616.5,404.2 629.1,401.9 641.2,399.5 652.9,397.1 664.2,394.8 675.2,393.7 685.9,392.9 696.2,392.3 706.1,391.5 715.7,389.2 724.9,385.1 733.9,381.1 742.6,377.6 751.1,374.5 759.4,371.3 767.5,368.0 775.3,364.8 782.9,362.1 790.4,359.6 797.6,356.9 804.7,354.3 811.6,351.6 818.3,348.2 824.9,344.3 831.4,340.3 837.7,336.6 843.9,333.1 849.9,329.7 855.8,325.6 861.6,321.6" fill="none" stroke="rgba(60,28,36,0.78)" stroke-width="1"/>
<polyline points="625.8,409.2 638.4,406.7 650.5,404.2 662.2,401.5 673.5,399.0 684.4,397.8 695.1,396.9 705.3,396.3 715.3,395.4 724.8,393.0 734.0,388.7 743.0,384.6 751.7,381.0 760.1,377.8 768.4,374.5 776.4,371.1 784.2,367.8 791.8,365.1 799.2,362.4 806.4,359.7 813.5,357.0 820.3,354.2 827.0,350.7 833.6,346.7 840.0,342.6 846.3,338.9 852.4,335.4 858.4,331.8 864.3,327.7 870.1,323.7" fill="none" stroke="rgba(60,28,36,0.78)" stroke-width="1"/>
<polyline points="635.4,414.5 647.9,411.9 660.0,409.1 671.7,406.2 682.9,403.5 693.9,402.2 704.5,401.1 714.7,400.4 724.6,399.4 734.1,396.8 743.3,392.4 752.2,388.1 760.9,384.4 769.4,381.1 777.6,377.7 785.5,374.1 793.3,370.7 800.9,367.9 808.2,365.2 815.4,362.3 822.4,359.5 829.2,356.7 835.9,353.2 842.4,349.1 848.8,344.9 855.0,341.1 861.1,337.5 867.1,333.9 873.0,329.7 878.7,325.6" fill="none" stroke="rgba(60,28,36,0.78)" stroke-width="1"/>
<polyline points="645.2,420.4 657.8,417.6 669.8,414.6 681.5,411.4 692.7,408.5 703.6,406.9 714.2,405.7 724.4,404.8 734.2,403.8 743.7,401.0 752.8,396.3 761.7,391.9 770.4,388.1 778.8,384.6 786.9,381.0 794.9,377.3 802.6,373.8 810.1,370.9 817.5,368.1 824.6,365.1 831.5,362.2 838.3,359.2 844.9,355.6 851.4,351.5 857.8,347.2 864.0,343.4 870.0,339.7 876.0,336.0 881.8,331.8 887.5,327.6" fill="none" stroke="rgba(60,28,36,0.78)" stroke-width="1"/>
<polyline points="655.3,426.0 667.9,423.0 679.9,419.7 691.5,416.3 702.7,413.0 713.6,411.3 724.1,410.0 734.2,408.9 744.1,407.8 753.5,404.8 762.6,399.9 771.5,395.4 780.1,391.4 788.4,387.8 796.5,384.0 804.5,380.2 812.1,376.6 819.6,373.6 826.9,370.7 834.0,367.7 840.9,364.7 847.6,361.7 854.2,358.0 860.7,353.8 867.0,349.5 873.1,345.6 879.1,341.8 885.0,338.2 890.8,333.8 896.5,329.6" fill="none" stroke="rgba(60,28,36,0.78)" stroke-width="1"/>
<polyline points="665.6,430.8 678.2,427.6 690.2,424.2 701.7,420.4 712.9,416.9 723.8,415.1 734.2,413.6 744.4,412.4 754.1,411.1 763.5,407.9 772.6,402.9 781.4,398.3 790.0,394.1 798.3,390.3 806.4,386.4 814.3,382.5 821.9,378.8 829.3,375.7 836.6,372.8 843.6,369.6 850.5,366.6 857.1,363.5 863.7,359.8 870.1,355.5 876.4,351.2 882.5,347.3 888.4,343.5 894.3,339.8 900.0,335.5 905.6,331.2" fill="none" stroke="rgba(60,28,36,0.78)" stroke-width="1"/>
<polyline points="676.3,435.8 688.8,432.4 700.8,428.7 712.3,424.7 723.4,420.9 734.2,418.9 744.7,417.2 754.7,415.8 764.4,414.5 773.8,411.0 782.8,405.8 791.6,401.0 800.1,396.7 808.4,392.8 816.5,388.7 824.3,384.6 831.9,380.8 839.3,377.7 846.5,374.6 853.5,371.4 860.3,368.3 866.9,365.2 873.4,361.5 879.7,357.1 886.0,352.8 892.0,348.8 897.9,345.0 903.7,341.3 909.4,336.9 915.0,332.6" fill="none" stroke="rgba(60,28,36,0.78)" stroke-width="1"/>
<polyline points="687.2,440.4 699.7,436.8 711.6,432.9 723.1,428.6 734.2,424.5 745.0,422.4 755.4,420.5 765.4,419.0 775.0,417.5 784.3,413.8 793.4,408.4 802.1,403.5 810.6,399.0 818.8,394.9 826.8,390.7 834.6,386.5 842.2,382.6 849.5,379.4 856.6,376.3 863.6,373.1 870.3,369.9 876.9,366.7 883.3,363.0 889.6,358.6 895.8,354.3 901.8,350.3 907.7,346.5 913.4,342.8 919.0,338.4 924.6,334.0" fill="none" stroke="rgba(60,28,36,0.78)" stroke-width="1"/>
<polyline points="698.5,444.9 710.9,441.1 722.8,437.0 734.3,432.4 745.4,428.0 756.1,425.7 766.4,423.7 776.3,422.0 785.9,420.4 795.2,416.5 804.2,410.8 812.9,405.8 821.3,401.2 829.5,397.0 837.5,392.6 845.2,388.2 852.7,384.2 860.0,381.0 867.0,377.9 873.9,374.6 880.6,371.3 887.1,368.2 893.5,364.4 899.7,360.0 905.9,355.7 911.8,351.7 917.6,347.9 923.3,344.2 928.9,339.8 934.3,335.4" fill="none" stroke="rgba(60,28,36,0.78)" stroke-width="1"/>
<polyline points="710.1,449.5 722.5,445.5 734.4,441.1 745.8,436.2 756.8,431.5 767.5,429.0 777.7,426.7 787.6,424.9 797.2,423.1 806.4,418.9 815.3,413.0 824.0,407.8 832.3,403.0 840.5,398.6 848.4,394.1 856.1,389.6 863.5,385.4 870.7,382.2 877.7,379.0 884.5,375.6 891.2,372.3 897.6,369.0 903.9,365.2 910.1,360.9 916.2,356.5 922.1,352.5 927.8,348.7 933.4,345.0 939.0,340.5 944.4,336.1" fill="none" stroke="rgba(60,28,36,0.78)" stroke-width="1"/>
<polyline points="722.1,454.3 734.5,450.0 746.3,445.4 757.7,440.1 768.7,435.1 779.3,432.3 789.4,429.9 799.3,427.8 808.7,425.9 817.9,421.3 826.7,415.2 835.4,409.8 843.7,404.9 851.8,400.3 859.6,395.6 867.2,390.9 874.6,386.7 881.8,383.3 888.7,380.1 895.5,376.6 902.0,373.2 908.4,369.9 914.7,366.1 920.8,361.7 926.8,357.4 932.6,353.4 938.3,349.5 943.8,345.8 949.3,341.3 954.7,336.9" fill="none" stroke="rgba(60,28,36,0.78)" stroke-width="1"/>
<polyline points="734.5,459.3 746.8,454.7 758.6,449.8 769.9,444.2 780.9,438.8 791.4,435.8 801.5,433.2 811.2,430.9 820.6,428.8 829.7,423.9 838.5,417.4 847.1,411.9 855.4,406.8 863.4,402.1 871.2,397.2 878.7,392.4 886.1,388.0 893.1,384.5 900.0,381.2 906.7,377.7 913.1,374.2 919.5,370.8 925.6,366.9 931.7,362.6 937.6,358.2 943.4,354.2 949.0,350.4 954.5,346.6 959.9,342.1 965.2,337.6" fill="none" stroke="rgba(60,28,36,0.78)" stroke-width="1"/>
<polyline points="747.4,464.4 759.6,459.6 771.3,454.3 782.6,448.4 793.5,442.6 803.9,439.5 813.9,436.6 823.6,434.0 832.9,431.7 841.9,426.5 850.7,419.8 859.2,414.1 867.4,408.9 875.3,404.0 883.0,398.8 890.5,393.8 897.8,389.3 904.8,385.8 911.5,382.4 918.2,378.8 924.6,375.2 930.8,371.7 936.9,367.8 942.9,363.5 948.7,359.1 954.4,355.1 960.0,351.3 965.3,347.4 970.7,342.9 975.9,338.4" fill="none" stroke="rgba(60,28,36,0.78)" stroke-width="1"/>
<polyline points="760.6,469.7 772.8,464.6 784.5,459.1 795.7,452.7 806.5,446.6 816.8,443.2 826.8,440.1 836.3,437.3 845.5,434.8 854.5,429.2 863.2,422.2 871.6,416.4 879.7,411.0 887.6,405.9 895.2,400.6 902.7,395.4 909.8,390.8 916.7,387.2 923.4,383.7 930.0,379.9 936.3,376.3 942.4,372.7 948.5,368.8 954.4,364.4 960.1,360.1 965.7,356.0 971.2,352.2 976.5,348.3 981.8,343.7 986.9,339.3" fill="none" stroke="rgba(60,28,36,0.78)" stroke-width="1"/>
<polyline points="774.4,475.2 786.5,469.8 798.1,464.0 809.2,457.2 819.9,450.7 830.2,447.1 840.0,443.7 849.5,440.7 858.5,438.0 867.4,432.0 876.1,424.7 884.4,418.8 892.5,413.2 900.2,407.9 907.8,402.4 915.2,397.1 922.2,392.3 929.1,388.6 935.6,385.0 942.1,381.2 948.3,377.4 954.4,373.7 960.3,369.8 966.1,365.4 971.8,361.1 977.3,357.0 982.7,353.1 987.9,349.2 993.1,344.6 998.2,340.1" fill="none" stroke="rgba(60,28,36,0.78)" stroke-width="1"/>
<polyline points="788.7,480.9 800.7,475.2 812.2,469.0 823.2,461.9 833.8,455.0 844.0,451.1 853.7,447.5 863.0,444.2 872.0,441.2 880.8,434.8 889.4,427.2 897.6,421.2 905.6,415.5 913.3,410.0 920.8,404.3 928.0,398.8 935.0,393.8 941.7,390.1 948.2,386.4 954.5,382.5 960.7,378.5 966.7,374.7 972.5,370.7 978.2,366.4 983.8,362.0 989.2,357.9 994.5,354.0 999.6,350.1 1004.7,345.4 1009.7,340.9" fill="none" stroke="rgba(60,28,36,0.78)" stroke-width="1"/>
<polyline points="803.5,487.4 815.3,481.3 826.7,474.8 837.7,467.2 848.2,459.9 858.2,455.7 867.8,451.8 877.0,448.2 885.8,444.9 894.6,438.0 903.1,430.1 911.2,424.0 919.1,418.2 926.7,412.5 934.1,406.6 941.2,400.8 948.1,395.7 954.7,391.8 961.1,388.0 967.3,383.9 973.4,379.8 979.3,375.8 985.0,371.7 990.6,367.5 996.1,363.1 1001.4,359.0 1006.6,355.0 1011.6,351.0 1016.6,346.3 1021.5,341.6" fill="none" stroke="rgba(60,28,36,0.78)" stroke-width="1"/>
<polyline points="818.8,495.0 830.5,488.5 841.8,481.6 852.6,473.4 863.0,465.6 872.9,461.1 882.4,456.9 891.4,452.9 900.1,449.0 908.8,441.4 917.2,433.1 925.2,427.1 932.9,421.2 940.4,415.4 947.7,409.2 954.8,403.2 961.6,397.9 968.1,393.9 974.3,390.0 980.4,385.7 986.4,381.2 992.2,376.9 997.8,372.7 1003.3,368.6 1008.7,364.3 1013.9,360.1 1018.9,356.0 1023.9,352.0 1028.8,347.2 1033.6,342.4" fill="none" stroke="rgba(60,28,36,0.78)" stroke-width="1"/>
<polyline points="523.1,361.2 529.8,363.6 536.6,366.0 543.6,368.4 550.9,372.0 558.4,375.7 566.0,379.6 573.9,383.5 582.0,387.2 590.3,391.0 598.7,395.0 607.5,399.4 616.5,404.2 625.8,409.2 635.4,414.5 645.2,420.4 655.3,426.0 665.6,430.8 676.3,435.8 687.2,440.4 698.5,444.9 710.1,449.5 722.1,454.3 734.5,459.3 747.4,464.4 760.6,469.7 774.4,475.2 788.7,480.9 803.5,487.4 818.8,495.0" fill="none" stroke="rgba(60,28,36,0.78)" stroke-width="1"/>
<polyline points="535.4,360.0 542.1,362.4 548.9,364.8 555.9,367.2 563.3,370.7 570.8,374.3 578.5,378.0 586.4,381.8 594.5,385.4 602.8,389.1 611.3,392.9 620.1,397.2 629.1,401.9 638.4,406.7 647.9,411.9 657.8,417.6 667.9,423.0 678.2,427.6 688.8,432.4 699.7,436.8 710.9,441.1 722.5,445.5 734.5,450.0 746.8,454.7 759.6,459.6 772.8,464.6 786.5,469.8 800.7,475.2 815.3,481.3 830.5,488.5" fill="none" stroke="rgba(60,28,36,0.78)" stroke-width="1"/>
<polyline points="547.2,358.9 554.0,361.2 560.9,363.5 567.9,366.0 575.3,369.3 582.8,372.8 590.6,376.4 598.5,380.1 606.6,383.6 614.9,387.1 623.4,390.8 632.2,394.9 641.2,399.5 650.5,404.2 660.0,409.1 669.8,414.6 679.9,419.7 690.2,424.2 700.8,428.7 711.6,432.9 722.8,437.0 734.4,441.1 746.3,445.4 758.6,449.8 771.3,454.3 784.5,459.1 798.1,464.0 812.2,469.0 826.7,474.8 841.8,481.6" fill="none" stroke="rgba(60,28,36,0.78)" stroke-width="1"/>
<polyline points="558.8,358.3 565.6,360.5 572.5,362.8 579.6,365.2 587.0,368.3 594.5,371.7 602.3,375.1 610.2,378.6 618.3,381.9 626.6,385.3 635.1,388.7 643.9,392.7 652.9,397.1 662.2,401.5 671.7,406.2 681.5,411.4 691.5,416.3 701.7,420.4 712.3,424.7 723.1,428.6 734.3,432.4 745.8,436.2 757.7,440.1 769.9,444.2 782.6,448.4 795.7,452.7 809.2,457.2 823.2,461.9 837.7,467.2 852.6,473.4" fill="none" stroke="rgba(60,28,36,0.78)" stroke-width="1"/>
<polyline points="570.1,357.7 576.8,359.9 583.8,362.1 590.9,364.4 598.3,367.4 605.9,370.6 613.6,373.9 621.5,377.2 629.6,380.3 637.9,383.5 646.4,386.8 655.2,390.7 664.2,394.8 673.5,399.0 682.9,403.5 692.7,408.5 702.7,413.0 712.9,416.9 723.4,420.9 734.2,424.5 745.4,428.0 756.8,431.5 768.7,435.1 780.9,438.8 793.5,442.6 806.5,446.6 819.9,450.7 833.8,455.0 848.2,459.9 863.0,465.6" fill="none" stroke="rgba(60,28,36,0.78)" stroke-width="1"/>
<polyline points="581.0,357.2 587.8,359.4 594.8,361.7 601.9,363.9 609.3,366.9 616.9,370.0 624.6,373.3 632.6,376.5 640.7,379.5 649.0,382.6 657.5,385.9 666.2,389.6 675.2,393.7 684.4,397.8 693.9,402.2 703.6,406.9 713.6,411.3 723.8,415.1 734.2,418.9 745.0,422.4 756.1,425.7 767.5,429.0 779.3,432.3 791.4,435.8 803.9,439.5 816.8,443.2 830.2,447.1 844.0,451.1 858.2,455.7 872.9,461.1" fill="none" stroke="rgba(60,28,36,0.78)" stroke-width="1"/>
<polyline points="591.6,356.8 598.4,359.1 605.4,361.4 612.6,363.7 620.0,366.6 627.6,369.7 635.3,372.8 643.3,376.0 651.4,379.0 659.7,382.0 668.2,385.2 676.9,388.9 685.9,392.9 695.1,396.9 704.5,401.1 714.2,405.7 724.1,410.0 734.2,413.6 744.7,417.2 755.4,420.5 766.4,423.7 777.7,426.7 789.4,429.9 801.5,433.2 813.9,436.6 826.8,440.1 840.0,443.7 853.7,447.5 867.8,451.8 882.4,456.9" fill="none" stroke="rgba(60,28,36,0.78)" stroke-width="1"/>
<polyline points="601.9,356.5 608.8,358.9 615.8,361.2 623.0,363.5 630.4,366.4 638.0,369.5 645.7,372.6 653.6,375.7 661.7,378.7 670.0,381.7 678.5,384.7 687.2,388.4 696.2,392.3 705.3,396.3 714.7,400.4 724.4,404.8 734.2,408.9 744.4,412.4 754.7,415.8 765.4,419.0 776.3,422.0 787.6,424.9 799.3,427.8 811.2,430.9 823.6,434.0 836.3,437.3 849.5,440.7 863.0,444.2 877.0,448.2 891.4,452.9" fill="none" stroke="rgba(60,28,36,0.78)" stroke-width="1"/>
<polyline points="611.8,354.9 618.7,357.6 625.8,360.0 633.0,362.5 640.4,365.5 648.0,368.6 655.7,371.7 663.7,374.8 671.8,377.8 680.0,380.8 688.5,383.9 697.2,387.6 706.1,391.5 715.3,395.4 724.6,399.4 734.2,403.8 744.1,407.8 754.1,411.1 764.4,414.5 775.0,417.5 785.9,420.4 797.2,423.1 808.7,425.9 820.6,428.8 832.9,431.7 845.5,434.8 858.5,438.0 872.0,441.2 885.8,444.9 900.1,449.0" fill="none" stroke="rgba(60,28,36,0.78)" stroke-width="1"/>
<polyline points="621.4,352.9 628.3,355.8 635.4,358.3 642.6,360.8 650.1,363.8 657.6,366.8 665.4,370.0 673.3,373.0 681.4,375.9 689.7,378.8 698.1,381.8 706.8,385.4 715.7,389.2 724.8,393.0 734.1,396.8 743.7,401.0 753.5,404.8 763.5,407.9 773.8,411.0 784.3,413.8 795.2,416.5 806.4,418.9 817.9,421.3 829.7,423.9 841.9,426.5 854.5,429.2 867.4,432.0 880.8,434.8 894.6,438.0 908.8,441.4" fill="none" stroke="rgba(60,28,36,0.78)" stroke-width="1"/>
<polyline points="630.6,349.7 637.6,352.5 644.7,355.1 651.9,357.6 659.3,360.4 666.9,363.4 674.7,366.4 682.6,369.4 690.7,372.2 698.9,375.0 707.4,377.9 716.1,381.4 724.9,385.1 734.0,388.7 743.3,392.4 752.8,396.3 762.6,399.9 772.6,402.9 782.8,405.8 793.4,408.4 804.2,410.8 815.3,413.0 826.7,415.2 838.5,417.4 850.7,419.8 863.2,422.2 876.1,424.7 889.4,427.2 903.1,430.1 917.2,433.1" fill="none" stroke="rgba(60,28,36,0.78)" stroke-width="1"/>
<polyline points="639.6,346.8 646.6,349.5 653.7,351.9 660.9,354.4 668.4,357.1 676.0,360.0 683.7,362.9 691.6,365.8 699.7,368.5 707.9,371.2 716.4,374.0 725.0,377.4 733.9,381.1 743.0,384.6 752.2,388.1 761.7,391.9 771.5,395.4 781.4,398.3 791.6,401.0 802.1,403.5 812.9,405.8 824.0,407.8 835.4,409.8 847.1,411.9 859.2,414.1 871.6,416.4 884.4,418.8 897.6,421.2 911.2,424.0 925.2,427.1" fill="none" stroke="rgba(60,28,36,0.78)" stroke-width="1"/>
<polyline points="648.5,344.8 655.4,347.2 662.6,349.6 669.8,351.9 677.2,354.5 684.8,357.3 692.5,360.1 700.4,362.9 708.5,365.4 716.7,368.1 725.2,370.7 733.8,374.1 742.6,377.6 751.7,381.0 760.9,384.4 770.4,388.1 780.1,391.4 790.0,394.1 800.1,396.7 810.6,399.0 821.3,401.2 832.3,403.0 843.7,404.9 855.4,406.8 867.4,408.9 879.7,411.0 892.5,413.2 905.6,415.5 919.1,418.2 932.9,421.2" fill="none" stroke="rgba(60,28,36,0.78)" stroke-width="1"/>
<polyline points="657.1,342.7 664.1,345.1 671.2,347.4 678.4,349.7 685.9,352.3 693.4,354.9 701.1,357.7 709.0,360.3 717.1,362.8 725.3,365.3 733.7,367.9 742.3,371.1 751.1,374.5 760.1,377.8 769.4,381.1 778.8,384.6 788.4,387.8 798.3,390.3 808.4,392.8 818.8,394.9 829.5,397.0 840.5,398.6 851.8,400.3 863.4,402.1 875.3,404.0 887.6,405.9 900.2,407.9 913.3,410.0 926.7,412.5 940.4,415.4" fill="none" stroke="rgba(60,28,36,0.78)" stroke-width="1"/>
<polyline points="665.5,340.5 672.5,342.8 679.6,345.1 686.9,347.3 694.3,349.8 701.8,352.4 709.5,355.0 717.4,357.6 725.4,360.0 733.6,362.4 742.0,364.8 750.6,368.0 759.4,371.3 768.4,374.5 777.6,377.7 786.9,381.0 796.5,384.0 806.4,386.4 816.5,388.7 826.8,390.7 837.5,392.6 848.4,394.1 859.6,395.6 871.2,397.2 883.0,398.8 895.2,400.6 907.8,402.4 920.8,404.3 934.1,406.6 947.7,409.2" fill="none" stroke="rgba(60,28,36,0.78)" stroke-width="1"/>
<polyline points="673.8,338.0 680.7,340.3 687.8,342.6 695.1,344.8 702.5,347.2 710.0,349.7 717.7,352.2 725.6,354.7 733.6,357.0 741.8,359.3 750.1,361.7 758.7,364.8 767.5,368.0 776.4,371.1 785.5,374.1 794.9,377.3 804.5,380.2 814.3,382.5 824.3,384.6 834.6,386.5 845.2,388.2 856.1,389.6 867.2,390.9 878.7,392.4 890.5,393.8 902.7,395.4 915.2,397.1 928.0,398.8 941.2,400.8 954.8,403.2" fill="none" stroke="rgba(60,28,36,0.78)" stroke-width="1"/>
<polyline points="681.8,335.6 688.7,337.9 695.8,340.1 703.1,342.4 710.4,344.7 718.0,347.1 725.7,349.6 733.5,351.9 741.5,354.1 749.7,356.3 758.0,358.6 766.6,361.7 775.3,364.8 784.2,367.8 793.3,370.7 802.6,373.8 812.1,376.6 821.9,378.8 831.9,380.8 842.2,382.6 852.7,384.2 863.5,385.4 874.6,386.7 886.1,388.0 897.8,389.3 909.8,390.8 922.2,392.3 935.0,393.8 948.1,395.7 961.6,397.9" fill="none" stroke="rgba(60,28,36,0.78)" stroke-width="1"/>
<polyline points="689.6,333.5 696.6,335.8 703.7,338.1 710.9,340.3 718.3,342.5 725.8,344.9 733.5,347.3 741.3,349.6 749.3,351.7 757.4,353.8 765.7,356.1 774.2,359.1 782.9,362.1 791.8,365.1 800.9,367.9 810.1,370.9 819.6,373.6 829.3,375.7 839.3,377.7 849.5,379.4 860.0,381.0 870.7,382.2 881.8,383.3 893.1,384.5 904.8,385.8 916.7,387.2 929.1,388.6 941.7,390.1 954.7,391.8 968.1,393.9" fill="none" stroke="rgba(60,28,36,0.78)" stroke-width="1"/>
<polyline points="697.3,331.7 704.2,334.0 711.3,336.2 718.5,338.4 725.9,340.6 733.4,342.9 741.1,345.2 748.9,347.4 756.8,349.4 764.9,351.5 773.2,353.6 781.7,356.6 790.4,359.6 799.2,362.4 808.2,365.2 817.5,368.1 826.9,370.7 836.6,372.8 846.5,374.6 856.6,376.3 867.0,377.9 877.7,379.0 888.7,380.1 900.0,381.2 911.5,382.4 923.4,383.7 935.6,385.0 948.2,386.4 961.1,388.0 974.3,390.0" fill="none" stroke="rgba(60,28,36,0.78)" stroke-width="1"/>
<polyline points="704.8,330.0 711.7,332.2 718.8,334.5 726.0,336.6 733.4,338.7 740.8,340.9 748.5,343.1 756.2,345.2 764.2,347.1 772.3,349.1 780.6,351.1 789.0,354.0 797.6,356.9 806.4,359.7 815.4,362.3 824.6,365.1 834.0,367.7 843.6,369.6 853.5,371.4 863.6,373.1 873.9,374.6 884.5,375.6 895.5,376.6 906.7,377.7 918.2,378.8 930.0,379.9 942.1,381.2 954.5,382.5 967.3,383.9 980.4,385.7" fill="none" stroke="rgba(60,28,36,0.78)" stroke-width="1"/>
<polyline points="712.1,328.0 719.1,330.4 726.1,332.6 733.3,334.8 740.6,336.8 748.1,338.9 755.7,341.0 763.5,343.0 771.4,344.8 779.4,346.7 787.7,348.7 796.1,351.4 804.7,354.3 813.5,357.0 822.4,359.5 831.5,362.2 840.9,364.7 850.5,366.6 860.3,368.3 870.3,369.9 880.6,371.3 891.2,372.3 902.0,373.2 913.1,374.2 924.6,375.2 936.3,376.3 948.3,377.4 960.7,378.5 973.4,379.8 986.4,381.2" fill="none" stroke="rgba(60,28,36,0.78)" stroke-width="1"/>
<polyline points="719.3,325.7 726.2,328.2 733.2,330.5 740.4,332.6 747.7,334.6 755.2,336.7 762.8,338.7 770.5,340.6 778.4,342.4 786.4,344.2 794.7,346.1 803.0,348.8 811.6,351.6 820.3,354.2 829.2,356.7 838.3,359.2 847.6,361.7 857.1,363.5 866.9,365.2 876.9,366.7 887.1,368.2 897.6,369.0 908.4,369.9 919.5,370.8 930.8,371.7 942.4,372.7 954.4,373.7 966.7,374.7 979.3,375.8 992.2,376.9" fill="none" stroke="rgba(60,28,36,0.78)" stroke-width="1"/>
<polyline points="726.3,323.4 733.2,325.8 740.2,328.1 747.4,330.2 754.7,332.1 762.1,334.0 769.7,336.0 777.4,337.7 785.2,339.4 793.3,341.1 801.5,342.9 809.8,345.5 818.3,348.2 827.0,350.7 835.9,353.2 844.9,355.6 854.2,358.0 863.7,359.8 873.4,361.5 883.3,363.0 893.5,364.4 903.9,365.2 914.7,366.1 925.6,366.9 936.9,367.8 948.5,368.8 960.3,369.8 972.5,370.7 985.0,371.7 997.8,372.7" fill="none" stroke="rgba(60,28,36,0.78)" stroke-width="1"/>
<polyline points="733.1,321.2 740.0,323.4 747.0,325.5 754.2,327.5 761.4,329.2 768.8,331.0 776.4,332.8 784.1,334.4 791.9,335.9 799.9,337.5 808.1,339.1 816.4,341.7 824.9,344.3 833.6,346.7 842.4,349.1 851.4,351.5 860.7,353.8 870.1,355.5 879.7,357.1 889.6,358.6 899.7,360.0 910.1,360.9 920.8,361.7 931.7,362.6 942.9,363.5 954.4,364.4 966.1,365.4 978.2,366.4 990.6,367.5 1003.3,368.6" fill="none" stroke="rgba(60,28,36,0.78)" stroke-width="1"/>
<polyline points="739.8,318.5 746.7,320.6 753.7,322.6 760.8,324.5 768.1,326.1 775.5,327.8 783.0,329.5 790.7,330.9 798.5,332.3 806.5,333.7 814.6,335.3 822.9,337.8 831.4,340.3 840.0,342.6 848.8,344.9 857.8,347.2 867.0,349.5 876.4,351.2 886.0,352.8 895.8,354.3 905.9,355.7 916.2,356.5 926.8,357.4 937.6,358.2 948.7,359.1 960.1,360.1 971.8,361.1 983.8,362.0 996.1,363.1 1008.7,364.3" fill="none" stroke="rgba(60,28,36,0.78)" stroke-width="1"/>
<polyline points="746.3,315.9 753.2,317.8 760.2,319.8 767.3,321.7 774.6,323.2 781.9,324.8 789.4,326.4 797.1,327.7 804.9,329.0 812.9,330.3 821.0,331.8 829.3,334.2 837.7,336.6 846.3,338.9 855.0,341.1 864.0,343.4 873.1,345.6 882.5,347.3 892.0,348.8 901.8,350.3 911.8,351.7 922.1,352.5 932.6,353.4 943.4,354.2 954.4,355.1 965.7,356.0 977.3,357.0 989.2,357.9 1001.4,359.0 1013.9,360.1" fill="none" stroke="rgba(60,28,36,0.78)" stroke-width="1"/>
<polyline points="752.8,313.3 759.6,315.2 766.6,317.2 773.7,319.0 780.9,320.4 788.3,321.9 795.8,323.4 803.4,324.6 811.2,325.8 819.1,327.0 827.2,328.4 835.5,330.7 843.9,333.1 852.4,335.4 861.1,337.5 870.0,339.7 879.1,341.8 888.4,343.5 897.9,345.0 907.7,346.5 917.6,347.9 927.8,348.7 938.3,349.5 949.0,350.4 960.0,351.3 971.2,352.2 982.7,353.1 994.5,354.0 1006.6,355.0 1018.9,356.0" fill="none" stroke="rgba(60,28,36,0.78)" stroke-width="1"/>
<polyline points="759.1,310.6 765.9,312.5 772.9,314.5 779.9,316.3 787.1,317.6 794.5,319.0 802.0,320.4 809.6,321.6 817.3,322.7 825.3,323.8 833.3,325.1 841.5,327.3 849.9,329.7 858.4,331.8 867.1,333.9 876.0,336.0 885.0,338.2 894.3,339.8 903.7,341.3 913.4,342.8 923.3,344.2 933.4,345.0 943.8,345.8 954.5,346.6 965.3,347.4 976.5,348.3 987.9,349.2 999.6,350.1 1011.6,351.0 1023.9,352.0" fill="none" stroke="rgba(60,28,36,0.78)" stroke-width="1"/>
<polyline points="765.2,307.4 772.0,309.3 779.0,311.2 786.1,313.0 793.2,314.2 800.6,315.5 808.0,316.8 815.6,317.9 823.4,318.9 831.3,319.9 839.3,321.1 847.5,323.3 855.8,325.6 864.3,327.7 873.0,329.7 881.8,331.8 890.8,333.8 900.0,335.5 909.4,336.9 919.0,338.4 928.9,339.8 939.0,340.5 949.3,341.3 959.9,342.1 970.7,342.9 981.8,343.7 993.1,344.6 1004.7,345.4 1016.6,346.3 1028.8,347.2" fill="none" stroke="rgba(60,28,36,0.78)" stroke-width="1"/>
<polyline points="771.3,304.2 778.1,306.1 785.0,308.0 792.1,309.7 799.2,310.9 806.5,312.1 814.0,313.3 821.6,314.3 829.3,315.2 837.2,316.1 845.2,317.3 853.3,319.4 861.6,321.6 870.1,323.7 878.7,325.6 887.5,327.6 896.5,329.6 905.6,331.2 915.0,332.6 924.6,334.0 934.3,335.4 944.4,336.1 954.7,336.9 965.2,337.6 975.9,338.4 986.9,339.3 998.2,340.1 1009.7,340.9 1021.5,341.6 1033.6,342.4" fill="none" stroke="rgba(60,28,36,0.78)" stroke-width="1"/>
 </g>
 <use href="#hand" x="169" y="110" width="105" height="80"/>
 <use href="#hand" x="940" y="55" width="105" height="80"/>
 <use href="#hand" x="1115" y="54.5" width="105" height="80"/>
 <g fill="#e00" stroke="none">
  <circle cx="234" cy="152.8" r="11.9" fill="none" stroke="#e00" stroke-width="1.3"/>
  <path d="M233.2,144.6L236.2,144.6L234.6,161L231.3,161L232.3,150.5L230.2,150L230.5,148.5Z"/>
  <circle cx="1006" cy="97.8" r="11.9" fill="none" stroke="#e00" stroke-width="1.3"/>
  <text x="1006" y="105.9" font-family="Liberation Serif" font-size="24" font-weight="bold" text-anchor="middle">2</text>
  <circle cx="1180" cy="97" r="11.9" fill="none" stroke="#e00" stroke-width="1.3"/>
  <text x="1180" y="105.1" font-family="Liberation Serif" font-size="24" font-weight="bold" text-anchor="middle">3</text>
 </g>
</svg>
</body></html>
